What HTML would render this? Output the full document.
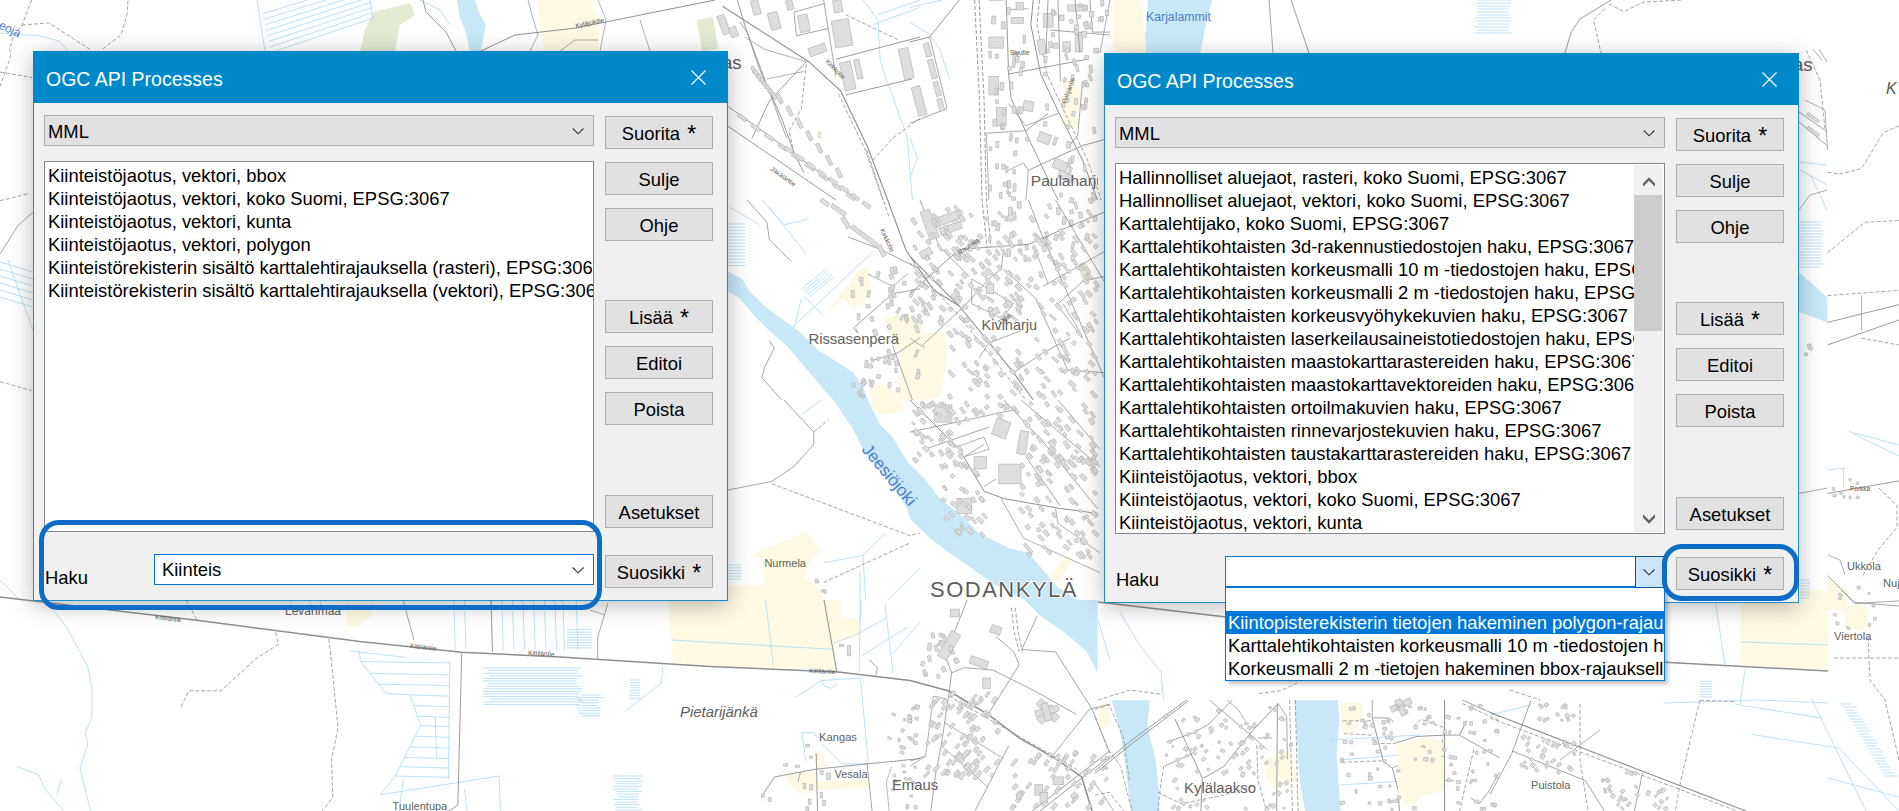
<!DOCTYPE html>
<html><head><meta charset="utf-8">
<style>
*{box-sizing:border-box;margin:0;padding:0}
html,body{width:1899px;height:811px;overflow:hidden;background:#fff}
body{position:relative;font-family:"Liberation Sans",sans-serif;font-size:18.4px;color:#000}
#map{position:absolute;left:0;top:0;width:1899px;height:811px}
.win{position:absolute;width:695px;height:550px;background:#f0f0f0;border:1px solid #1890d0;border-top:none;box-shadow:0 4px 22px rgba(0,0,0,0.28)}
.title{position:absolute;left:-1px;top:0;width:695px;height:52px;background:#0089ca}
.title span{position:absolute;left:13px;top:17px;color:#fff;font-size:19.5px}
.xbtn{position:absolute;left:658px;top:19px;width:15px;height:15px}
.abs{position:absolute}
.combo{position:absolute;background:#e1e1e1;border:1px solid #adadad}
.list{position:absolute;background:#fff;border:1px solid #828790;overflow:hidden}
.list div{height:23px;line-height:23px;white-space:nowrap;padding-left:3px;overflow:hidden}
.list.sb div{width:518px}
.btn{position:absolute;width:108px;height:33px;background:#e1e1e1;border:1px solid #adadad;text-align:center;line-height:33px}
.ast{font-size:23px;margin-left:2px;line-height:0;position:relative;top:2px}
.lbl{position:absolute;white-space:nowrap}
.hl{position:absolute;border:5px solid #0c6cc6;border-radius:20px}
.drop{position:absolute;background:#fff;border:1px solid #0078d7}
</style></head><body>
<div id="map"><svg width="1899" height="811" viewBox="0 0 1899 811"><polygon points="727.9,271.5 742.2,278.9 749.6,291.2 764.4,306 781.7,318.4 801.4,333.2 818.6,350.4 838.4,362.8 853.2,372.6 863,387.4 868,400 880.3,424.7 892.6,437 907.4,461.7 924.8,479 939.6,498.6 959.3,513.4 979,533.2 1008.6,548 1028.4,553 1043.2,570 1058,587.4 1077.7,600 1097.5,600 1097.5,672.8 1086.9,652 1066,633.8 1040,615.6 1024.4,600 1008.6,592.4 991.4,582.5 974,570 949.5,553 929.7,538 910,518.4 907.4,508.5 892.6,486.3 877.8,469 863,449.3 853.2,429.6 843.3,414.8 833.4,400 826,392.4 813.7,377.6 798.9,360.3 786.6,345.5 769.3,330.7 754.5,315.9 739.7,298.6 727.9,291.2" fill="#c8e8f8"/><polygon points="457,0 475,0 480,15 486,25 483,40 481,51 470,51 465,30 459,15" fill="#c8e8f8"/><polygon points="1148,0 1212,0 1206,25 1200,53 1140,53 1146,30" fill="#c8e8f8"/><polygon points="1799,272.4 1811.5,283 1827.5,297.4 1827.5,322.4 1799,311.7" fill="#c8e8f8"/><polygon points="1111.8,700.3 1150,700.3 1147.2,726.2 1155.4,758.9 1158,780.7 1159.5,811 1130.9,811 1125.4,767 1120,731.6" fill="#c8e8f8"/><polygon points="1294.3,700.3 1337.9,700.3 1339.3,720.8 1336.5,753.4 1340.6,811 1305.2,811 1299.8,780.7 1297,742.5" fill="#c8e8f8"/><polygon points="538,0 590,0 600,20 598,51 545,51 540,25" fill="#fdf9e2"/><polygon points="1113,0 1140,0 1146,40 1146,53 1113,53" fill="#fdf9e2"/><polygon points="1063,81 1074,81 1080,92 1082.6,105 1076,112 1080,124 1071,128.5 1063,124 1061,108 1065,98" fill="#fdf9e2"/><polygon points="823.6,315.9 858,271.5 868,266.6 871.7,296 853.2,308.5 843.3,298.6" fill="#fdf9e2"/><polygon points="882.8,318.4 907.4,313.4 920,323.3 922,333 946,333 947,345 945,370 940,397 920,400 897.6,400 900,357.8 892.6,338" fill="#fdf9e2"/><polygon points="870,387 883,384 893,392 906,410 885,415 872,410" fill="#fdf9e2"/><polygon points="749.6,555.4 806.3,532 821,550.4 808.8,562.8 803.8,577.6 818.6,587.4 823.6,600 841,600 842.2,618.2 860.4,619.5 860.4,636.4 834.4,642.9 837,670.2 673,664 668,600 727.9,600 727.9,585 765,585 762,558" fill="#fdf9e2"/><polygon points="1048,578 1066,555 1073,560 1058,583" fill="#fdf9e2"/><polygon points="346,603 374,603 372,615 355,627 346,625" fill="#fdf9e2"/><polygon points="1740.7,590 1827.9,590 1827.9,669 1740.7,665" fill="#fdf9e2"/><polygon points="1844,606.3 1862,604 1868.7,612 1866,629.5 1846,629.5" fill="#fdf9e2"/><polygon points="1827.5,577.4 1847,590 1847,610 1827.5,610" fill="#fdf9e2"/><polygon points="1340.6,703 1362.4,703 1362,720 1350,734.4 1340.6,730" fill="#fdf9e2"/><polygon points="1395,745 1430,737 1444,745 1444,790 1420,797 1405,780" fill="#fdf9e2"/><polygon points="1264,760 1290,750.7 1297,780.7 1275,790 1266,778" fill="#fdf9e2"/><polygon points="1100,705 1108,702 1110,725 1100,728" fill="#fdf9e2"/><polygon points="785,774.3 816.2,771.7 818.8,782 868.2,779.5 869.5,787.3 818.8,789.9 800.6,793.8 787.6,782" fill="#fdf9e2"/><polygon points="813.6,750.8 824,752.1 824,766.5 816.2,769" fill="#fdf9e2"/><polygon points="373,12 410,3 415,15 400,25 395,51 360,51 365,30" fill="#e3ebd3"/><polygon points="697,20 713,17 718,49 702,51" fill="#e3ebd3"/><polygon points="1077.7,265 1086,261.7 1090,276 1082,279" fill="#e3ebd3"/><rect x="818" y="132" width="3" height="6" fill="#e3ebd3" stroke="#c8d4b0" stroke-width="0.6"/><polyline points="262,14 372,-20" fill="none" stroke="#a9dbf5" stroke-width="0.8"/><polyline points="263.3,19.5 372,-14.5" fill="none" stroke="#a9dbf5" stroke-width="0.8"/><polyline points="264.6,25 372,-9" fill="none" stroke="#a9dbf5" stroke-width="0.8"/><polyline points="265.9,30.5 372,-3.5" fill="none" stroke="#a9dbf5" stroke-width="0.8"/><polyline points="267.2,36 372,2" fill="none" stroke="#a9dbf5" stroke-width="0.8"/><polyline points="268.5,41.5 372,7.5" fill="none" stroke="#a9dbf5" stroke-width="0.8"/><polyline points="269.8,47 372,13" fill="none" stroke="#a9dbf5" stroke-width="0.8"/><polyline points="271.1,52.5 372,18.5" fill="none" stroke="#a9dbf5" stroke-width="0.8"/><polyline points="257,0 265,51" fill="none" stroke="#a9dbf5" stroke-width="0.8"/><polyline points="370,0 373,20" fill="none" stroke="#a9dbf5" stroke-width="0.8"/><polyline points="0,33 40,36 59,41 68,51" fill="none" stroke="#a9dbf5" stroke-width="0.8"/><polyline points="420,0 440,10 450,25" fill="none" stroke="#a9dbf5" stroke-width="0.8"/><polyline points="863,0 877.8,19.7 880.3,61.7 907.4,138.1 912.4,200" fill="none" stroke="#a9dbf5" stroke-width="0.8"/><polyline points="872.9,24.7 920,7.4" fill="none" stroke="#a9dbf5" stroke-width="0.8"/><polyline points="877.8,14.8 920,0" fill="none" stroke="#a9dbf5" stroke-width="0.8"/><polyline points="910,22.2 929.7,34.5 939.6,49.3 949.5,78.9" fill="none" stroke="#a9dbf5" stroke-width="0.8"/><polyline points="910,7.4 942.1,0" fill="none" stroke="#a9dbf5" stroke-width="0.8"/><polyline points="910,138.1 917.4,157.8 910,177.6" fill="none" stroke="#a9dbf5" stroke-width="0.8"/><polyline points="729.9,207.4 759.5,224.7" fill="none" stroke="#a9dbf5" stroke-width="0.8"/><polyline points="761.9,200 784.1,224.7 806.3,219.7 808.8,217.3" fill="none" stroke="#a9dbf5" stroke-width="0.8"/><polyline points="769.3,207.4 806.3,254.3" fill="none" stroke="#a9dbf5" stroke-width="0.8"/><polyline points="791.5,328.2 872.9,251.8" fill="none" stroke="#a9dbf5" stroke-width="0.8"/><polyline points="801.4,288.8 826,269.1" fill="none" stroke="#a9dbf5" stroke-width="0.8"/><polyline points="803.4,290.8 828,271" fill="none" stroke="#a9dbf5" stroke-width="0.8"/><polyline points="805.3,292.7 830,273" fill="none" stroke="#a9dbf5" stroke-width="0.8"/><polyline points="807.3,294.7 832,275" fill="none" stroke="#a9dbf5" stroke-width="0.8"/><polyline points="809.3,296.7 833.9,276.9" fill="none" stroke="#a9dbf5" stroke-width="0.8"/><polyline points="803.8,296.2 823.6,315.9" fill="none" stroke="#a9dbf5" stroke-width="0.8"/><polyline points="801.4,298.6 794,328.2" fill="none" stroke="#a9dbf5" stroke-width="0.8"/><polyline points="728,224 745,224" fill="none" stroke="#a9dbf5" stroke-width="0.8"/><polyline points="728,227.2 745,227.2" fill="none" stroke="#a9dbf5" stroke-width="0.8"/><polyline points="728,230.4 745,230.4" fill="none" stroke="#a9dbf5" stroke-width="0.8"/><polyline points="728,233.6 745,233.6" fill="none" stroke="#a9dbf5" stroke-width="0.8"/><polyline points="728,236.8 745,236.8" fill="none" stroke="#a9dbf5" stroke-width="0.8"/><polyline points="728,240 745,240" fill="none" stroke="#a9dbf5" stroke-width="0.8"/><polyline points="728,243.2 745,243.2" fill="none" stroke="#a9dbf5" stroke-width="0.8"/><polyline points="728,246.4 745,246.4" fill="none" stroke="#a9dbf5" stroke-width="0.8"/><polyline points="728,249.6 745,249.6" fill="none" stroke="#a9dbf5" stroke-width="0.8"/><polyline points="728,252.8 745,252.8" fill="none" stroke="#a9dbf5" stroke-width="0.8"/><polyline points="728,256 745,256" fill="none" stroke="#a9dbf5" stroke-width="0.8"/><polyline points="728,259.2 745,259.2" fill="none" stroke="#a9dbf5" stroke-width="0.8"/><polyline points="728,262.4 745,262.4" fill="none" stroke="#a9dbf5" stroke-width="0.8"/><polyline points="728,265.6 745,265.6" fill="none" stroke="#a9dbf5" stroke-width="0.8"/><polyline points="801.4,414.8 821.1,400" fill="none" stroke="#a9dbf5" stroke-width="0.8"/><polyline points="863,555.4 865.5,600" fill="none" stroke="#a9dbf5" stroke-width="0.8"/><polyline points="823.6,562.8 863,555.4 885.2,533.2" fill="none" stroke="#a9dbf5" stroke-width="0.8"/><polyline points="887.7,600 920,567.7" fill="none" stroke="#a9dbf5" stroke-width="0.8"/><polyline points="728,565 741,565" fill="none" stroke="#a9dbf5" stroke-width="0.8"/><polyline points="728,567.8 741,567.8" fill="none" stroke="#a9dbf5" stroke-width="0.8"/><polyline points="728,570.6 741,570.6" fill="none" stroke="#a9dbf5" stroke-width="0.8"/><polyline points="728,573.4 741,573.4" fill="none" stroke="#a9dbf5" stroke-width="0.8"/><polyline points="728,576.2 741,576.2" fill="none" stroke="#a9dbf5" stroke-width="0.8"/><polyline points="728,579 741,579" fill="none" stroke="#a9dbf5" stroke-width="0.8"/><polyline points="672,640 720,642.9 834.4,649.4" fill="none" stroke="#a9dbf5" stroke-width="0.8"/><polyline points="765.5,600 773.3,665" fill="none" stroke="#a9dbf5" stroke-width="0.8"/><polyline points="860.4,600 859.1,672.8" fill="none" stroke="#a9dbf5" stroke-width="0.8"/><polyline points="834.4,642.9 855.2,635.1 886.4,618.2" fill="none" stroke="#a9dbf5" stroke-width="0.8"/><polyline points="861.7,655.9 907.3,627.3" fill="none" stroke="#a9dbf5" stroke-width="0.8"/><polyline points="891.7,654.6 920,622.1" fill="none" stroke="#a9dbf5" stroke-width="0.8"/><polyline points="885.1,605.2 893,672.8" fill="none" stroke="#a9dbf5" stroke-width="0.8"/><polyline points="795.4,697.5 821.4,680.6 860.4,678 868.2,761.2" fill="none" stroke="#a9dbf5" stroke-width="0.8"/><polyline points="821.4,680.6 824,685.8 831.8,688.4 837,683.2" fill="none" stroke="#a9dbf5" stroke-width="0.8"/><polyline points="801.9,732.6 813.6,732.6 818.8,740.4 842.2,763.8 868.2,763.8" fill="none" stroke="#a9dbf5" stroke-width="0.8"/><polyline points="801.9,732.6 805.8,761.2" fill="none" stroke="#a9dbf5" stroke-width="0.8"/><polyline points="860,572 860.4,619.5" fill="none" stroke="#a9dbf5" stroke-width="0.8"/><polyline points="453.8,601 455.3,650" fill="none" stroke="#a9dbf5" stroke-width="0.8"/><polyline points="464.5,601 466,650" fill="none" stroke="#a9dbf5" stroke-width="0.8"/><polyline points="491,601 492.5,650" fill="none" stroke="#a9dbf5" stroke-width="0.8"/><polyline points="501.8,601 503.3,650" fill="none" stroke="#a9dbf5" stroke-width="0.8"/><polyline points="512.4,601 513.9,650" fill="none" stroke="#a9dbf5" stroke-width="0.8"/><polyline points="523,601 524.5,650" fill="none" stroke="#a9dbf5" stroke-width="0.8"/><polyline points="533.7,601 535.2,650" fill="none" stroke="#a9dbf5" stroke-width="0.8"/><polyline points="544.4,601 545.9,650" fill="none" stroke="#a9dbf5" stroke-width="0.8"/><polyline points="555,601 556.5,650" fill="none" stroke="#a9dbf5" stroke-width="0.8"/><polyline points="563,601 564.5,650" fill="none" stroke="#a9dbf5" stroke-width="0.8"/><polyline points="576.3,601 577.8,650" fill="none" stroke="#a9dbf5" stroke-width="0.8"/><polyline points="290,601 292,612" fill="none" stroke="#a9dbf5" stroke-width="0.8"/><polyline points="310,601 312,612" fill="none" stroke="#a9dbf5" stroke-width="0.8"/><polyline points="320,601 322,612" fill="none" stroke="#a9dbf5" stroke-width="0.8"/><polyline points="567,629.6 592,629.6" fill="none" stroke="#a9dbf5" stroke-width="0.8"/><polyline points="567,632.2 592,632.2" fill="none" stroke="#a9dbf5" stroke-width="0.8"/><polyline points="567,634.8 592,634.8" fill="none" stroke="#a9dbf5" stroke-width="0.8"/><polyline points="567,637.4 592,637.4" fill="none" stroke="#a9dbf5" stroke-width="0.8"/><polyline points="567,640 592,640" fill="none" stroke="#a9dbf5" stroke-width="0.8"/><polyline points="567,642.6 592,642.6" fill="none" stroke="#a9dbf5" stroke-width="0.8"/><polyline points="567,645.2 592,645.2" fill="none" stroke="#a9dbf5" stroke-width="0.8"/><polyline points="567,647.8 592,647.8" fill="none" stroke="#a9dbf5" stroke-width="0.8"/><polyline points="359.3,650.9 360.6,661.6 385.9,693.5 409.9,694.8 420.6,725.5 395.3,776 380.6,794.7" fill="none" stroke="#a9dbf5" stroke-width="0.8"/><polyline points="360.6,661.6 449.8,662.9" fill="none" stroke="#a9dbf5" stroke-width="0.8"/><polyline points="370.1,673.5 449.8,674.9" fill="none" stroke="#a9dbf5" stroke-width="0.8"/><polyline points="378.6,684.2 449.8,685.5" fill="none" stroke="#a9dbf5" stroke-width="0.8"/><polyline points="409.9,694.8 449.8,696.2" fill="none" stroke="#a9dbf5" stroke-width="0.8"/><polyline points="413.6,705.5 449.8,706.8" fill="none" stroke="#a9dbf5" stroke-width="0.8"/><polyline points="417.3,716.1 449.8,717.5" fill="none" stroke="#a9dbf5" stroke-width="0.8"/><polyline points="420.6,725.5 449.8,726.8" fill="none" stroke="#a9dbf5" stroke-width="0.8"/><polyline points="415.2,736.1 449.8,737.4" fill="none" stroke="#a9dbf5" stroke-width="0.8"/><polyline points="409.9,746.8 449.8,748.1" fill="none" stroke="#a9dbf5" stroke-width="0.8"/><polyline points="404.6,757.4 449.8,758.7" fill="none" stroke="#a9dbf5" stroke-width="0.8"/><polyline points="399.9,766.7 449.8,768.1" fill="none" stroke="#a9dbf5" stroke-width="0.8"/><polyline points="395.3,776 449.8,777.4" fill="none" stroke="#a9dbf5" stroke-width="0.8"/><polyline points="449.8,661.6 448.5,778.7" fill="none" stroke="#a9dbf5" stroke-width="0.8"/><polyline points="435.2,716.1 436.5,757.4" fill="none" stroke="#a9dbf5" stroke-width="0.8"/><polyline points="380.6,794.7 499.1,776 500.4,810.9" fill="none" stroke="#a9dbf5" stroke-width="0.8"/><polyline points="403.2,778.7 399.3,810.9" fill="none" stroke="#a9dbf5" stroke-width="0.8"/><polyline points="464.5,789.4 467.1,810.9" fill="none" stroke="#a9dbf5" stroke-width="0.8"/><polyline points="350,650.9 407.2,657.6" fill="none" stroke="#a9dbf5" stroke-width="0.8"/><polyline points="482.6,668 581,668" fill="none" stroke="#a9dbf5" stroke-width="0.8"/><polyline points="488.2,670.6 578.2,670.6" fill="none" stroke="#a9dbf5" stroke-width="0.8"/><polyline points="482.7,673.2 578.7,673.2" fill="none" stroke="#a9dbf5" stroke-width="0.8"/><polyline points="489.7,675.8 582.1,675.8" fill="none" stroke="#a9dbf5" stroke-width="0.8"/><polyline points="482.9,678.4 578,678.4" fill="none" stroke="#a9dbf5" stroke-width="0.8"/><polyline points="482.8,681 576.5,681" fill="none" stroke="#a9dbf5" stroke-width="0.8"/><polyline points="488.4,683.6 577.4,683.6" fill="none" stroke="#a9dbf5" stroke-width="0.8"/><polyline points="486.5,686.2 579.6,686.2" fill="none" stroke="#a9dbf5" stroke-width="0.8"/><polyline points="483.5,688.8 581.9,688.8" fill="none" stroke="#a9dbf5" stroke-width="0.8"/><polyline points="483,691.4 581.1,691.4" fill="none" stroke="#a9dbf5" stroke-width="0.8"/><polyline points="482.9,694 579.4,694" fill="none" stroke="#a9dbf5" stroke-width="0.8"/><polyline points="483.7,696.6 578.2,696.6" fill="none" stroke="#a9dbf5" stroke-width="0.8"/><polyline points="489.8,699.2 582.4,699.2" fill="none" stroke="#a9dbf5" stroke-width="0.8"/><polyline points="484.4,701.8 583.1,701.8" fill="none" stroke="#a9dbf5" stroke-width="0.8"/><polyline points="483.7,704.4 579.2,704.4" fill="none" stroke="#a9dbf5" stroke-width="0.8"/><polyline points="581.1,695 600.9,695" fill="none" stroke="#a9dbf5" stroke-width="0.8"/><polyline points="576.6,697.6 602.9,697.6" fill="none" stroke="#a9dbf5" stroke-width="0.8"/><polyline points="577.3,700.2 598.5,700.2" fill="none" stroke="#a9dbf5" stroke-width="0.8"/><polyline points="580.6,702.8 599,702.8" fill="none" stroke="#a9dbf5" stroke-width="0.8"/><polyline points="577.8,705.4 597.4,705.4" fill="none" stroke="#a9dbf5" stroke-width="0.8"/><polyline points="576.5,708 600.5,708" fill="none" stroke="#a9dbf5" stroke-width="0.8"/><polyline points="577.5,710.6 600.6,710.6" fill="none" stroke="#a9dbf5" stroke-width="0.8"/><polyline points="578.2,713.2 599.7,713.2" fill="none" stroke="#a9dbf5" stroke-width="0.8"/><polyline points="581.8,715.8 599.9,715.8" fill="none" stroke="#a9dbf5" stroke-width="0.8"/><polyline points="629.5,680 640,680" fill="none" stroke="#a9dbf5" stroke-width="0.8"/><polyline points="629.5,682.6 640,682.6" fill="none" stroke="#a9dbf5" stroke-width="0.8"/><polyline points="629.5,685.2 640,685.2" fill="none" stroke="#a9dbf5" stroke-width="0.8"/><polyline points="629.5,687.8 640,687.8" fill="none" stroke="#a9dbf5" stroke-width="0.8"/><polyline points="629.5,690.4 640,690.4" fill="none" stroke="#a9dbf5" stroke-width="0.8"/><polyline points="629.5,693 640,693" fill="none" stroke="#a9dbf5" stroke-width="0.8"/><polyline points="629.5,695.6 640,695.6" fill="none" stroke="#a9dbf5" stroke-width="0.8"/><polyline points="629.5,698.2 640,698.2" fill="none" stroke="#a9dbf5" stroke-width="0.8"/><polyline points="613.2,776 642.8,776" fill="none" stroke="#a9dbf5" stroke-width="0.8"/><polyline points="614.4,778.6 641.2,778.6" fill="none" stroke="#a9dbf5" stroke-width="0.8"/><polyline points="614.5,781.2 641.9,781.2" fill="none" stroke="#a9dbf5" stroke-width="0.8"/><polyline points="616.6,783.8 638.8,783.8" fill="none" stroke="#a9dbf5" stroke-width="0.8"/><polyline points="614.1,786.4 641.3,786.4" fill="none" stroke="#a9dbf5" stroke-width="0.8"/><polyline points="613.4,789 638.4,789" fill="none" stroke="#a9dbf5" stroke-width="0.8"/><polyline points="616.4,791.6 642.1,791.6" fill="none" stroke="#a9dbf5" stroke-width="0.8"/><polyline points="616.7,794.2 638.7,794.2" fill="none" stroke="#a9dbf5" stroke-width="0.8"/><polyline points="618.5,796.8 638.2,796.8" fill="none" stroke="#a9dbf5" stroke-width="0.8"/><polyline points="613.1,799.4 638.6,799.4" fill="none" stroke="#a9dbf5" stroke-width="0.8"/><polyline points="615.7,802 637.4,802" fill="none" stroke="#a9dbf5" stroke-width="0.8"/><polyline points="614.1,804.6 639.2,804.6" fill="none" stroke="#a9dbf5" stroke-width="0.8"/><polyline points="616.4,807.2 637.8,807.2" fill="none" stroke="#a9dbf5" stroke-width="0.8"/><polyline points="615.2,809.8 642.3,809.8" fill="none" stroke="#a9dbf5" stroke-width="0.8"/><polyline points="624.2,712.1 661.5,682.9 662.8,666.9" fill="none" stroke="#a9dbf5" stroke-width="0.8"/><polyline points="49,605.6 66.6,627 87.9,667 91.9,688 91.9,717.5 85.2,733.4 87.9,744 79.9,768 90.5,811" fill="none" stroke="#a9dbf5" stroke-width="0.8"/><polyline points="17.3,766.7 38.6,774.7 45.3,789.4 63.9,811" fill="none" stroke="#a9dbf5" stroke-width="0.8"/><polyline points="61,780 57,795" fill="none" stroke="#a9dbf5" stroke-width="0.8"/><polyline points="0,262 33,272" fill="none" stroke="#a9dbf5" stroke-width="0.8"/><polyline points="0,269 33,279" fill="none" stroke="#a9dbf5" stroke-width="0.8"/><polyline points="0,276 33,286" fill="none" stroke="#a9dbf5" stroke-width="0.8"/><polyline points="0,283 33,293" fill="none" stroke="#a9dbf5" stroke-width="0.8"/><polyline points="0,290 33,300" fill="none" stroke="#a9dbf5" stroke-width="0.8"/><polyline points="0,297 33,307" fill="none" stroke="#a9dbf5" stroke-width="0.8"/><polyline points="8,260 22,300 33,330" fill="none" stroke="#a9dbf5" stroke-width="0.8"/><polyline points="0,580 20,600" fill="none" stroke="#a9dbf5" stroke-width="0.8"/><polyline points="1120,612 1139,644.5 1160.8,671.7 1163.5,699" fill="none" stroke="#a9dbf5" stroke-width="0.8"/><polyline points="1098,620 1110,660" fill="none" stroke="#a9dbf5" stroke-width="0.8"/><polyline points="1699.8,681.3 1712,681.3" fill="none" stroke="#a9dbf5" stroke-width="0.8"/><polyline points="1699.8,683.9 1712,683.9" fill="none" stroke="#a9dbf5" stroke-width="0.8"/><polyline points="1699.8,686.5 1712,686.5" fill="none" stroke="#a9dbf5" stroke-width="0.8"/><polyline points="1699.8,689.1 1712,689.1" fill="none" stroke="#a9dbf5" stroke-width="0.8"/><polyline points="1699.8,691.7 1712,691.7" fill="none" stroke="#a9dbf5" stroke-width="0.8"/><polyline points="1699.8,694.3 1712,694.3" fill="none" stroke="#a9dbf5" stroke-width="0.8"/><polyline points="1699.8,696.9 1712,696.9" fill="none" stroke="#a9dbf5" stroke-width="0.8"/><polyline points="1664,703 1760,700 1828,703" fill="none" stroke="#a9dbf5" stroke-width="0.8"/><polyline points="1740,704 1745,670" fill="none" stroke="#a9dbf5" stroke-width="0.8"/><polyline points="1715,600 1725,665" fill="none" stroke="#a9dbf5" stroke-width="0.8"/><polyline points="1741,642 1828,645" fill="none" stroke="#a9dbf5" stroke-width="0.8"/><polyline points="1735.2,704.4 1822.4,718.1" fill="none" stroke="#a9dbf5" stroke-width="0.8"/><polyline points="1751.6,734.4 1838.8,748 1899,811" fill="none" stroke="#a9dbf5" stroke-width="0.8"/><polyline points="1811.5,699 1866,811" fill="none" stroke="#a9dbf5" stroke-width="0.8"/><polyline points="1827.9,778 1899,797.1" fill="none" stroke="#a9dbf5" stroke-width="0.8"/><polyline points="1841,704 1850.9,704" fill="none" stroke="#a9dbf5" stroke-width="0.8"/><polyline points="1842.8,707 1856.8,707" fill="none" stroke="#a9dbf5" stroke-width="0.8"/><polyline points="1844.6,710 1853.1,710" fill="none" stroke="#a9dbf5" stroke-width="0.8"/><polyline points="1846.4,713 1857.7,713" fill="none" stroke="#a9dbf5" stroke-width="0.8"/><polyline points="1848.2,716 1860.6,716" fill="none" stroke="#a9dbf5" stroke-width="0.8"/><polyline points="1850,719 1863.4,719" fill="none" stroke="#a9dbf5" stroke-width="0.8"/><polyline points="1851.8,722 1864.2,722" fill="none" stroke="#a9dbf5" stroke-width="0.8"/><polyline points="1853.6,725 1865.8,725" fill="none" stroke="#a9dbf5" stroke-width="0.8"/><polyline points="1855.4,728 1868.2,728" fill="none" stroke="#a9dbf5" stroke-width="0.8"/><polyline points="1857.2,731 1870.7,731" fill="none" stroke="#a9dbf5" stroke-width="0.8"/><polyline points="1859,734 1869.1,734" fill="none" stroke="#a9dbf5" stroke-width="0.8"/><polyline points="1860.8,737 1872.9,737" fill="none" stroke="#a9dbf5" stroke-width="0.8"/><polyline points="1862.6,740 1876,740" fill="none" stroke="#a9dbf5" stroke-width="0.8"/><polyline points="1864.4,743 1877.6,743" fill="none" stroke="#a9dbf5" stroke-width="0.8"/><polyline points="1866.2,746 1876.7,746" fill="none" stroke="#a9dbf5" stroke-width="0.8"/><polyline points="1868,749 1880.7,749" fill="none" stroke="#a9dbf5" stroke-width="0.8"/><polyline points="1869.8,752 1883,752" fill="none" stroke="#a9dbf5" stroke-width="0.8"/><polyline points="1871.6,755 1883,755" fill="none" stroke="#a9dbf5" stroke-width="0.8"/><polyline points="1873.4,758 1885.1,758" fill="none" stroke="#a9dbf5" stroke-width="0.8"/><polyline points="1875.2,761 1885.5,761" fill="none" stroke="#a9dbf5" stroke-width="0.8"/><polyline points="1877,764 1888.5,764" fill="none" stroke="#a9dbf5" stroke-width="0.8"/><polyline points="1878.8,767 1890.5,767" fill="none" stroke="#a9dbf5" stroke-width="0.8"/><polyline points="1880.6,770 1889.1,770" fill="none" stroke="#a9dbf5" stroke-width="0.8"/><polyline points="1882.4,773 1894.2,773" fill="none" stroke="#a9dbf5" stroke-width="0.8"/><polyline points="1884.2,776 1898.2,776" fill="none" stroke="#a9dbf5" stroke-width="0.8"/><polyline points="1530.9,705 1490,715" fill="none" stroke="#a9dbf5" stroke-width="0.8"/><polyline points="1330,740 1420,735" fill="none" stroke="#a9dbf5" stroke-width="0.8"/><polyline points="1340,760 1400,755" fill="none" stroke="#a9dbf5" stroke-width="0.8"/><polyline points="1340,785 1420,780" fill="none" stroke="#a9dbf5" stroke-width="0.8"/><polyline points="1477.5,0 1510.9,0" fill="none" stroke="#a9dbf5" stroke-width="0.8"/><polyline points="1475.6,3 1510.9,3" fill="none" stroke="#a9dbf5" stroke-width="0.8"/><polyline points="1476.3,6 1509.8,6" fill="none" stroke="#a9dbf5" stroke-width="0.8"/><polyline points="1477.4,9 1508.3,9" fill="none" stroke="#a9dbf5" stroke-width="0.8"/><polyline points="1477,12 1508.1,12" fill="none" stroke="#a9dbf5" stroke-width="0.8"/><polyline points="1476.4,15 1509.9,15" fill="none" stroke="#a9dbf5" stroke-width="0.8"/><polyline points="1474.9,18 1510.8,18" fill="none" stroke="#a9dbf5" stroke-width="0.8"/><polyline points="1476,21 1510.5,21" fill="none" stroke="#a9dbf5" stroke-width="0.8"/><polyline points="1477.7,24 1509,24" fill="none" stroke="#a9dbf5" stroke-width="0.8"/><polyline points="1474,27 1509.2,27" fill="none" stroke="#a9dbf5" stroke-width="0.8"/><polyline points="1476.7,30 1508.8,30" fill="none" stroke="#a9dbf5" stroke-width="0.8"/><polyline points="1474.7,33 1511.6,33" fill="none" stroke="#a9dbf5" stroke-width="0.8"/><polyline points="1799,162 1827,165" fill="none" stroke="#a9dbf5" stroke-width="0.8"/><polyline points="1800,170 1827,185" fill="none" stroke="#a9dbf5" stroke-width="0.8"/><polyline points="1810,175 1820,195 1827,210" fill="none" stroke="#a9dbf5" stroke-width="0.8"/><polyline points="1799.6,222 1821.8,222" fill="none" stroke="#a9dbf5" stroke-width="0.8"/><polyline points="1800.6,225 1821.3,225" fill="none" stroke="#a9dbf5" stroke-width="0.8"/><polyline points="1799.7,228 1820.8,228" fill="none" stroke="#a9dbf5" stroke-width="0.8"/><polyline points="1798.7,231 1823.2,231" fill="none" stroke="#a9dbf5" stroke-width="0.8"/><polyline points="1800.7,234 1823.5,234" fill="none" stroke="#a9dbf5" stroke-width="0.8"/><polyline points="1798.5,237 1822.3,237" fill="none" stroke="#a9dbf5" stroke-width="0.8"/><polyline points="1798.3,240 1820.5,240" fill="none" stroke="#a9dbf5" stroke-width="0.8"/><polyline points="1799,243 1823.3,243" fill="none" stroke="#a9dbf5" stroke-width="0.8"/><polyline points="1800.4,246 1822.8,246" fill="none" stroke="#a9dbf5" stroke-width="0.8"/><polyline points="1800.8,249 1821.1,249" fill="none" stroke="#a9dbf5" stroke-width="0.8"/><polyline points="1797.7,252 1821.8,252" fill="none" stroke="#a9dbf5" stroke-width="0.8"/><polyline points="1798.1,255 1820.9,255" fill="none" stroke="#a9dbf5" stroke-width="0.8"/><polyline points="1798.7,258 1822.5,258" fill="none" stroke="#a9dbf5" stroke-width="0.8"/><polyline points="1799,261 1821.3,261" fill="none" stroke="#a9dbf5" stroke-width="0.8"/><polyline points="1800.4,264 1823.9,264" fill="none" stroke="#a9dbf5" stroke-width="0.8"/><polyline points="1798.8,267 1820.3,267" fill="none" stroke="#a9dbf5" stroke-width="0.8"/><polyline points="1849,430.8 1861.5,438 1899,455.9" fill="none" stroke="#a9dbf5" stroke-width="0.8"/><polyline points="1855,433 1899,445" fill="none" stroke="#a9dbf5" stroke-width="0.8"/><polyline points="1827.5,470 1843.6,468.4 1843.6,488" fill="none" stroke="#a9dbf5" stroke-width="0.8"/><polyline points="1800,580 1810,580" fill="none" stroke="#a9dbf5" stroke-width="0.8"/><polyline points="1800,583 1810,583" fill="none" stroke="#a9dbf5" stroke-width="0.8"/><polyline points="1800,586 1810,586" fill="none" stroke="#a9dbf5" stroke-width="0.8"/><polyline points="1800,589 1810,589" fill="none" stroke="#a9dbf5" stroke-width="0.8"/><polyline points="1800,592 1810,592" fill="none" stroke="#a9dbf5" stroke-width="0.8"/><polyline points="1800,595 1810,595" fill="none" stroke="#a9dbf5" stroke-width="0.8"/><polyline points="1800,598 1810,598" fill="none" stroke="#a9dbf5" stroke-width="0.8"/><polyline points="0,597 199,620.5 360,641.6 461.8,652.2 560,657 710,666.4 838,672 910,680.6 949,691 988,714.4 1019,737.8 1055.6,758.6 1081.7,776.9 1092,811" fill="none" stroke="#8f8f8f" stroke-width="1.5"/><polyline points="1098,602 1226,617" fill="none" stroke="#8f8f8f" stroke-width="1.5"/><polyline points="1664.4,662.2 1827.9,671" fill="none" stroke="#8f8f8f" stroke-width="1.5"/><polyline points="31.7,0 22,25 14,35 9.6,49 10.7,55 9,61.4 0,86.4" fill="none" stroke="#9c9c9c" stroke-width="0.9" stroke-dasharray="4 2"/><polyline points="22,25 48.7,22.9 66,34 91,50" fill="none" stroke="#9c9c9c" stroke-width="0.9" stroke-dasharray="4 2"/><polyline points="103,48.7 121,35 127,14.7 128,0" fill="none" stroke="#9c9c9c" stroke-width="0.9" stroke-dasharray="4 2"/><polyline points="0,72 32,77.5" fill="none" stroke="#9c9c9c" stroke-width="0.9" stroke-dasharray="4 2"/><polyline points="0,200.7 28.6,193.6" fill="none" stroke="#9c9c9c" stroke-width="0.9" stroke-dasharray="4 2"/><polyline points="0,381.5 31.5,390.7" fill="none" stroke="#9c9c9c" stroke-width="0.9" stroke-dasharray="4 2"/><polyline points="0,254 17.9,225.7 34,211.4" fill="none" stroke="#8f8f8f" stroke-width="0.8"/><polyline points="275.6,632.3 278.2,644.3 255.6,659 221,690.8 189,690.8 181,706.8" fill="none" stroke="#9c9c9c" stroke-width="0.9" stroke-dasharray="4 2"/><polyline points="328.8,639 332.8,674.9 338,728 331.5,760 332.8,797.3 322,811" fill="none" stroke="#9c9c9c" stroke-width="0.9" stroke-dasharray="4 2"/><polyline points="186,600 198,621.6" fill="none" stroke="#9c9c9c" stroke-width="0.9" stroke-dasharray="4 2"/><polyline points="461.8,652.2 457.8,805.3 448.5,811" fill="none" stroke="#8f8f8f" stroke-width="0.9"/><polyline points="403,600 414,640" fill="none" stroke="#8f8f8f" stroke-width="0.8"/><polyline points="491,600 492.4,652" fill="none" stroke="#8f8f8f" stroke-width="0.8"/><polyline points="608,603 597.6,637.6 597.6,659" fill="none" stroke="#8f8f8f" stroke-width="0.8"/><polyline points="590,610 605,615" fill="none" stroke="#8f8f8f" stroke-width="0.7"/><polyline points="423,0 426,12 446,32 456,51" fill="none" stroke="#8f8f8f" stroke-width="0.9"/><polyline points="481,51 515,35 576,28 715,0" fill="none" stroke="#8f8f8f" stroke-width="1"/><polyline points="530,51 538,35 532,15 528,0" fill="none" stroke="#8f8f8f" stroke-width="0.7"/><polyline points="598,0 606,20 600,51" fill="none" stroke="#8f8f8f" stroke-width="0.7"/><polyline points="640,20 650,51" fill="none" stroke="#8f8f8f" stroke-width="0.7"/><polyline points="560,51 575,40 598,40" fill="none" stroke="#8f8f8f" stroke-width="0.7"/><polyline points="722.5,6.2 808.8,61.7 840.8,91.2 868,148 887.7,200" fill="none" stroke="#8f8f8f" stroke-width="1.1"/><polyline points="838.4,93.7 865.5,150.4 882.8,200" fill="none" stroke="#9c9c9c" stroke-width="0.9" stroke-dasharray="4 2"/><polyline points="737.3,0 744.7,24.7 759.5,69.1 781.7,118.4 794,152.9 803.8,172.6" fill="none" stroke="#8f8f8f" stroke-width="0.9"/><polyline points="739.7,22.2 747.1,32.1 786.6,138.1" fill="none" stroke="#8f8f8f" stroke-width="0.8"/><polyline points="727.4,106 858.1,200" fill="none" stroke="#8f8f8f" stroke-width="0.9"/><polyline points="727.4,125.8 835.9,200" fill="none" stroke="#8f8f8f" stroke-width="0.9"/><polyline points="752.1,138.1 769.3,101.1 806.3,61.7" fill="none" stroke="#8f8f8f" stroke-width="0.9"/><polyline points="835.9,59.2 920,37" fill="none" stroke="#8f8f8f" stroke-width="0.9"/><polyline points="845.8,94.9 912.4,78.9" fill="none" stroke="#8f8f8f" stroke-width="0.9"/><polyline points="794,12.3 823.6,3.7" fill="none" stroke="#8f8f8f" stroke-width="0.8"/><polyline points="794,12.3 796.4,35.8 828.5,28.4" fill="none" stroke="#8f8f8f" stroke-width="0.8"/><polyline points="823.6,0 835.9,76.4" fill="none" stroke="#8f8f8f" stroke-width="0.8"/><polyline points="845.8,14.8 897.6,39.5" fill="none" stroke="#9c9c9c" stroke-width="0.9" stroke-dasharray="4 2"/><polyline points="806.3,64.1 801.4,108.5 789.1,130.7 794,152.9" fill="none" stroke="#9c9c9c" stroke-width="0.9" stroke-dasharray="4 2"/><polyline points="872.9,160.3 892.6,138.1 920,118.4" fill="none" stroke="#9c9c9c" stroke-width="0.9" stroke-dasharray="4 2"/><polyline points="766.9,78.9 803.8,71.5" fill="none" stroke="#8f8f8f" stroke-width="0.7"/><polyline points="744.7,37 764.4,49.3 806.3,61.7" fill="none" stroke="#8f8f8f" stroke-width="0.7"/><rect x="752.1" y="0" width="7.4" height="14.8" fill="#dedede" stroke="#b0b0b0" stroke-width="0.6" transform="rotate(-15 755.8 7.4)"/><rect x="769.3" y="12.3" width="9.9" height="17.3" fill="#dedede" stroke="#b0b0b0" stroke-width="0.6" transform="rotate(-15 774.3 21)"/><rect x="798.9" y="14.8" width="9.9" height="17.3" fill="#dedede" stroke="#b0b0b0" stroke-width="0.6" transform="rotate(-10 803.8 23.4)"/><rect x="833.4" y="19.7" width="17.3" height="27.1" fill="#dedede" stroke="#b0b0b0" stroke-width="0.6" transform="rotate(-10 842.1 33.3)"/><rect x="808.8" y="45.6" width="17.3" height="8.6" fill="#dedede" stroke="#b0b0b0" stroke-width="0.6" transform="rotate(-20 817.4 49.9)"/><rect x="842.1" y="61.7" width="11.1" height="28.4" fill="#dedede" stroke="#b0b0b0" stroke-width="0.6" transform="rotate(-12 847.6 75.8)"/><rect x="855.6" y="59.2" width="5.4" height="19.7" fill="#dedede" stroke="#b0b0b0" stroke-width="0.6" transform="rotate(-12 858.3 69.1)"/><rect x="901.3" y="48.1" width="9.9" height="30.8" fill="#dedede" stroke="#b0b0b0" stroke-width="0.6" transform="rotate(-12 906.2 63.5)"/><rect x="916.1" y="86.3" width="4.9" height="19.7" fill="#dedede" stroke="#b0b0b0" stroke-width="0.6" transform="rotate(-12 918.5 96.2)"/><rect x="720" y="14.8" width="7.4" height="19.7" fill="#dedede" stroke="#b0b0b0" stroke-width="0.6" transform="rotate(-20 723.7 24.7)"/><rect x="729.9" y="27.1" width="7.4" height="9.9" fill="#dedede" stroke="#b0b0b0" stroke-width="0.6" transform="rotate(-20 733.6 32.1)"/><rect x="786.6" y="0" width="6.2" height="9.9" fill="#dedede" stroke="#b0b0b0" stroke-width="0.6" transform="rotate(-15 789.7 4.9)"/><rect x="833.4" y="0" width="8.6" height="12.3" fill="#dedede" stroke="#b0b0b0" stroke-width="0.6" transform="rotate(-10 837.8 6.2)"/><rect x="752.1" y="66.6" width="3" height="7" fill="#dedede" stroke="#b0b0b0" stroke-width="0.6" transform="rotate(-20 753.6 70.1)"/><rect x="755" y="70.3" width="3" height="7" fill="#dedede" stroke="#b0b0b0" stroke-width="0.6" transform="rotate(-20 756.5 73.8)"/><rect x="758" y="74" width="3" height="7" fill="#dedede" stroke="#b0b0b0" stroke-width="0.6" transform="rotate(-20 759.5 77.5)"/><rect x="760.9" y="77.7" width="3" height="7" fill="#dedede" stroke="#b0b0b0" stroke-width="0.6" transform="rotate(-20 762.4 81.2)"/><rect x="763.9" y="81.4" width="3" height="7" fill="#dedede" stroke="#b0b0b0" stroke-width="0.6" transform="rotate(-20 765.4 84.9)"/><rect x="766.9" y="85.1" width="3" height="7" fill="#dedede" stroke="#b0b0b0" stroke-width="0.6" transform="rotate(-20 768.4 88.6)"/><rect x="769.8" y="88.8" width="3" height="7" fill="#dedede" stroke="#b0b0b0" stroke-width="0.6" transform="rotate(-20 771.3 92.3)"/><rect x="772.8" y="92.5" width="3" height="7" fill="#dedede" stroke="#b0b0b0" stroke-width="0.6" transform="rotate(-20 774.3 96)"/><rect x="778" y="93.7" width="3.5" height="10" fill="#dedede" stroke="#b0b0b0" stroke-width="0.6" transform="rotate(-25 779.7 98.7)"/><rect x="787.8" y="106" width="3.5" height="10" fill="#dedede" stroke="#b0b0b0" stroke-width="0.6" transform="rotate(-25 789.6 111)"/><rect x="797.7" y="118.4" width="3.5" height="10" fill="#dedede" stroke="#b0b0b0" stroke-width="0.6" transform="rotate(-25 799.4 123.4)"/><rect x="807.5" y="130.7" width="3.5" height="10" fill="#dedede" stroke="#b0b0b0" stroke-width="0.6" transform="rotate(-25 809.3 135.7)"/><rect x="817.4" y="143" width="3.5" height="10" fill="#dedede" stroke="#b0b0b0" stroke-width="0.6" transform="rotate(-25 819.2 148)"/><rect x="827.3" y="155.4" width="3.5" height="10" fill="#dedede" stroke="#b0b0b0" stroke-width="0.6" transform="rotate(-25 829 160.4)"/><rect x="837.1" y="167.7" width="3.5" height="10" fill="#dedede" stroke="#b0b0b0" stroke-width="0.6" transform="rotate(-25 838.9 172.7)"/><rect x="737.3" y="115.9" width="10" height="3.5" fill="#dedede" stroke="#b0b0b0" stroke-width="0.6" transform="rotate(35 742.3 117.7)"/><rect x="750.8" y="125.8" width="10" height="3.5" fill="#dedede" stroke="#b0b0b0" stroke-width="0.6" transform="rotate(35 755.8 127.5)"/><rect x="764.4" y="135.6" width="10" height="3.5" fill="#dedede" stroke="#b0b0b0" stroke-width="0.6" transform="rotate(35 769.4 137.4)"/><rect x="778" y="145.5" width="10" height="3.5" fill="#dedede" stroke="#b0b0b0" stroke-width="0.6" transform="rotate(35 783 147.2)"/><rect x="791.5" y="155.4" width="10" height="3.5" fill="#dedede" stroke="#b0b0b0" stroke-width="0.6" transform="rotate(35 796.5 157.1)"/><rect x="805.1" y="165.2" width="10" height="3.5" fill="#dedede" stroke="#b0b0b0" stroke-width="0.6" transform="rotate(35 810.1 167)"/><rect x="818.6" y="175.1" width="10" height="3.5" fill="#dedede" stroke="#b0b0b0" stroke-width="0.6" transform="rotate(35 823.6 176.8)"/><rect x="832.2" y="185" width="10" height="3.5" fill="#dedede" stroke="#b0b0b0" stroke-width="0.6" transform="rotate(35 837.2 186.7)"/><rect x="845.8" y="194.8" width="10" height="3.5" fill="#dedede" stroke="#b0b0b0" stroke-width="0.6" transform="rotate(35 850.8 196.6)"/><rect x="784.1" y="148" width="9" height="3.5" fill="#dedede" stroke="#b0b0b0" stroke-width="0.6" transform="rotate(35 788.6 149.7)"/><rect x="795.2" y="155.9" width="9" height="3.5" fill="#dedede" stroke="#b0b0b0" stroke-width="0.6" transform="rotate(35 799.7 157.6)"/><rect x="806.3" y="163.7" width="9" height="3.5" fill="#dedede" stroke="#b0b0b0" stroke-width="0.6" transform="rotate(35 810.8 165.5)"/><rect x="817.4" y="171.6" width="9" height="3.5" fill="#dedede" stroke="#b0b0b0" stroke-width="0.6" transform="rotate(35 821.9 173.4)"/><rect x="828.5" y="179.5" width="9" height="3.5" fill="#dedede" stroke="#b0b0b0" stroke-width="0.6" transform="rotate(35 833 181.3)"/><rect x="839.6" y="187.4" width="9" height="3.5" fill="#dedede" stroke="#b0b0b0" stroke-width="0.6" transform="rotate(35 844.1 189.2)"/><rect x="850.7" y="195.3" width="9" height="3.5" fill="#dedede" stroke="#b0b0b0" stroke-width="0.6" transform="rotate(35 855.2 197.1)"/><rect x="861.8" y="203.2" width="9" height="3.5" fill="#dedede" stroke="#b0b0b0" stroke-width="0.6" transform="rotate(35 866.3 205)"/><polyline points="979.1,0 984,98.6 986.4,200 991,247" fill="none" stroke="#9c9c9c" stroke-width="1" stroke-dasharray="4 2"/><polyline points="974.6,0 979.5,98.6 982,200 987,247" fill="none" stroke="#9c9c9c" stroke-width="1" stroke-dasharray="4 2"/><polyline points="1006.2,0 1008.6,74 1011.1,98.6 1030.8,143 1058,200" fill="none" stroke="#8f8f8f" stroke-width="0.9"/><polyline points="1033.3,0 1030.8,24.7 1040.7,74 1058,111 1082.6,160.3 1097.4,200" fill="none" stroke="#8f8f8f" stroke-width="1"/><polyline points="1039.5,0 1037,24.7 1046.9,74 1064.1,111 1087.6,160.3 1101.1,200" fill="none" stroke="#9c9c9c" stroke-width="0.9" stroke-dasharray="4 2"/><polyline points="1008.6,74 1087.6,59.2" fill="none" stroke="#8f8f8f" stroke-width="0.9"/><polyline points="1058,0 1060.4,81.4" fill="none" stroke="#8f8f8f" stroke-width="0.8"/><polyline points="1090,0 1092.5,32.1 1110,32.1" fill="none" stroke="#8f8f8f" stroke-width="0.8"/><polyline points="1082.6,81.4 1077.7,135.6 1067.8,148" fill="none" stroke="#8f8f8f" stroke-width="0.8"/><polyline points="986.4,133.2 1025.9,130.7 1048.1,113.4" fill="none" stroke="#8f8f8f" stroke-width="0.8"/><polyline points="1028.4,170.2 1082.6,145.5 1110,138.1" fill="none" stroke="#8f8f8f" stroke-width="0.9"/><polyline points="1008.6,103.6 1025.9,125.8 1058,113.4" fill="none" stroke="#8f8f8f" stroke-width="0.8"/><polyline points="959.3,0 929.7,37 910,41.9" fill="none" stroke="#8f8f8f" stroke-width="0.9"/><polyline points="929.7,37 947,108.5 910,123.3" fill="none" stroke="#8f8f8f" stroke-width="0.8"/><polyline points="988.9,0 1003.7,0" fill="none" stroke="#8f8f8f" stroke-width="0.8"/><polyline points="1008.6,9.9 1028.4,8.6" fill="none" stroke="#8f8f8f" stroke-width="0.7"/><polyline points="986.4,133.2 988.9,200" fill="none" stroke="#8f8f8f" stroke-width="0.7"/><polyline points="1008.6,170.2 1023.4,162.8 1028.4,170.2 1025.9,200" fill="none" stroke="#8f8f8f" stroke-width="0.7"/><rect x="914.9" y="86.3" width="8.6" height="29.6" fill="#dedede" stroke="#b0b0b0" stroke-width="0.6" transform="rotate(-15 919.2 101.1)"/><rect x="924.8" y="43.2" width="5.4" height="13.6" fill="#dedede" stroke="#b0b0b0" stroke-width="0.6" transform="rotate(-15 927.5 49.9)"/><rect x="929.7" y="59.2" width="5.4" height="19.7" fill="#dedede" stroke="#b0b0b0" stroke-width="0.6" transform="rotate(-15 932.4 69.1)"/><rect x="934.7" y="81.4" width="4.9" height="14.8" fill="#dedede" stroke="#b0b0b0" stroke-width="0.6" transform="rotate(-15 937.1 88.8)"/><rect x="938.4" y="98.6" width="4.9" height="12.3" fill="#dedede" stroke="#b0b0b0" stroke-width="0.6" transform="rotate(-15 940.8 104.8)"/><rect x="988.9" y="37" width="14.8" height="11.1" fill="#dedede" stroke="#b0b0b0" stroke-width="0.6"/><rect x="988.9" y="76.4" width="9.9" height="18.5" fill="#dedede" stroke="#b0b0b0" stroke-width="0.6"/><rect x="996.3" y="107.3" width="9.9" height="18.5" fill="#dedede" stroke="#b0b0b0" stroke-width="0.6"/><rect x="1043.2" y="13.6" width="9.9" height="13.6" fill="#dedede" stroke="#b0b0b0" stroke-width="0.6"/><rect x="1011.1" y="17.3" width="12.3" height="6.2" fill="#dedede" stroke="#b0b0b0" stroke-width="0.6"/><rect x="1016" y="2.5" width="7.4" height="7.4" fill="#dedede" stroke="#b0b0b0" stroke-width="0.6"/><rect x="1038.2" y="39.5" width="7.4" height="14.8" fill="#dedede" stroke="#b0b0b0" stroke-width="0.6" transform="rotate(-10 1041.9 46.9)"/><rect x="1075.2" y="34.5" width="7.4" height="17.3" fill="#dedede" stroke="#b0b0b0" stroke-width="0.6"/><rect x="1062.9" y="41.9" width="7.4" height="9.9" fill="#dedede" stroke="#b0b0b0" stroke-width="0.6"/><rect x="1067.8" y="4.9" width="19.7" height="6.2" fill="#dedede" stroke="#b0b0b0" stroke-width="0.6"/><rect x="1023.4" y="101.1" width="9.9" height="9.9" fill="#dedede" stroke="#b0b0b0" stroke-width="0.6" transform="rotate(10 1028.4 106)"/><rect x="1038.2" y="133.2" width="12.3" height="9.9" fill="#dedede" stroke="#b0b0b0" stroke-width="0.6" transform="rotate(20 1044.4 138.1)"/><rect x="1053" y="160.3" width="14.8" height="9.9" fill="#dedede" stroke="#b0b0b0" stroke-width="0.6" transform="rotate(25 1060.4 165.2)"/><rect x="1058" y="172.6" width="14.8" height="7.4" fill="#dedede" stroke="#b0b0b0" stroke-width="0.6" transform="rotate(25 1065.4 176.3)"/><rect x="1005.7" y="166.1" width="2.3" height="6.3" fill="#dedede" stroke="#b0b0b0" stroke-width="0.6" transform="rotate(1.6 1006.9 169.3)"/><rect x="1014.2" y="52.3" width="3.7" height="7.8" fill="#dedede" stroke="#b0b0b0" stroke-width="0.6" transform="rotate(-0.2 1016.1 56.2)"/><rect x="1006.6" y="190.3" width="2.5" height="3.5" fill="#dedede" stroke="#b0b0b0" stroke-width="0.6" transform="rotate(-3.2 1007.9 192.1)"/><rect x="1015.4" y="137.9" width="2.7" height="5.1" fill="#dedede" stroke="#b0b0b0" stroke-width="0.6" transform="rotate(1.1 1016.8 140.4)"/><rect x="1018.4" y="239.9" width="3.6" height="5.3" fill="#dedede" stroke="#b0b0b0" stroke-width="0.6" transform="rotate(-4.1 1020.2 242.5)"/><rect x="993" y="119.4" width="3.9" height="6.8" fill="#dedede" stroke="#b0b0b0" stroke-width="0.6" transform="rotate(1.3 994.9 122.8)"/><rect x="1009.7" y="232.8" width="3.8" height="5.2" fill="#dedede" stroke="#b0b0b0" stroke-width="0.6" transform="rotate(3 1011.6 235.4)"/><rect x="1012.8" y="54.2" width="3.9" height="5.6" fill="#dedede" stroke="#b0b0b0" stroke-width="0.6" transform="rotate(2.2 1014.8 57)"/><rect x="1015.5" y="56.2" width="3.7" height="6.4" fill="#dedede" stroke="#b0b0b0" stroke-width="0.6" transform="rotate(4 1017.3 59.4)"/><rect x="1008.4" y="207.3" width="4" height="7.9" fill="#dedede" stroke="#b0b0b0" stroke-width="0.6" transform="rotate(-1.8 1010.4 211.2)"/><rect x="1001.3" y="21.7" width="3.8" height="7.4" fill="#dedede" stroke="#b0b0b0" stroke-width="0.6" transform="rotate(-0.6 1003.2 25.4)"/><rect x="1006.9" y="7.5" width="3.2" height="7" fill="#dedede" stroke="#b0b0b0" stroke-width="0.6" transform="rotate(3.1 1008.5 11)"/><rect x="994.9" y="88.1" width="2.3" height="7.1" fill="#dedede" stroke="#b0b0b0" stroke-width="0.6" transform="rotate(2.9 996 91.6)"/><rect x="1008.4" y="192.3" width="2.5" height="4.2" fill="#dedede" stroke="#b0b0b0" stroke-width="0.6" transform="rotate(3.4 1009.7 194.4)"/><rect x="1007" y="248.9" width="3.4" height="7.8" fill="#dedede" stroke="#b0b0b0" stroke-width="0.6" transform="rotate(-4.1 1008.7 252.8)"/><rect x="999.4" y="192.5" width="2.6" height="5.9" fill="#dedede" stroke="#b0b0b0" stroke-width="0.6" transform="rotate(1.4 1000.7 195.4)"/><rect x="1009.8" y="81.9" width="3.1" height="7.3" fill="#dedede" stroke="#b0b0b0" stroke-width="0.6" transform="rotate(-1.2 1011.3 85.5)"/><rect x="996" y="223.3" width="3.7" height="7.6" fill="#dedede" stroke="#b0b0b0" stroke-width="0.6" transform="rotate(4.7 997.8 227.1)"/><rect x="995.8" y="141.4" width="3.1" height="6.1" fill="#dedede" stroke="#b0b0b0" stroke-width="0.6" transform="rotate(0 997.4 144.5)"/><rect x="1025.5" y="137.5" width="3.3" height="3.6" fill="#dedede" stroke="#b0b0b0" stroke-width="0.6" transform="rotate(-1 1027.2 139.3)"/><rect x="1006.8" y="182.4" width="3.6" height="6" fill="#dedede" stroke="#b0b0b0" stroke-width="0.6" transform="rotate(-4.3 1008.7 185.4)"/><rect x="1025.2" y="244.4" width="3.2" height="5.4" fill="#dedede" stroke="#b0b0b0" stroke-width="0.6" transform="rotate(-2.3 1026.7 247.1)"/><rect x="1004.9" y="216.9" width="3.1" height="4.1" fill="#dedede" stroke="#b0b0b0" stroke-width="0.6" transform="rotate(4 1006.4 219)"/><rect x="995.5" y="163.8" width="3.1" height="4.9" fill="#dedede" stroke="#b0b0b0" stroke-width="0.6" transform="rotate(4.3 997 166.3)"/><rect x="988.9" y="51" width="2.4" height="7" fill="#dedede" stroke="#b0b0b0" stroke-width="0.6" transform="rotate(-2.7 990.1 54.6)"/><rect x="1001.7" y="164.3" width="3.4" height="4.9" fill="#dedede" stroke="#b0b0b0" stroke-width="0.6" transform="rotate(-4 1003.4 166.7)"/><rect x="1007.6" y="66.6" width="3.5" height="4.1" fill="#dedede" stroke="#b0b0b0" stroke-width="0.6" transform="rotate(-3 1009.4 68.7)"/><rect x="1002.6" y="109.4" width="3.2" height="5.5" fill="#dedede" stroke="#b0b0b0" stroke-width="0.6" transform="rotate(0.3 1004.2 112.1)"/><rect x="1012.9" y="169.6" width="2.5" height="4.4" fill="#dedede" stroke="#b0b0b0" stroke-width="0.6" transform="rotate(0.3 1014.2 171.8)"/><rect x="1020.8" y="61.4" width="3.7" height="6.3" fill="#dedede" stroke="#b0b0b0" stroke-width="0.6" transform="rotate(2.4 1022.7 64.5)"/><rect x="1000.1" y="82.7" width="3.7" height="7.6" fill="#dedede" stroke="#b0b0b0" stroke-width="0.6" transform="rotate(4.2 1001.9 86.4)"/><rect x="1023" y="35.1" width="2.6" height="8" fill="#dedede" stroke="#b0b0b0" stroke-width="0.6" transform="rotate(-2.6 1024.3 39.1)"/><rect x="991.7" y="220.8" width="3.5" height="4.7" fill="#dedede" stroke="#b0b0b0" stroke-width="0.6" transform="rotate(-0.8 993.5 223.1)"/><rect x="1003.5" y="182.2" width="3.6" height="4.1" fill="#dedede" stroke="#b0b0b0" stroke-width="0.6" transform="rotate(-4.8 1005.3 184.3)"/><rect x="1023.9" y="255.1" width="2.6" height="6.6" fill="#dedede" stroke="#b0b0b0" stroke-width="0.6" transform="rotate(-3.8 1025.2 258.4)"/><rect x="1007.6" y="180.4" width="3.1" height="6.9" fill="#dedede" stroke="#b0b0b0" stroke-width="0.6" transform="rotate(-3.1 1009.1 183.9)"/><rect x="989.5" y="146.8" width="2.3" height="4" fill="#dedede" stroke="#b0b0b0" stroke-width="0.6" transform="rotate(0.1 990.6 148.7)"/><rect x="995.2" y="54.2" width="3.2" height="4.2" fill="#dedede" stroke="#b0b0b0" stroke-width="0.6" transform="rotate(3.4 996.8 56.3)"/><rect x="991.6" y="16.2" width="4" height="7.7" fill="#dedede" stroke="#b0b0b0" stroke-width="0.6" transform="rotate(4.5 993.6 20.1)"/><rect x="1000.7" y="122.8" width="3" height="6.9" fill="#dedede" stroke="#b0b0b0" stroke-width="0.6" transform="rotate(0.2 1002.3 126.3)"/><rect x="988.5" y="184.9" width="3" height="6.2" fill="#dedede" stroke="#b0b0b0" stroke-width="0.6" transform="rotate(3.4 990 188)"/><rect x="1017.2" y="107.2" width="2.5" height="5.5" fill="#dedede" stroke="#b0b0b0" stroke-width="0.6" transform="rotate(-3 1018.4 110)"/><rect x="988.6" y="236" width="2.5" height="5.8" fill="#dedede" stroke="#b0b0b0" stroke-width="0.6" transform="rotate(3 989.9 238.9)"/><rect x="1012.3" y="106.2" width="3.5" height="7.4" fill="#dedede" stroke="#b0b0b0" stroke-width="0.6" transform="rotate(1 1014 109.9)"/><rect x="1019.3" y="67.7" width="3.1" height="7.9" fill="#dedede" stroke="#b0b0b0" stroke-width="0.6" transform="rotate(4.1 1020.9 71.6)"/><rect x="1019.3" y="106.7" width="3.5" height="7" fill="#dedede" stroke="#b0b0b0" stroke-width="0.6" transform="rotate(4 1021.1 110.2)"/><rect x="1017.3" y="201.5" width="3.8" height="6.6" fill="#dedede" stroke="#b0b0b0" stroke-width="0.6" transform="rotate(-0.9 1019.2 204.9)"/><rect x="1001.2" y="124.8" width="3.5" height="3.8" fill="#dedede" stroke="#b0b0b0" stroke-width="0.6" transform="rotate(-4.9 1002.9 126.7)"/><rect x="1012.4" y="61.2" width="2.8" height="6.4" fill="#dedede" stroke="#b0b0b0" stroke-width="0.6" transform="rotate(4.4 1013.9 64.4)"/><rect x="1013.5" y="150.9" width="3.4" height="5" fill="#dedede" stroke="#b0b0b0" stroke-width="0.6" transform="rotate(0.3 1015.2 153.4)"/><rect x="1013.1" y="183.7" width="2.9" height="8" fill="#dedede" stroke="#b0b0b0" stroke-width="0.6" transform="rotate(2.6 1014.6 187.7)"/><rect x="1011.4" y="196.8" width="4" height="3.6" fill="#dedede" stroke="#b0b0b0" stroke-width="0.6" transform="rotate(-2.4 1013.4 198.6)"/><rect x="995.6" y="100" width="2.9" height="3.7" fill="#dedede" stroke="#b0b0b0" stroke-width="0.6" transform="rotate(-4 997.1 101.9)"/><rect x="1009.6" y="133.3" width="2.7" height="7.6" fill="#dedede" stroke="#b0b0b0" stroke-width="0.6" transform="rotate(4.7 1011 137.1)"/><rect x="1012.7" y="212.1" width="3.2" height="8" fill="#dedede" stroke="#b0b0b0" stroke-width="0.6" transform="rotate(-4.2 1014.4 216.1)"/><rect x="1042.5" y="244.7" width="3.3" height="6.9" fill="#dedede" stroke="#b0b0b0" stroke-width="0.6" transform="rotate(-13.6 1044.1 248.2)"/><rect x="1067.2" y="162.4" width="3" height="4.3" fill="#dedede" stroke="#b0b0b0" stroke-width="0.6" transform="rotate(-17.7 1068.8 164.5)"/><rect x="1068.5" y="158.2" width="3.9" height="5.4" fill="#dedede" stroke="#b0b0b0" stroke-width="0.6" transform="rotate(-5.4 1070.4 160.9)"/><rect x="1071" y="74.7" width="2.7" height="6.4" fill="#dedede" stroke="#b0b0b0" stroke-width="0.6" transform="rotate(8.7 1072.4 77.9)"/><rect x="1053.5" y="11.4" width="2.7" height="3.6" fill="#dedede" stroke="#b0b0b0" stroke-width="0.6" transform="rotate(-13.7 1054.9 13.2)"/><rect x="1088.9" y="198.1" width="3.6" height="5.3" fill="#dedede" stroke="#b0b0b0" stroke-width="0.6" transform="rotate(-18 1090.6 200.8)"/><rect x="1044" y="237.5" width="4" height="7.8" fill="#dedede" stroke="#b0b0b0" stroke-width="0.6" transform="rotate(-2.8 1046 241.4)"/><rect x="1053.4" y="137.2" width="3.1" height="7.9" fill="#dedede" stroke="#b0b0b0" stroke-width="0.6" transform="rotate(17.5 1054.9 141.1)"/><rect x="1093.3" y="215.9" width="3.5" height="5.6" fill="#dedede" stroke="#b0b0b0" stroke-width="0.6" transform="rotate(4.1 1095.1 218.7)"/><rect x="1065.3" y="53.7" width="2.4" height="6.3" fill="#dedede" stroke="#b0b0b0" stroke-width="0.6" transform="rotate(-17.9 1066.5 56.9)"/><rect x="1072" y="111.3" width="3" height="4.7" fill="#dedede" stroke="#b0b0b0" stroke-width="0.6" transform="rotate(11.1 1073.5 113.7)"/><rect x="1092.2" y="192.4" width="3.2" height="8" fill="#dedede" stroke="#b0b0b0" stroke-width="0.6" transform="rotate(-10.5 1093.8 196.4)"/><rect x="1083.6" y="164" width="2.4" height="7.5" fill="#dedede" stroke="#b0b0b0" stroke-width="0.6" transform="rotate(-5.6 1084.8 167.8)"/><rect x="1071.2" y="155.9" width="2.7" height="6.6" fill="#dedede" stroke="#b0b0b0" stroke-width="0.6" transform="rotate(5.3 1072.6 159.1)"/><rect x="1053.6" y="260.3" width="3.6" height="4.4" fill="#dedede" stroke="#b0b0b0" stroke-width="0.6" transform="rotate(16.6 1055.3 262.4)"/><rect x="1043.3" y="72.2" width="3.8" height="3.7" fill="#dedede" stroke="#b0b0b0" stroke-width="0.6" transform="rotate(-3 1045.2 74)"/><rect x="1069.6" y="19.3" width="3.3" height="4" fill="#dedede" stroke="#b0b0b0" stroke-width="0.6" transform="rotate(-16.5 1071.3 21.3)"/><rect x="1074.4" y="98.5" width="3.4" height="6" fill="#dedede" stroke="#b0b0b0" stroke-width="0.6" transform="rotate(-0.9 1076.2 101.5)"/><rect x="1081.3" y="222.2" width="2.6" height="5" fill="#dedede" stroke="#b0b0b0" stroke-width="0.6" transform="rotate(-17 1082.6 224.7)"/><rect x="1074.7" y="202.1" width="2.4" height="7.1" fill="#dedede" stroke="#b0b0b0" stroke-width="0.6" transform="rotate(-11.5 1075.9 205.6)"/><rect x="1084.6" y="97.9" width="3" height="4.7" fill="#dedede" stroke="#b0b0b0" stroke-width="0.6" transform="rotate(6.1 1086.1 100.2)"/><rect x="1069.6" y="197.7" width="4" height="5" fill="#dedede" stroke="#b0b0b0" stroke-width="0.6" transform="rotate(16.8 1071.6 200.2)"/><rect x="1045.3" y="231.8" width="3" height="5.2" fill="#dedede" stroke="#b0b0b0" stroke-width="0.6" transform="rotate(-16.9 1046.8 234.4)"/><rect x="1044.2" y="56.1" width="2.7" height="7" fill="#dedede" stroke="#b0b0b0" stroke-width="0.6" transform="rotate(6.5 1045.6 59.6)"/><rect x="1059.8" y="193" width="2.7" height="4.1" fill="#dedede" stroke="#b0b0b0" stroke-width="0.6" transform="rotate(-5.3 1061.1 195.1)"/><rect x="1071.6" y="241.9" width="2.4" height="6.7" fill="#dedede" stroke="#b0b0b0" stroke-width="0.6" transform="rotate(17.6 1072.9 245.2)"/><rect x="1083.5" y="80.6" width="3.8" height="5.5" fill="#dedede" stroke="#b0b0b0" stroke-width="0.6" transform="rotate(-7.3 1085.4 83.4)"/><rect x="1089.3" y="65.1" width="2.9" height="7.7" fill="#dedede" stroke="#b0b0b0" stroke-width="0.6" transform="rotate(-5.5 1090.7 69)"/><rect x="1061.8" y="102.7" width="2.9" height="5.1" fill="#dedede" stroke="#b0b0b0" stroke-width="0.6" transform="rotate(-12.2 1063.2 105.2)"/><rect x="1069.6" y="219.9" width="3.2" height="7.1" fill="#dedede" stroke="#b0b0b0" stroke-width="0.6" transform="rotate(2.5 1071.2 223.4)"/><rect x="1088.9" y="74" width="2.5" height="6.9" fill="#dedede" stroke="#b0b0b0" stroke-width="0.6" transform="rotate(-19.1 1090.1 77.5)"/><rect x="1071.1" y="255.2" width="3.1" height="5.9" fill="#dedede" stroke="#b0b0b0" stroke-width="0.6" transform="rotate(6 1072.7 258.2)"/><rect x="1069.7" y="209.8" width="3.6" height="3.8" fill="#dedede" stroke="#b0b0b0" stroke-width="0.6" transform="rotate(-16.6 1071.5 211.7)"/><rect x="1090" y="22.3" width="2.3" height="6.8" fill="#dedede" stroke="#b0b0b0" stroke-width="0.6" transform="rotate(5.4 1091.2 25.7)"/><rect x="1076" y="64.6" width="2.5" height="6.9" fill="#dedede" stroke="#b0b0b0" stroke-width="0.6" transform="rotate(-11.2 1077.3 68)"/><rect x="1081.6" y="104.2" width="3.6" height="5.8" fill="#dedede" stroke="#b0b0b0" stroke-width="0.6" transform="rotate(-6.5 1083.4 107.1)"/><rect x="1066.7" y="141.6" width="3.9" height="6.5" fill="#dedede" stroke="#b0b0b0" stroke-width="0.6" transform="rotate(8.8 1068.7 144.8)"/><rect x="1062.4" y="216.8" width="3.5" height="7.6" fill="#dedede" stroke="#b0b0b0" stroke-width="0.6" transform="rotate(6.7 1064.1 220.6)"/><rect x="1085.2" y="233.6" width="3.7" height="7.1" fill="#dedede" stroke="#b0b0b0" stroke-width="0.6" transform="rotate(18.3 1087.1 237.2)"/><rect x="1078.8" y="211.9" width="3.4" height="5.9" fill="#dedede" stroke="#b0b0b0" stroke-width="0.6" transform="rotate(-3.1 1080.5 214.8)"/><rect x="1080.8" y="263.5" width="3" height="4.2" fill="#dedede" stroke="#b0b0b0" stroke-width="0.6" transform="rotate(-5 1082.3 265.5)"/><rect x="1063.6" y="77.6" width="2.5" height="4.4" fill="#dedede" stroke="#b0b0b0" stroke-width="0.6" transform="rotate(18.8 1064.8 79.8)"/><rect x="1043.4" y="121.9" width="3.6" height="4.3" fill="#dedede" stroke="#b0b0b0" stroke-width="0.6" transform="rotate(3.4 1045.2 124)"/><rect x="1045.9" y="49.1" width="3.8" height="3.7" fill="#dedede" stroke="#b0b0b0" stroke-width="0.6" transform="rotate(-11.3 1047.8 51)"/><rect x="1072.9" y="59" width="2.6" height="6.7" fill="#dedede" stroke="#b0b0b0" stroke-width="0.6" transform="rotate(-12.6 1074.2 62.3)"/><rect x="1081.9" y="82.8" width="2.7" height="4.3" fill="#dedede" stroke="#b0b0b0" stroke-width="0.6" transform="rotate(1.9 1083.2 85)"/><rect x="1054.2" y="234.6" width="3.7" height="5.7" fill="#dedede" stroke="#b0b0b0" stroke-width="0.6" transform="rotate(16.6 1056 237.4)"/><rect x="1092.8" y="127.4" width="2.8" height="6" fill="#dedede" stroke="#b0b0b0" stroke-width="0.6" transform="rotate(-11.2 1094.2 130.4)"/><rect x="1084.6" y="101" width="2.3" height="7.8" fill="#dedede" stroke="#b0b0b0" stroke-width="0.6" transform="rotate(1.1 1085.8 104.8)"/><rect x="1066.2" y="99" width="2.6" height="3.5" fill="#dedede" stroke="#b0b0b0" stroke-width="0.6" transform="rotate(11.9 1067.5 100.8)"/><rect x="1048.6" y="41.4" width="3.5" height="6.2" fill="#dedede" stroke="#b0b0b0" stroke-width="0.6" transform="rotate(-7.1 1050.3 44.5)"/><rect x="1068.6" y="167.3" width="2.7" height="7.4" fill="#dedede" stroke="#b0b0b0" stroke-width="0.6" transform="rotate(19.7 1069.9 171)"/><rect x="1048.3" y="203.5" width="2.7" height="5.9" fill="#dedede" stroke="#b0b0b0" stroke-width="0.6" transform="rotate(-19.9 1049.7 206.4)"/><rect x="1084.7" y="21.7" width="3.7" height="7.3" fill="#dedede" stroke="#b0b0b0" stroke-width="0.6" transform="rotate(-9.2 1086.5 25.3)"/><rect x="1066.2" y="124.7" width="3.5" height="3.9" fill="#dedede" stroke="#b0b0b0" stroke-width="0.6" transform="rotate(18.2 1067.9 126.7)"/><rect x="1056.6" y="207.3" width="3.3" height="7.4" fill="#dedede" stroke="#b0b0b0" stroke-width="0.6" transform="rotate(-3.3 1058.2 211)"/><rect x="1084.7" y="55.5" width="3.9" height="3.9" fill="#dedede" stroke="#b0b0b0" stroke-width="0.6" transform="rotate(1.7 1086.7 57.4)"/><rect x="1085.6" y="82.8" width="3.1" height="4.2" fill="#dedede" stroke="#b0b0b0" stroke-width="0.6" transform="rotate(-7.6 1087.2 84.9)"/><rect x="1045.8" y="103.8" width="2.8" height="6.6" fill="#dedede" stroke="#b0b0b0" stroke-width="0.6" transform="rotate(-1.5 1047.3 107.1)"/><polyline points="747.1,200 766.9,222.2 769.3,239.5 791.5,261.7" fill="none" stroke="#8f8f8f" stroke-width="0.8"/><polyline points="848.2,237 880.3,249.3 920,269.1" fill="none" stroke="#8f8f8f" stroke-width="0.8"/><polyline points="853.2,328.2 892.6,293.7 920,288.8" fill="none" stroke="#8f8f8f" stroke-width="0.8"/><polyline points="853.2,328.2 858.1,333.2 855.6,328.2" fill="none" stroke="#8f8f8f" stroke-width="0.7"/><polyline points="769.3,340.6 774.3,348 764.4,367.7 761.9,377.6 781.7,400" fill="none" stroke="#8f8f8f" stroke-width="0.8"/><polyline points="868,274 892.6,286.3 907.4,274" fill="none" stroke="#8f8f8f" stroke-width="0.7"/><polyline points="872.9,360.3 897.6,352.9 920,338.1" fill="none" stroke="#8f8f8f" stroke-width="0.8"/><polyline points="892.6,345.5 912.4,400" fill="none" stroke="#8f8f8f" stroke-width="0.8"/><rect x="893.2" y="266.6" width="3.9" height="7.2" fill="#dedede" stroke="#b0b0b0" stroke-width="0.6" transform="rotate(-7.4 895.2 270.2)"/><rect x="887.5" y="324.7" width="3.5" height="4.6" fill="#dedede" stroke="#b0b0b0" stroke-width="0.6" transform="rotate(-29.4 889.3 327)"/><rect x="886.3" y="303.7" width="2.7" height="5.2" fill="#dedede" stroke="#b0b0b0" stroke-width="0.6" transform="rotate(-9.8 887.7 306.3)"/><rect x="867.2" y="290.7" width="2.9" height="6.5" fill="#dedede" stroke="#b0b0b0" stroke-width="0.6" transform="rotate(13.9 868.7 293.9)"/><rect x="887.8" y="357.1" width="2.8" height="7.8" fill="#dedede" stroke="#b0b0b0" stroke-width="0.6" transform="rotate(-10.1 889.2 361)"/><rect x="859.3" y="277.4" width="3.7" height="3.9" fill="#dedede" stroke="#b0b0b0" stroke-width="0.6" transform="rotate(10.7 861.2 279.3)"/><rect x="876.8" y="374.4" width="3.5" height="4.3" fill="#dedede" stroke="#b0b0b0" stroke-width="0.6" transform="rotate(5.6 878.5 376.5)"/><rect x="860.6" y="281.2" width="2.4" height="4.5" fill="#dedede" stroke="#b0b0b0" stroke-width="0.6" transform="rotate(-5.6 861.8 283.5)"/><rect x="904.7" y="314.4" width="3.4" height="7" fill="#dedede" stroke="#b0b0b0" stroke-width="0.6" transform="rotate(-10.1 906.4 317.9)"/><rect x="876.9" y="357" width="2.9" height="3.6" fill="#dedede" stroke="#b0b0b0" stroke-width="0.6" transform="rotate(28.9 878.3 358.8)"/><rect x="890.4" y="267.4" width="3.6" height="6.5" fill="#dedede" stroke="#b0b0b0" stroke-width="0.6" transform="rotate(-10.1 892.2 270.6)"/><rect x="857.1" y="313.6" width="2.8" height="6.4" fill="#dedede" stroke="#b0b0b0" stroke-width="0.6" transform="rotate(0.6 858.5 316.8)"/><rect x="890.6" y="285.2" width="3.6" height="7.2" fill="#dedede" stroke="#b0b0b0" stroke-width="0.6" transform="rotate(16 892.4 288.8)"/><rect x="873.3" y="329.6" width="3.8" height="6" fill="#dedede" stroke="#b0b0b0" stroke-width="0.6" transform="rotate(-21.5 875.2 332.6)"/><rect x="884.3" y="355.9" width="3.5" height="7.9" fill="#dedede" stroke="#b0b0b0" stroke-width="0.6" transform="rotate(20.1 886.1 359.9)"/><rect x="892.3" y="290.2" width="2.6" height="7.8" fill="#dedede" stroke="#b0b0b0" stroke-width="0.6" transform="rotate(-25 893.6 294.1)"/><rect x="897" y="307.4" width="2.6" height="6.1" fill="#dedede" stroke="#b0b0b0" stroke-width="0.6" transform="rotate(25.7 898.3 310.5)"/><rect x="858.3" y="391" width="2.9" height="5.6" fill="#dedede" stroke="#b0b0b0" stroke-width="0.6" transform="rotate(-21.9 859.8 393.8)"/><rect x="916.8" y="369.2" width="2.7" height="7.6" fill="#dedede" stroke="#b0b0b0" stroke-width="0.6" transform="rotate(6.1 918.1 373)"/><rect x="869.5" y="379.6" width="2.4" height="7.2" fill="#dedede" stroke="#b0b0b0" stroke-width="0.6" transform="rotate(-15.5 870.7 383.2)"/><rect x="862.2" y="394.6" width="2.3" height="3.6" fill="#dedede" stroke="#b0b0b0" stroke-width="0.6" transform="rotate(26.4 863.4 396.5)"/><rect x="894.7" y="361" width="3.4" height="4.9" fill="#dedede" stroke="#b0b0b0" stroke-width="0.6" transform="rotate(-7.1 896.4 363.4)"/><rect x="851.1" y="290.5" width="3.3" height="7.1" fill="#dedede" stroke="#b0b0b0" stroke-width="0.6" transform="rotate(-1.9 852.7 294.1)"/><rect x="888.5" y="287.5" width="2.5" height="5.2" fill="#dedede" stroke="#b0b0b0" stroke-width="0.6" transform="rotate(1.2 889.7 290.2)"/><rect x="859.8" y="388.3" width="2.3" height="6.5" fill="#dedede" stroke="#b0b0b0" stroke-width="0.6" transform="rotate(6 860.9 391.5)"/><rect x="891.8" y="354.4" width="3" height="5.4" fill="#dedede" stroke="#b0b0b0" stroke-width="0.6" transform="rotate(15.5 893.3 357)"/><rect x="916.1" y="373.4" width="3.6" height="5.7" fill="#dedede" stroke="#b0b0b0" stroke-width="0.6" transform="rotate(21.3 917.9 376.2)"/><rect x="888" y="382.3" width="2.9" height="5.5" fill="#dedede" stroke="#b0b0b0" stroke-width="0.6" transform="rotate(1.6 889.4 385)"/><rect x="910.5" y="306.5" width="3.1" height="5.4" fill="#dedede" stroke="#b0b0b0" stroke-width="0.6" transform="rotate(-26.7 912 309.3)"/><rect x="889.4" y="274.1" width="3.6" height="4.9" fill="#dedede" stroke="#b0b0b0" stroke-width="0.6" transform="rotate(-22.5 891.2 276.5)"/><rect x="876.6" y="271.7" width="3" height="5.8" fill="#dedede" stroke="#b0b0b0" stroke-width="0.6" transform="rotate(11.7 878.1 274.6)"/><rect x="870.5" y="316.6" width="3.1" height="4.6" fill="#dedede" stroke="#b0b0b0" stroke-width="0.6" transform="rotate(-15.8 872.1 318.9)"/><rect x="915.4" y="349.8" width="2.3" height="7.6" fill="#dedede" stroke="#b0b0b0" stroke-width="0.6" transform="rotate(22 916.6 353.6)"/><rect x="864.9" y="360.5" width="3" height="7.1" fill="#dedede" stroke="#b0b0b0" stroke-width="0.6" transform="rotate(4 866.3 364)"/><rect x="902.4" y="281.2" width="3.8" height="3.9" fill="#dedede" stroke="#b0b0b0" stroke-width="0.6" transform="rotate(2.3 904.3 283.2)"/><rect x="866.1" y="304.4" width="3.9" height="3.5" fill="#dedede" stroke="#b0b0b0" stroke-width="0.6" transform="rotate(-10.5 868.1 306.1)"/><rect x="905.2" y="315.6" width="2.3" height="7.5" fill="#dedede" stroke="#b0b0b0" stroke-width="0.6" transform="rotate(-8.6 906.4 319.4)"/><rect x="852.1" y="383" width="3.3" height="3.7" fill="#dedede" stroke="#b0b0b0" stroke-width="0.6" transform="rotate(-11.5 853.7 384.8)"/><rect x="915.4" y="325.2" width="3.1" height="7.7" fill="#dedede" stroke="#b0b0b0" stroke-width="0.6" transform="rotate(-17.6 916.9 329)"/><rect x="910.3" y="289.9" width="2.7" height="7.7" fill="#dedede" stroke="#b0b0b0" stroke-width="0.6" transform="rotate(20.3 911.7 293.7)"/><rect x="861.5" y="378.8" width="2.8" height="5.6" fill="#dedede" stroke="#b0b0b0" stroke-width="0.6" transform="rotate(29.7 863 381.6)"/><rect x="862.9" y="378.2" width="2.6" height="6.3" fill="#dedede" stroke="#b0b0b0" stroke-width="0.6" transform="rotate(-27 864.2 381.4)"/><rect x="871.2" y="380.4" width="2.4" height="6.8" fill="#dedede" stroke="#b0b0b0" stroke-width="0.6" transform="rotate(22.2 872.4 383.8)"/><rect x="896.3" y="387.8" width="3.5" height="4.1" fill="#dedede" stroke="#b0b0b0" stroke-width="0.6" transform="rotate(-3.3 898 389.8)"/><rect x="870.8" y="357.7" width="2.3" height="4.5" fill="#dedede" stroke="#b0b0b0" stroke-width="0.6" transform="rotate(-18.2 872 360)"/><rect x="894.8" y="368.1" width="2.5" height="4.6" fill="#dedede" stroke="#b0b0b0" stroke-width="0.6" transform="rotate(-7.6 896.1 370.4)"/><rect x="889.3" y="294.2" width="3.4" height="7.5" fill="#dedede" stroke="#b0b0b0" stroke-width="0.6" transform="rotate(-11.9 891 297.9)"/><rect x="890.1" y="302.4" width="3.2" height="3.7" fill="#dedede" stroke="#b0b0b0" stroke-width="0.6" transform="rotate(-14.9 891.7 304.2)"/><rect x="868.9" y="364.1" width="3.6" height="3.9" fill="#dedede" stroke="#b0b0b0" stroke-width="0.6" transform="rotate(-15.2 870.7 366)"/><rect x="862.5" y="380.7" width="2.7" height="6" fill="#dedede" stroke="#b0b0b0" stroke-width="0.6" transform="rotate(29.3 863.9 383.7)"/><rect x="900.8" y="314.8" width="2.3" height="5.6" fill="#dedede" stroke="#b0b0b0" stroke-width="0.6" transform="rotate(25.8 902 317.6)"/><rect x="887.2" y="349.3" width="3.1" height="4.3" fill="#dedede" stroke="#b0b0b0" stroke-width="0.6" transform="rotate(-8.4 888.7 351.4)"/><rect x="820.1" y="200.5" width="9.4" height="3.9" fill="#dedede" stroke="#b0b0b0" stroke-width="0.6" transform="rotate(35 824.8 202.5)"/><rect x="830" y="207.8" width="16.8" height="4.2" fill="#dedede" stroke="#b0b0b0" stroke-width="0.6" transform="rotate(35 838.4 209.9)"/><rect x="839.6" y="220.6" width="12.3" height="4.2" fill="#dedede" stroke="#b0b0b0" stroke-width="0.6" transform="rotate(60 845.8 222.7)"/><rect x="848.9" y="233.7" width="30.8" height="4.2" fill="#dedede" stroke="#b0b0b0" stroke-width="0.6" transform="rotate(37 864.3 235.8)"/><rect x="875.4" y="248.5" width="12.3" height="4.2" fill="#dedede" stroke="#b0b0b0" stroke-width="0.6" transform="rotate(62 881.5 250.6)"/><polyline points="887.7,200 906,250.2 933.6,290 959.3,306" fill="none" stroke="#8f8f8f" stroke-width="1.1"/><polyline points="866.7,150 889.2,217.4" fill="none" stroke="#9c9c9c" stroke-width="0.9" stroke-dasharray="4 2"/><polyline points="910,256.7 959.3,306 1013.6,372.6 1033.3,400" fill="none" stroke="#8f8f8f" stroke-width="1.1"/><polyline points="910,262.9 956.9,313.4 1025.9,400" fill="none" stroke="#9c9c9c" stroke-width="0.9" stroke-dasharray="4 2"/><polyline points="910,293.7 959.3,249.3 1028.4,244.4 1067.8,227.1 1104.1,212.3" fill="none" stroke="#8f8f8f" stroke-width="0.9"/><polyline points="922.3,345.5 964.3,306 991.4,276.4 1001.2,269.1 1003.7,249.3" fill="none" stroke="#8f8f8f" stroke-width="0.8"/><polyline points="919.9,200 939.6,246.9 969.2,276.4" fill="none" stroke="#8f8f8f" stroke-width="0.8"/><polyline points="1028.4,200 1040.7,232.1 1058,271.5 1104.1,377.6" fill="none" stroke="#8f8f8f" stroke-width="0.8"/><polyline points="1055.5,200 1077.7,237 1104.1,281.4" fill="none" stroke="#8f8f8f" stroke-width="0.8"/><polyline points="1043.2,286.3 1104.1,251.8" fill="none" stroke="#8f8f8f" stroke-width="0.8"/><polyline points="1003.7,269.1 1035.8,298.6 1067.8,370.2 1104.1,372.6" fill="none" stroke="#8f8f8f" stroke-width="0.8"/><polyline points="979.1,357.8 988.9,343 1021,330.7" fill="none" stroke="#8f8f8f" stroke-width="0.8"/><polyline points="1013.6,372.6 1043.2,352.9 1070.3,338.1" fill="none" stroke="#8f8f8f" stroke-width="0.8"/><polyline points="1055.5,306 1082.6,281.4 1104.1,276.4" fill="none" stroke="#8f8f8f" stroke-width="0.8"/><polyline points="971.7,278.9 1013.6,303.6 1001.2,318.4 971.7,303.6 971.7,278.9" fill="none" stroke="#8f8f8f" stroke-width="0.7"/><polyline points="1058,306 1082.6,338.1 1077.7,328.2 1062.9,303.6" fill="none" stroke="#8f8f8f" stroke-width="0.7"/><polyline points="910,338.1 924.8,348" fill="none" stroke="#8f8f8f" stroke-width="0.7"/><polyline points="1033.3,244.4 1048.1,283.8" fill="none" stroke="#8f8f8f" stroke-width="0.7"/><rect x="924.8" y="209.9" width="9.9" height="29.6" fill="#dedede" stroke="#b0b0b0" stroke-width="0.6" transform="rotate(-20 929.7 224.7)"/><rect x="932.2" y="214.8" width="27.1" height="8.6" fill="#dedede" stroke="#b0b0b0" stroke-width="0.6" transform="rotate(-20 945.8 219.1)"/><rect x="939.6" y="224.7" width="22.2" height="7.4" fill="#dedede" stroke="#b0b0b0" stroke-width="0.6" transform="rotate(-20 950.7 228.4)"/><rect x="919.9" y="249.3" width="12.3" height="7.4" fill="#dedede" stroke="#b0b0b0" stroke-width="0.6" transform="rotate(-30 926 253)"/><rect x="986.4" y="283.8" width="7.4" height="9.9" fill="#dedede" stroke="#b0b0b0" stroke-width="0.6"/><rect x="988.9" y="308.5" width="9.9" height="6.2" fill="#dedede" stroke="#b0b0b0" stroke-width="0.6" transform="rotate(-20 993.8 311.6)"/><rect x="1007.4" y="300" width="3.4" height="7" fill="#dedede" stroke="#b0b0b0" stroke-width="0.6" transform="rotate(-33.1 1009.1 303.6)"/><rect x="1087.6" y="237.9" width="3.4" height="5.8" fill="#dedede" stroke="#b0b0b0" stroke-width="0.6" transform="rotate(-34.4 1089.3 240.8)"/><rect x="955.7" y="288.1" width="2.5" height="6.2" fill="#dedede" stroke="#b0b0b0" stroke-width="0.6" transform="rotate(-34.5 956.9 291.3)"/><rect x="955.5" y="296.9" width="3.6" height="7.1" fill="#dedede" stroke="#b0b0b0" stroke-width="0.6" transform="rotate(-45.6 957.3 300.5)"/><rect x="918.5" y="318" width="3.2" height="5.7" fill="#dedede" stroke="#b0b0b0" stroke-width="0.6" transform="rotate(-35.7 920.2 320.8)"/><rect x="945.3" y="233.5" width="3.2" height="7.4" fill="#dedede" stroke="#b0b0b0" stroke-width="0.6" transform="rotate(-49.6 946.9 237.2)"/><rect x="993.7" y="254.8" width="3.1" height="5.5" fill="#dedede" stroke="#b0b0b0" stroke-width="0.6" transform="rotate(-34 995.2 257.6)"/><rect x="1017.6" y="306.8" width="2.3" height="7.6" fill="#dedede" stroke="#b0b0b0" stroke-width="0.6" transform="rotate(-34.2 1018.8 310.6)"/><rect x="969.7" y="213.1" width="2.6" height="4.2" fill="#dedede" stroke="#b0b0b0" stroke-width="0.6" transform="rotate(-43.7 971 215.2)"/><rect x="960.9" y="316.3" width="3.3" height="5.9" fill="#dedede" stroke="#b0b0b0" stroke-width="0.6" transform="rotate(-48.2 962.5 319.3)"/><rect x="959" y="235.5" width="3.7" height="4.3" fill="#dedede" stroke="#b0b0b0" stroke-width="0.6" transform="rotate(-36.2 960.8 237.6)"/><rect x="923.3" y="282.2" width="3.7" height="7" fill="#dedede" stroke="#b0b0b0" stroke-width="0.6" transform="rotate(-42.7 925.1 285.7)"/><rect x="919.8" y="296.6" width="2.6" height="7.9" fill="#dedede" stroke="#b0b0b0" stroke-width="0.6" transform="rotate(-34.8 921.1 300.5)"/><rect x="995.8" y="347.2" width="4" height="4.2" fill="#dedede" stroke="#b0b0b0" stroke-width="0.6" transform="rotate(-49.2 997.8 349.2)"/><rect x="938.2" y="278.7" width="2.6" height="7.5" fill="#dedede" stroke="#b0b0b0" stroke-width="0.6" transform="rotate(-44 939.6 282.4)"/><rect x="954.4" y="252.7" width="3.6" height="6.8" fill="#dedede" stroke="#b0b0b0" stroke-width="0.6" transform="rotate(-39 956.2 256.1)"/><rect x="1084.8" y="273.9" width="2.6" height="5.6" fill="#dedede" stroke="#b0b0b0" stroke-width="0.6" transform="rotate(-43.3 1086.2 276.7)"/><rect x="919.3" y="281.1" width="4" height="6.2" fill="#dedede" stroke="#b0b0b0" stroke-width="0.6" transform="rotate(-37 921.3 284.2)"/><rect x="1041" y="369.2" width="2.3" height="5" fill="#dedede" stroke="#b0b0b0" stroke-width="0.6" transform="rotate(-38.2 1042.2 371.7)"/><rect x="984.4" y="364.7" width="3.8" height="5.6" fill="#dedede" stroke="#b0b0b0" stroke-width="0.6" transform="rotate(-42.4 986.3 367.5)"/><rect x="976.1" y="240" width="3.6" height="4.5" fill="#dedede" stroke="#b0b0b0" stroke-width="0.6" transform="rotate(-39 977.9 242.2)"/><rect x="951.8" y="294.1" width="2.5" height="4.4" fill="#dedede" stroke="#b0b0b0" stroke-width="0.6" transform="rotate(-43.8 953 296.3)"/><rect x="1037.6" y="366.4" width="3" height="8" fill="#dedede" stroke="#b0b0b0" stroke-width="0.6" transform="rotate(-45.9 1039.2 370.3)"/><rect x="1040" y="274.4" width="2.9" height="3.8" fill="#dedede" stroke="#b0b0b0" stroke-width="0.6" transform="rotate(-44.5 1041.4 276.3)"/><rect x="960.7" y="279.9" width="2.2" height="4.3" fill="#dedede" stroke="#b0b0b0" stroke-width="0.6" transform="rotate(-31.5 961.9 282.1)"/><rect x="978.6" y="234.2" width="3.5" height="4.7" fill="#dedede" stroke="#b0b0b0" stroke-width="0.6" transform="rotate(-31.3 980.4 236.6)"/><rect x="1045.9" y="375.6" width="2.8" height="6.9" fill="#dedede" stroke="#b0b0b0" stroke-width="0.6" transform="rotate(-49.6 1047.4 379.1)"/><rect x="1008.2" y="215.3" width="2.8" height="7" fill="#dedede" stroke="#b0b0b0" stroke-width="0.6" transform="rotate(-42.1 1009.6 218.8)"/><rect x="940" y="318.9" width="2.6" height="3.7" fill="#dedede" stroke="#b0b0b0" stroke-width="0.6" transform="rotate(-49.4 941.3 320.8)"/><rect x="1012.8" y="230.8" width="2.8" height="5.4" fill="#dedede" stroke="#b0b0b0" stroke-width="0.6" transform="rotate(-35.9 1014.1 233.5)"/><rect x="1035.5" y="232.7" width="2.7" height="6.8" fill="#dedede" stroke="#b0b0b0" stroke-width="0.6" transform="rotate(-45.9 1036.8 236.1)"/><rect x="987.1" y="277.8" width="2.7" height="6.7" fill="#dedede" stroke="#b0b0b0" stroke-width="0.6" transform="rotate(-32.7 988.5 281.1)"/><rect x="976" y="246" width="2.6" height="4.8" fill="#dedede" stroke="#b0b0b0" stroke-width="0.6" transform="rotate(-49.2 977.3 248.4)"/><rect x="1017.1" y="357.6" width="2.2" height="6.3" fill="#dedede" stroke="#b0b0b0" stroke-width="0.6" transform="rotate(-30.5 1018.2 360.8)"/><rect x="1082.3" y="245.8" width="2.7" height="6.5" fill="#dedede" stroke="#b0b0b0" stroke-width="0.6" transform="rotate(-36.2 1083.6 249)"/><rect x="1072.3" y="248.9" width="3.4" height="7.8" fill="#dedede" stroke="#b0b0b0" stroke-width="0.6" transform="rotate(-37.3 1074 252.8)"/><rect x="984.9" y="216.4" width="2.4" height="5.4" fill="#dedede" stroke="#b0b0b0" stroke-width="0.6" transform="rotate(-42.3 986 219.1)"/><rect x="963.8" y="235" width="2.8" height="5.7" fill="#dedede" stroke="#b0b0b0" stroke-width="0.6" transform="rotate(-42 965.2 237.9)"/><rect x="1035" y="250.7" width="3.1" height="4.3" fill="#dedede" stroke="#b0b0b0" stroke-width="0.6" transform="rotate(-48.1 1036.6 252.9)"/><rect x="939.9" y="315.5" width="2.8" height="5.4" fill="#dedede" stroke="#b0b0b0" stroke-width="0.6" transform="rotate(-36 941.3 318.2)"/><rect x="916.3" y="278.7" width="3.2" height="6.7" fill="#dedede" stroke="#b0b0b0" stroke-width="0.6" transform="rotate(-42.7 917.9 282)"/><rect x="922.1" y="299" width="2.3" height="5.3" fill="#dedede" stroke="#b0b0b0" stroke-width="0.6" transform="rotate(-38.3 923.3 301.7)"/><rect x="958.9" y="209.5" width="3" height="5" fill="#dedede" stroke="#b0b0b0" stroke-width="0.6" transform="rotate(-43.1 960.4 212)"/><rect x="960.2" y="331.2" width="3.8" height="6" fill="#dedede" stroke="#b0b0b0" stroke-width="0.6" transform="rotate(-46.3 962.1 334.3)"/><rect x="1088.6" y="273.4" width="3" height="6.3" fill="#dedede" stroke="#b0b0b0" stroke-width="0.6" transform="rotate(-38.5 1090.1 276.6)"/><rect x="963.1" y="362.3" width="2.9" height="5.4" fill="#dedede" stroke="#b0b0b0" stroke-width="0.6" transform="rotate(-32.4 964.6 365)"/><rect x="919.1" y="230.5" width="2.9" height="7.6" fill="#dedede" stroke="#b0b0b0" stroke-width="0.6" transform="rotate(-39.9 920.5 234.3)"/><rect x="1093" y="233.5" width="2.8" height="5.1" fill="#dedede" stroke="#b0b0b0" stroke-width="0.6" transform="rotate(-46.2 1094.4 236)"/><rect x="955.5" y="205.2" width="2.6" height="6.6" fill="#dedede" stroke="#b0b0b0" stroke-width="0.6" transform="rotate(-39.1 956.8 208.5)"/><rect x="1015.6" y="361.8" width="3.2" height="6.3" fill="#dedede" stroke="#b0b0b0" stroke-width="0.6" transform="rotate(-30.6 1017.2 365)"/><rect x="1076.1" y="264.5" width="2.8" height="5.1" fill="#dedede" stroke="#b0b0b0" stroke-width="0.6" transform="rotate(-35.7 1077.5 267)"/><rect x="1089.9" y="360.3" width="3.5" height="6.6" fill="#dedede" stroke="#b0b0b0" stroke-width="0.6" transform="rotate(-46.8 1091.6 363.6)"/><rect x="1016.1" y="274.9" width="3.3" height="5.7" fill="#dedede" stroke="#b0b0b0" stroke-width="0.6" transform="rotate(-44.3 1017.8 277.8)"/><rect x="955.7" y="252.1" width="3.5" height="5.9" fill="#dedede" stroke="#b0b0b0" stroke-width="0.6" transform="rotate(-43.5 957.5 255.1)"/><rect x="935.4" y="217" width="2.5" height="5.8" fill="#dedede" stroke="#b0b0b0" stroke-width="0.6" transform="rotate(-48.6 936.6 219.9)"/><rect x="932.9" y="290" width="2.4" height="6.7" fill="#dedede" stroke="#b0b0b0" stroke-width="0.6" transform="rotate(-34.6 934.1 293.4)"/><rect x="1072.2" y="370.9" width="3.1" height="4.2" fill="#dedede" stroke="#b0b0b0" stroke-width="0.6" transform="rotate(-48.9 1073.7 373.1)"/><rect x="1059.6" y="279.2" width="2.7" height="5.8" fill="#dedede" stroke="#b0b0b0" stroke-width="0.6" transform="rotate(-35.7 1060.9 282.1)"/><rect x="972.6" y="267.9" width="2.7" height="6.7" fill="#dedede" stroke="#b0b0b0" stroke-width="0.6" transform="rotate(-34.8 973.9 271.2)"/><rect x="1016.6" y="284" width="3.7" height="7.2" fill="#dedede" stroke="#b0b0b0" stroke-width="0.6" transform="rotate(-35.9 1018.4 287.6)"/><rect x="1060" y="228.5" width="3.3" height="7.2" fill="#dedede" stroke="#b0b0b0" stroke-width="0.6" transform="rotate(-42.5 1061.6 232.1)"/><rect x="946.1" y="207.6" width="3.4" height="4.5" fill="#dedede" stroke="#b0b0b0" stroke-width="0.6" transform="rotate(-38.3 947.8 209.9)"/><rect x="985.4" y="381.1" width="3" height="6.3" fill="#dedede" stroke="#b0b0b0" stroke-width="0.6" transform="rotate(-30.2 986.9 384.3)"/><rect x="934" y="213" width="2.3" height="6.7" fill="#dedede" stroke="#b0b0b0" stroke-width="0.6" transform="rotate(-44.3 935.1 216.3)"/><rect x="934.2" y="266.7" width="3.5" height="8" fill="#dedede" stroke="#b0b0b0" stroke-width="0.6" transform="rotate(-49.5 935.9 270.7)"/><rect x="981" y="263.5" width="3.2" height="5.7" fill="#dedede" stroke="#b0b0b0" stroke-width="0.6" transform="rotate(-34 982.6 266.4)"/><rect x="983.8" y="334.8" width="3.6" height="7.9" fill="#dedede" stroke="#b0b0b0" stroke-width="0.6" transform="rotate(-39.1 985.6 338.8)"/><rect x="944.3" y="225.4" width="3.6" height="4.2" fill="#dedede" stroke="#b0b0b0" stroke-width="0.6" transform="rotate(-31.3 946.1 227.5)"/><rect x="934.3" y="266.3" width="2.7" height="5.7" fill="#dedede" stroke="#b0b0b0" stroke-width="0.6" transform="rotate(-49.6 935.6 269.1)"/><rect x="1027.5" y="257.3" width="3.2" height="4.1" fill="#dedede" stroke="#b0b0b0" stroke-width="0.6" transform="rotate(-45.4 1029.2 259.4)"/><rect x="960" y="214.7" width="3.1" height="5.1" fill="#dedede" stroke="#b0b0b0" stroke-width="0.6" transform="rotate(-48.7 961.5 217.3)"/><rect x="926.4" y="239.7" width="3.8" height="4.9" fill="#dedede" stroke="#b0b0b0" stroke-width="0.6" transform="rotate(-40.3 928.3 242.1)"/><rect x="1071.6" y="297.3" width="4" height="4.4" fill="#dedede" stroke="#b0b0b0" stroke-width="0.6" transform="rotate(-41.7 1073.6 299.5)"/><rect x="922.6" y="309.5" width="3.7" height="5.3" fill="#dedede" stroke="#b0b0b0" stroke-width="0.6" transform="rotate(-36.9 924.5 312.1)"/><rect x="1085.4" y="369.5" width="3.3" height="4.7" fill="#dedede" stroke="#b0b0b0" stroke-width="0.6" transform="rotate(-30.1 1087.1 371.9)"/><rect x="1046.1" y="238" width="3" height="7.3" fill="#dedede" stroke="#b0b0b0" stroke-width="0.6" transform="rotate(-49.5 1047.6 241.6)"/><rect x="925.8" y="273.5" width="2.5" height="4" fill="#dedede" stroke="#b0b0b0" stroke-width="0.6" transform="rotate(-34.9 927.1 275.6)"/><rect x="913.9" y="244.8" width="2.8" height="5.8" fill="#dedede" stroke="#b0b0b0" stroke-width="0.6" transform="rotate(-30.8 915.3 247.7)"/><rect x="1062.5" y="354.8" width="2.2" height="5.9" fill="#dedede" stroke="#b0b0b0" stroke-width="0.6" transform="rotate(-35.3 1063.6 357.8)"/><rect x="1065.2" y="349.2" width="2.9" height="7.1" fill="#dedede" stroke="#b0b0b0" stroke-width="0.6" transform="rotate(-30.3 1066.6 352.8)"/><rect x="986.7" y="337" width="2.4" height="7.8" fill="#dedede" stroke="#b0b0b0" stroke-width="0.6" transform="rotate(-45 987.9 340.9)"/><rect x="1018.2" y="248.5" width="3.8" height="3.6" fill="#dedede" stroke="#b0b0b0" stroke-width="0.6" transform="rotate(-42.2 1020.1 250.3)"/><rect x="1062.1" y="273.8" width="2.9" height="6.5" fill="#dedede" stroke="#b0b0b0" stroke-width="0.6" transform="rotate(-37.2 1063.5 277)"/><rect x="1079.6" y="266.2" width="2.8" height="4.8" fill="#dedede" stroke="#b0b0b0" stroke-width="0.6" transform="rotate(-48.1 1081 268.6)"/><rect x="951.1" y="344.8" width="2.8" height="6.8" fill="#dedede" stroke="#b0b0b0" stroke-width="0.6" transform="rotate(-39.1 952.5 348.3)"/><rect x="931.5" y="232.3" width="3.4" height="4.3" fill="#dedede" stroke="#b0b0b0" stroke-width="0.6" transform="rotate(-43 933.2 234.4)"/><rect x="1005" y="282.2" width="3" height="3.5" fill="#dedede" stroke="#b0b0b0" stroke-width="0.6" transform="rotate(-43.6 1006.5 284)"/><rect x="949.8" y="369.8" width="3.2" height="7.8" fill="#dedede" stroke="#b0b0b0" stroke-width="0.6" transform="rotate(-43.6 951.4 373.7)"/><rect x="1094.1" y="287.2" width="3.6" height="4" fill="#dedede" stroke="#b0b0b0" stroke-width="0.6" transform="rotate(-30.7 1095.9 289.1)"/><rect x="1042.9" y="238.7" width="2.6" height="5.3" fill="#dedede" stroke="#b0b0b0" stroke-width="0.6" transform="rotate(-44.5 1044.2 241.4)"/><rect x="971.5" y="239.3" width="3.4" height="7.8" fill="#dedede" stroke="#b0b0b0" stroke-width="0.6" transform="rotate(-42.9 973.2 243.2)"/><rect x="1028.8" y="277.2" width="4" height="4.2" fill="#dedede" stroke="#b0b0b0" stroke-width="0.6" transform="rotate(-37.1 1030.8 279.2)"/><rect x="1076.6" y="366.6" width="2.6" height="6.3" fill="#dedede" stroke="#b0b0b0" stroke-width="0.6" transform="rotate(-37.4 1077.9 369.8)"/><rect x="1034.8" y="284.5" width="3.4" height="5.5" fill="#dedede" stroke="#b0b0b0" stroke-width="0.6" transform="rotate(-42.3 1036.5 287.2)"/><rect x="1018.2" y="302.3" width="2.6" height="6.2" fill="#dedede" stroke="#b0b0b0" stroke-width="0.6" transform="rotate(-49.4 1019.5 305.4)"/><rect x="998.3" y="394.5" width="3.9" height="4.2" fill="#dedede" stroke="#b0b0b0" stroke-width="0.6" transform="rotate(-35.2 1000.2 396.5)"/><rect x="1095.3" y="280.7" width="2.8" height="6.8" fill="#dedede" stroke="#b0b0b0" stroke-width="0.6" transform="rotate(-32.7 1096.7 284.1)"/><rect x="1003.1" y="248.8" width="2.4" height="8" fill="#dedede" stroke="#b0b0b0" stroke-width="0.6" transform="rotate(-33.2 1004.3 252.8)"/><rect x="1065.1" y="354.4" width="3.4" height="7.7" fill="#dedede" stroke="#b0b0b0" stroke-width="0.6" transform="rotate(-39.8 1066.8 358.2)"/><rect x="1072.1" y="341.1" width="4" height="3.8" fill="#dedede" stroke="#b0b0b0" stroke-width="0.6" transform="rotate(-45 1074.1 343)"/><rect x="1010.9" y="369" width="3.7" height="5.5" fill="#dedede" stroke="#b0b0b0" stroke-width="0.6" transform="rotate(-46.1 1012.7 371.8)"/><rect x="925.6" y="309.7" width="2.7" height="6.4" fill="#dedede" stroke="#b0b0b0" stroke-width="0.6" transform="rotate(-34.3 927 312.9)"/><rect x="1059.9" y="367.8" width="3.1" height="4.6" fill="#dedede" stroke="#b0b0b0" stroke-width="0.6" transform="rotate(-34.6 1061.5 370.1)"/><rect x="1059.3" y="233.4" width="3.2" height="7.6" fill="#dedede" stroke="#b0b0b0" stroke-width="0.6" transform="rotate(-42.7 1060.8 237.2)"/><rect x="976.2" y="370.5" width="2.4" height="3.7" fill="#dedede" stroke="#b0b0b0" stroke-width="0.6" transform="rotate(-33.3 977.4 372.3)"/><rect x="984.1" y="366.9" width="2.4" height="4.3" fill="#dedede" stroke="#b0b0b0" stroke-width="0.6" transform="rotate(-37.7 985.3 369.1)"/><rect x="1093.9" y="244.5" width="3.8" height="3.8" fill="#dedede" stroke="#b0b0b0" stroke-width="0.6" transform="rotate(-37.4 1095.9 246.4)"/><rect x="948.3" y="330.8" width="3.8" height="6.8" fill="#dedede" stroke="#b0b0b0" stroke-width="0.6" transform="rotate(-41.4 950.2 334.2)"/><rect x="970.6" y="324.6" width="2.2" height="5" fill="#dedede" stroke="#b0b0b0" stroke-width="0.6" transform="rotate(-44.4 971.7 327.1)"/><rect x="945.4" y="229.1" width="3.3" height="6.6" fill="#dedede" stroke="#b0b0b0" stroke-width="0.6" transform="rotate(-36.1 947 232.4)"/><rect x="948.2" y="393.9" width="3.3" height="5.1" fill="#dedede" stroke="#b0b0b0" stroke-width="0.6" transform="rotate(-36.2 949.9 396.5)"/><rect x="969.2" y="282.5" width="3.5" height="5.1" fill="#dedede" stroke="#b0b0b0" stroke-width="0.6" transform="rotate(-47.1 971 285.1)"/><rect x="1063.5" y="282.5" width="3.3" height="5.4" fill="#dedede" stroke="#b0b0b0" stroke-width="0.6" transform="rotate(-40.9 1065.1 285.2)"/><rect x="976" y="336.8" width="3.1" height="7.7" fill="#dedede" stroke="#b0b0b0" stroke-width="0.6" transform="rotate(-45.3 977.6 340.6)"/><rect x="1073.2" y="259.5" width="3.2" height="4.8" fill="#dedede" stroke="#b0b0b0" stroke-width="0.6" transform="rotate(-32.9 1074.8 261.9)"/><rect x="1084.3" y="278.4" width="3.4" height="5.5" fill="#dedede" stroke="#b0b0b0" stroke-width="0.6" transform="rotate(-35.1 1086.1 281.2)"/><rect x="923.9" y="284.4" width="3.3" height="5.5" fill="#dedede" stroke="#b0b0b0" stroke-width="0.6" transform="rotate(-44.4 925.5 287.2)"/><rect x="966.2" y="335.1" width="3" height="7.8" fill="#dedede" stroke="#b0b0b0" stroke-width="0.6" transform="rotate(-36.6 967.7 339)"/><rect x="975.3" y="360.6" width="2.7" height="5.4" fill="#dedede" stroke="#b0b0b0" stroke-width="0.6" transform="rotate(-33 976.6 363.3)"/><rect x="981.5" y="342.3" width="2.4" height="5.1" fill="#dedede" stroke="#b0b0b0" stroke-width="0.6" transform="rotate(-36.6 982.7 344.9)"/><rect x="1087.9" y="209.4" width="2.8" height="7.5" fill="#dedede" stroke="#b0b0b0" stroke-width="0.6" transform="rotate(-37.3 1089.3 213.1)"/><rect x="998" y="265" width="3" height="5.1" fill="#dedede" stroke="#b0b0b0" stroke-width="0.6" transform="rotate(-36.6 999.5 267.6)"/><rect x="1092.4" y="390.7" width="3.3" height="7.9" fill="#dedede" stroke="#b0b0b0" stroke-width="0.6" transform="rotate(-42.1 1094 394.7)"/><rect x="1041.2" y="393.1" width="3.7" height="6.4" fill="#dedede" stroke="#b0b0b0" stroke-width="0.6" transform="rotate(-48.7 1043.1 396.3)"/><rect x="1033.4" y="246.4" width="3" height="5.3" fill="#dedede" stroke="#b0b0b0" stroke-width="0.6" transform="rotate(-30.2 1034.9 249)"/><rect x="938.5" y="279.9" width="2.6" height="5.2" fill="#dedede" stroke="#b0b0b0" stroke-width="0.6" transform="rotate(-35.2 939.8 282.5)"/><rect x="1061.6" y="344.1" width="3.5" height="4.6" fill="#dedede" stroke="#b0b0b0" stroke-width="0.6" transform="rotate(-34.5 1063.4 346.4)"/><rect x="916.5" y="270.8" width="3.9" height="7.5" fill="#dedede" stroke="#b0b0b0" stroke-width="0.6" transform="rotate(-39.3 918.4 274.6)"/><rect x="1057.9" y="262.6" width="3.2" height="4" fill="#dedede" stroke="#b0b0b0" stroke-width="0.6" transform="rotate(-39.9 1059.5 264.6)"/><rect x="936.1" y="221.7" width="2.4" height="6.1" fill="#dedede" stroke="#b0b0b0" stroke-width="0.6" transform="rotate(-39.8 937.3 224.7)"/><rect x="957.7" y="282.8" width="2.7" height="7" fill="#dedede" stroke="#b0b0b0" stroke-width="0.6" transform="rotate(-48.9 959.1 286.3)"/><rect x="1015.5" y="292" width="2.6" height="5.5" fill="#dedede" stroke="#b0b0b0" stroke-width="0.6" transform="rotate(-33 1016.8 294.8)"/><rect x="1025.2" y="368.8" width="3.1" height="5.3" fill="#dedede" stroke="#b0b0b0" stroke-width="0.6" transform="rotate(-30.7 1026.7 371.5)"/><rect x="940.9" y="305" width="3.5" height="6.7" fill="#dedede" stroke="#b0b0b0" stroke-width="0.6" transform="rotate(-49.4 942.6 308.4)"/><rect x="1091.3" y="327.3" width="2.4" height="4.9" fill="#dedede" stroke="#b0b0b0" stroke-width="0.6" transform="rotate(-33 1092.5 329.7)"/><rect x="926.6" y="254.5" width="2.3" height="5.4" fill="#dedede" stroke="#b0b0b0" stroke-width="0.6" transform="rotate(-47.8 927.7 257.1)"/><rect x="1016.6" y="298.8" width="3.8" height="7.8" fill="#dedede" stroke="#b0b0b0" stroke-width="0.6" transform="rotate(-31.9 1018.5 302.7)"/><rect x="1048.8" y="254.1" width="2.9" height="4.8" fill="#dedede" stroke="#b0b0b0" stroke-width="0.6" transform="rotate(-42.6 1050.3 256.5)"/><rect x="978.3" y="286.5" width="3" height="5.6" fill="#dedede" stroke="#b0b0b0" stroke-width="0.6" transform="rotate(-41 979.8 289.3)"/><rect x="923.5" y="304.1" width="2.3" height="7.3" fill="#dedede" stroke="#b0b0b0" stroke-width="0.6" transform="rotate(-39 924.6 307.7)"/><rect x="930.4" y="275.9" width="2.9" height="4.5" fill="#dedede" stroke="#b0b0b0" stroke-width="0.6" transform="rotate(-43.7 931.8 278.1)"/><rect x="1050.6" y="297.8" width="3.1" height="4.5" fill="#dedede" stroke="#b0b0b0" stroke-width="0.6" transform="rotate(-49.8 1052.1 300.1)"/><rect x="913.3" y="316" width="2.9" height="7.8" fill="#dedede" stroke="#b0b0b0" stroke-width="0.6" transform="rotate(-30.8 914.8 320)"/><rect x="980.3" y="261.9" width="2.9" height="6.2" fill="#dedede" stroke="#b0b0b0" stroke-width="0.6" transform="rotate(-37.8 981.7 265)"/><rect x="1003.9" y="303.1" width="3.3" height="4.9" fill="#dedede" stroke="#b0b0b0" stroke-width="0.6" transform="rotate(-34.9 1005.6 305.6)"/><rect x="958.8" y="256.6" width="2.3" height="3.9" fill="#dedede" stroke="#b0b0b0" stroke-width="0.6" transform="rotate(-34.1 959.9 258.6)"/><rect x="986.4" y="258.6" width="3" height="7.4" fill="#dedede" stroke="#b0b0b0" stroke-width="0.6" transform="rotate(-36.4 987.9 262.3)"/><rect x="1066.4" y="266.4" width="2.4" height="7.9" fill="#dedede" stroke="#b0b0b0" stroke-width="0.6" transform="rotate(-43.7 1067.5 270.4)"/><rect x="1030.4" y="215.7" width="3.7" height="7" fill="#dedede" stroke="#b0b0b0" stroke-width="0.6" transform="rotate(-34.7 1032.2 219.2)"/><rect x="1014.5" y="380" width="2.3" height="6.3" fill="#dedede" stroke="#b0b0b0" stroke-width="0.6" transform="rotate(-37.2 1015.7 383.1)"/><rect x="1051.8" y="313.6" width="2.2" height="7.7" fill="#dedede" stroke="#b0b0b0" stroke-width="0.6" transform="rotate(-49.9 1052.9 317.5)"/><rect x="1037.4" y="391.5" width="3.5" height="5.4" fill="#dedede" stroke="#b0b0b0" stroke-width="0.6" transform="rotate(-31.7 1039.1 394.2)"/><rect x="993.8" y="346.3" width="2.3" height="7" fill="#dedede" stroke="#b0b0b0" stroke-width="0.6" transform="rotate(-42.4 995 349.8)"/><rect x="933.8" y="265.6" width="3" height="5.5" fill="#dedede" stroke="#b0b0b0" stroke-width="0.6" transform="rotate(-35.3 935.3 268.4)"/><rect x="1066.9" y="332.2" width="2.3" height="4" fill="#dedede" stroke="#b0b0b0" stroke-width="0.6" transform="rotate(-39 1068 334.2)"/><rect x="969.5" y="387.2" width="2.4" height="4" fill="#dedede" stroke="#b0b0b0" stroke-width="0.6" transform="rotate(-38.8 970.7 389.2)"/><rect x="988.4" y="307.2" width="3.9" height="4.5" fill="#dedede" stroke="#b0b0b0" stroke-width="0.6" transform="rotate(-33.2 990.3 309.4)"/><rect x="999.7" y="210.9" width="2.4" height="7.4" fill="#dedede" stroke="#b0b0b0" stroke-width="0.6" transform="rotate(-41.4 1000.9 214.6)"/><rect x="1083.8" y="298" width="2.9" height="6.5" fill="#dedede" stroke="#b0b0b0" stroke-width="0.6" transform="rotate(-36.2 1085.3 301.3)"/><rect x="949.5" y="270.4" width="2.5" height="6.1" fill="#dedede" stroke="#b0b0b0" stroke-width="0.6" transform="rotate(-46.7 950.7 273.5)"/><rect x="1008.3" y="278.4" width="2.8" height="6.2" fill="#dedede" stroke="#b0b0b0" stroke-width="0.6" transform="rotate(-38.5 1009.7 281.5)"/><rect x="1019.6" y="296.2" width="3.7" height="5.1" fill="#dedede" stroke="#b0b0b0" stroke-width="0.6" transform="rotate(-30.4 1021.4 298.8)"/><rect x="955.3" y="254.2" width="2.8" height="6.6" fill="#dedede" stroke="#b0b0b0" stroke-width="0.6" transform="rotate(-35.4 956.7 257.5)"/><rect x="1080.1" y="290.3" width="3.2" height="7.9" fill="#dedede" stroke="#b0b0b0" stroke-width="0.6" transform="rotate(-40.3 1081.7 294.2)"/><rect x="931" y="262.7" width="2.6" height="6.9" fill="#dedede" stroke="#b0b0b0" stroke-width="0.6" transform="rotate(-33.1 932.3 266.1)"/><rect x="1017.5" y="308.9" width="2.3" height="6.6" fill="#dedede" stroke="#b0b0b0" stroke-width="0.6" transform="rotate(-43.3 1018.6 312.2)"/><rect x="1053.9" y="355.9" width="2.5" height="7.8" fill="#dedede" stroke="#b0b0b0" stroke-width="0.6" transform="rotate(-48 1055.1 359.7)"/><rect x="948.7" y="306.9" width="3.6" height="4.5" fill="#dedede" stroke="#b0b0b0" stroke-width="0.6" transform="rotate(-37.8 950.5 309.2)"/><rect x="1020.1" y="374.1" width="2.4" height="6.9" fill="#dedede" stroke="#b0b0b0" stroke-width="0.6" transform="rotate(-31.5 1021.3 377.6)"/><rect x="1087.5" y="341.4" width="3.4" height="5.1" fill="#dedede" stroke="#b0b0b0" stroke-width="0.6" transform="rotate(-44.2 1089.2 344)"/><rect x="960.8" y="251.9" width="3.7" height="6.8" fill="#dedede" stroke="#b0b0b0" stroke-width="0.6" transform="rotate(-49.6 962.6 255.3)"/><rect x="966.2" y="253.1" width="3.2" height="4.6" fill="#dedede" stroke="#b0b0b0" stroke-width="0.6" transform="rotate(-47.4 967.7 255.5)"/><rect x="964.7" y="257.8" width="3.1" height="4.7" fill="#dedede" stroke="#b0b0b0" stroke-width="0.6" transform="rotate(-39.8 966.2 260.2)"/><rect x="1070.4" y="368.1" width="3.8" height="4.2" fill="#dedede" stroke="#b0b0b0" stroke-width="0.6" transform="rotate(-37.8 1072.3 370.2)"/><rect x="959.9" y="215.2" width="3.9" height="7" fill="#dedede" stroke="#b0b0b0" stroke-width="0.6" transform="rotate(-31.3 961.8 218.7)"/><rect x="955.2" y="290.1" width="2.9" height="7" fill="#dedede" stroke="#b0b0b0" stroke-width="0.6" transform="rotate(-42.6 956.6 293.6)"/><rect x="1005.3" y="311" width="3.5" height="7.7" fill="#dedede" stroke="#b0b0b0" stroke-width="0.6" transform="rotate(-43 1007 314.9)"/><rect x="1078.5" y="224.5" width="3.4" height="3.8" fill="#dedede" stroke="#b0b0b0" stroke-width="0.6" transform="rotate(-38.7 1080.2 226.4)"/><rect x="969.4" y="368.1" width="2.4" height="7.9" fill="#dedede" stroke="#b0b0b0" stroke-width="0.6" transform="rotate(-48.8 970.6 372.1)"/><rect x="917.5" y="314.2" width="3.4" height="3.8" fill="#dedede" stroke="#b0b0b0" stroke-width="0.6" transform="rotate(-30.3 919.2 316.1)"/><rect x="1056.9" y="302.8" width="3.4" height="7.3" fill="#dedede" stroke="#b0b0b0" stroke-width="0.6" transform="rotate(-48.5 1058.6 306.5)"/><rect x="1009.4" y="272.5" width="3.1" height="4.3" fill="#dedede" stroke="#b0b0b0" stroke-width="0.6" transform="rotate(-40 1010.9 274.7)"/><rect x="989.4" y="296.5" width="2.6" height="6.7" fill="#dedede" stroke="#b0b0b0" stroke-width="0.6" transform="rotate(-48.4 990.7 299.8)"/><rect x="1091.8" y="311.1" width="3.1" height="6" fill="#dedede" stroke="#b0b0b0" stroke-width="0.6" transform="rotate(-47.3 1093.4 314.1)"/><rect x="1042.1" y="383.4" width="2.7" height="5" fill="#dedede" stroke="#b0b0b0" stroke-width="0.6" transform="rotate(-30.5 1043.4 385.9)"/><rect x="1070.1" y="380.2" width="3.9" height="7.7" fill="#dedede" stroke="#b0b0b0" stroke-width="0.6" transform="rotate(-49.6 1072 384)"/><rect x="928" y="302.3" width="3.3" height="7.7" fill="#dedede" stroke="#b0b0b0" stroke-width="0.6" transform="rotate(-30.8 929.6 306.1)"/><rect x="1073.4" y="387.8" width="2.3" height="4" fill="#dedede" stroke="#b0b0b0" stroke-width="0.6" transform="rotate(-49.5 1074.5 389.8)"/><rect x="1039.9" y="302.6" width="2.3" height="7.2" fill="#dedede" stroke="#b0b0b0" stroke-width="0.6" transform="rotate(-38.4 1041 306.2)"/><rect x="912.1" y="217.8" width="3.6" height="7.1" fill="#dedede" stroke="#b0b0b0" stroke-width="0.6" transform="rotate(-34.1 913.9 221.3)"/><rect x="987" y="268" width="4" height="7.3" fill="#dedede" stroke="#b0b0b0" stroke-width="0.6" transform="rotate(-43.1 989 271.6)"/><rect x="960.7" y="315.1" width="2.2" height="7" fill="#dedede" stroke="#b0b0b0" stroke-width="0.6" transform="rotate(-39.5 961.8 318.6)"/><rect x="996.2" y="249.2" width="2.8" height="6.5" fill="#dedede" stroke="#b0b0b0" stroke-width="0.6" transform="rotate(-32.4 997.6 252.4)"/><rect x="959" y="296.4" width="2.5" height="4.2" fill="#dedede" stroke="#b0b0b0" stroke-width="0.6" transform="rotate(-34.3 960.3 298.5)"/><rect x="1033.2" y="254.6" width="2.8" height="4.6" fill="#dedede" stroke="#b0b0b0" stroke-width="0.6" transform="rotate(-39.5 1034.6 256.8)"/><rect x="946.2" y="248.6" width="2.7" height="7.4" fill="#dedede" stroke="#b0b0b0" stroke-width="0.6" transform="rotate(-44 947.5 252.3)"/><rect x="1036.9" y="353.8" width="2.8" height="6.8" fill="#dedede" stroke="#b0b0b0" stroke-width="0.6" transform="rotate(-39.2 1038.2 357.1)"/><rect x="957.4" y="246" width="2.3" height="6.9" fill="#dedede" stroke="#b0b0b0" stroke-width="0.6" transform="rotate(-41.7 958.6 249.4)"/><rect x="977.6" y="377.9" width="4" height="5.2" fill="#dedede" stroke="#b0b0b0" stroke-width="0.6" transform="rotate(-30.2 979.6 380.5)"/><rect x="1058.2" y="354.3" width="2.9" height="4.1" fill="#dedede" stroke="#b0b0b0" stroke-width="0.6" transform="rotate(-43.2 1059.6 356.4)"/><rect x="964.9" y="317.6" width="3.6" height="5.2" fill="#dedede" stroke="#b0b0b0" stroke-width="0.6" transform="rotate(-35.2 966.7 320.2)"/><rect x="914.6" y="298.7" width="3.1" height="7.2" fill="#dedede" stroke="#b0b0b0" stroke-width="0.6" transform="rotate(-42.4 916.1 302.3)"/><rect x="938.6" y="243.5" width="2.3" height="7.6" fill="#dedede" stroke="#b0b0b0" stroke-width="0.6" transform="rotate(-32.4 939.8 247.3)"/><rect x="974.9" y="379.3" width="3.9" height="7.7" fill="#dedede" stroke="#b0b0b0" stroke-width="0.6" transform="rotate(-47.2 976.9 383.2)"/><rect x="947.5" y="230.4" width="3.5" height="7.8" fill="#dedede" stroke="#b0b0b0" stroke-width="0.6" transform="rotate(-36.4 949.3 234.3)"/><rect x="1086.9" y="290.4" width="3.8" height="6.8" fill="#dedede" stroke="#b0b0b0" stroke-width="0.6" transform="rotate(-42.6 1088.8 293.8)"/><rect x="1086.2" y="218.6" width="2.4" height="4.7" fill="#dedede" stroke="#b0b0b0" stroke-width="0.6" transform="rotate(-46.3 1087.4 221)"/><rect x="968.8" y="240" width="2.8" height="3.7" fill="#dedede" stroke="#b0b0b0" stroke-width="0.6" transform="rotate(-47.5 970.3 241.8)"/><rect x="1016.9" y="349.1" width="3.1" height="5.9" fill="#dedede" stroke="#b0b0b0" stroke-width="0.6" transform="rotate(-39.5 1018.5 352.1)"/><rect x="953" y="219.7" width="3.9" height="3.9" fill="#dedede" stroke="#b0b0b0" stroke-width="0.6" transform="rotate(-43.8 955 221.6)"/><rect x="1004.9" y="235" width="3.6" height="7.7" fill="#dedede" stroke="#b0b0b0" stroke-width="0.6" transform="rotate(-43.4 1006.7 238.9)"/><rect x="1058.5" y="390" width="3.2" height="4.8" fill="#dedede" stroke="#b0b0b0" stroke-width="0.6" transform="rotate(-40.8 1060.1 392.4)"/><rect x="997.9" y="240.8" width="3.3" height="7.3" fill="#dedede" stroke="#b0b0b0" stroke-width="0.6" transform="rotate(-31.1 999.5 244.5)"/><rect x="1052.4" y="281.7" width="4" height="3.6" fill="#dedede" stroke="#b0b0b0" stroke-width="0.6" transform="rotate(-49 1054.3 283.5)"/><rect x="1048.6" y="245.4" width="2.5" height="4.3" fill="#dedede" stroke="#b0b0b0" stroke-width="0.6" transform="rotate(-49.6 1049.9 247.5)"/><rect x="914.8" y="263" width="3" height="4.3" fill="#dedede" stroke="#b0b0b0" stroke-width="0.6" transform="rotate(-49.2 916.3 265.2)"/><rect x="980.5" y="294.2" width="2.7" height="6.3" fill="#dedede" stroke="#b0b0b0" stroke-width="0.6" transform="rotate(-37.5 981.8 297.4)"/><rect x="1075.7" y="315.3" width="2.8" height="5.1" fill="#dedede" stroke="#b0b0b0" stroke-width="0.6" transform="rotate(-41.7 1077.1 317.9)"/><rect x="973.4" y="378.1" width="3.2" height="5.6" fill="#dedede" stroke="#b0b0b0" stroke-width="0.6" transform="rotate(-45.3 975 380.9)"/><rect x="1074.4" y="235.5" width="3.9" height="7.3" fill="#dedede" stroke="#b0b0b0" stroke-width="0.6" transform="rotate(-39.8 1076.3 239.2)"/><rect x="1039.3" y="271.3" width="2.7" height="3.9" fill="#dedede" stroke="#b0b0b0" stroke-width="0.6" transform="rotate(-38.8 1040.7 273.3)"/><rect x="1007.1" y="276" width="3.1" height="7.7" fill="#dedede" stroke="#b0b0b0" stroke-width="0.6" transform="rotate(-50 1008.6 279.8)"/><rect x="1004" y="297.1" width="3" height="3.9" fill="#dedede" stroke="#b0b0b0" stroke-width="0.6" transform="rotate(-37.2 1005.5 299)"/><rect x="993.5" y="221.1" width="3.9" height="4.8" fill="#dedede" stroke="#b0b0b0" stroke-width="0.6" transform="rotate(-34 995.5 223.5)"/><rect x="1059.9" y="252.8" width="2.6" height="7.2" fill="#dedede" stroke="#b0b0b0" stroke-width="0.6" transform="rotate(-31.9 1061.2 256.4)"/><rect x="1014.6" y="384.3" width="3.1" height="5.4" fill="#dedede" stroke="#b0b0b0" stroke-width="0.6" transform="rotate(-40.2 1016.2 387)"/><rect x="1067.6" y="300.7" width="3.1" height="4.8" fill="#dedede" stroke="#b0b0b0" stroke-width="0.6" transform="rotate(-43.2 1069.1 303.1)"/><rect x="1066.7" y="358.1" width="2.6" height="4.5" fill="#dedede" stroke="#b0b0b0" stroke-width="0.6" transform="rotate(-30.4 1068 360.3)"/><rect x="1058.8" y="339.1" width="3.9" height="6.6" fill="#dedede" stroke="#b0b0b0" stroke-width="0.6" transform="rotate(-33.8 1060.8 342.4)"/><rect x="1062.2" y="262.8" width="3.6" height="4.3" fill="#dedede" stroke="#b0b0b0" stroke-width="0.6" transform="rotate(-45.1 1064 265)"/><rect x="1006.2" y="270.7" width="3.9" height="3.6" fill="#dedede" stroke="#b0b0b0" stroke-width="0.6" transform="rotate(-34.2 1008.2 272.5)"/><rect x="1084.2" y="325.7" width="3.3" height="7.6" fill="#dedede" stroke="#b0b0b0" stroke-width="0.6" transform="rotate(-48.7 1085.9 329.5)"/><rect x="1093.3" y="371.4" width="3.4" height="4" fill="#dedede" stroke="#b0b0b0" stroke-width="0.6" transform="rotate(-43.8 1095 373.4)"/><rect x="1052.6" y="390.6" width="2.5" height="6.6" fill="#dedede" stroke="#b0b0b0" stroke-width="0.6" transform="rotate(-37.5 1053.9 393.9)"/><rect x="1073.1" y="312" width="3.6" height="7" fill="#dedede" stroke="#b0b0b0" stroke-width="0.6" transform="rotate(-31.1 1074.9 315.5)"/><rect x="983" y="271.9" width="3.4" height="5.7" fill="#dedede" stroke="#b0b0b0" stroke-width="0.6" transform="rotate(-49.5 984.7 274.7)"/><rect x="954.4" y="327.8" width="2.5" height="7.1" fill="#dedede" stroke="#b0b0b0" stroke-width="0.6" transform="rotate(-34.5 955.7 331.4)"/><rect x="970.3" y="256.6" width="3.5" height="5.8" fill="#dedede" stroke="#b0b0b0" stroke-width="0.6" transform="rotate(-46.3 972 259.5)"/><rect x="1086" y="267.3" width="3.4" height="6.6" fill="#dedede" stroke="#b0b0b0" stroke-width="0.6" transform="rotate(-31.5 1087.6 270.6)"/><rect x="1087.3" y="322.8" width="3.8" height="4.8" fill="#dedede" stroke="#b0b0b0" stroke-width="0.6" transform="rotate(-30.7 1089.2 325.2)"/><rect x="963.5" y="304.3" width="3.6" height="5" fill="#dedede" stroke="#b0b0b0" stroke-width="0.6" transform="rotate(-40.2 965.3 306.8)"/><rect x="1011.5" y="293.7" width="2.3" height="7.4" fill="#dedede" stroke="#b0b0b0" stroke-width="0.6" transform="rotate(-35.1 1012.6 297.4)"/><rect x="1019.6" y="251" width="2.6" height="4.4" fill="#dedede" stroke="#b0b0b0" stroke-width="0.6" transform="rotate(-43.4 1021 253.2)"/><rect x="978" y="305.8" width="2.3" height="3.7" fill="#dedede" stroke="#b0b0b0" stroke-width="0.6" transform="rotate(-31 979.1 307.6)"/><rect x="987.1" y="249.6" width="3.4" height="5.4" fill="#dedede" stroke="#b0b0b0" stroke-width="0.6" transform="rotate(-40.5 988.8 252.3)"/><rect x="991.7" y="335.9" width="3.9" height="4" fill="#dedede" stroke="#b0b0b0" stroke-width="0.6" transform="rotate(-34.8 993.7 337.9)"/><rect x="1085.4" y="375.2" width="3.2" height="6.4" fill="#dedede" stroke="#b0b0b0" stroke-width="0.6" transform="rotate(-45 1087 378.4)"/><rect x="1009.5" y="240.4" width="3.2" height="8" fill="#dedede" stroke="#b0b0b0" stroke-width="0.6" transform="rotate(-34.7 1011.1 244.4)"/><rect x="1014.4" y="257" width="2.3" height="4.2" fill="#dedede" stroke="#b0b0b0" stroke-width="0.6" transform="rotate(-35.6 1015.5 259.1)"/><rect x="1053.5" y="328.1" width="3.5" height="4.9" fill="#dedede" stroke="#b0b0b0" stroke-width="0.6" transform="rotate(-35.9 1055.3 330.6)"/><rect x="931.7" y="295" width="3" height="5.4" fill="#dedede" stroke="#b0b0b0" stroke-width="0.6" transform="rotate(-30.9 933.2 297.7)"/><rect x="925.1" y="256.5" width="3.8" height="3.8" fill="#dedede" stroke="#b0b0b0" stroke-width="0.6" transform="rotate(-36.1 927 258.4)"/><rect x="990.7" y="314.4" width="3" height="4.1" fill="#dedede" stroke="#b0b0b0" stroke-width="0.6" transform="rotate(-35.1 992.2 316.5)"/><rect x="935.9" y="215.3" width="2.3" height="6.7" fill="#dedede" stroke="#b0b0b0" stroke-width="0.6" transform="rotate(-40.5 937 218.7)"/><rect x="984.6" y="294.6" width="2.2" height="3.8" fill="#dedede" stroke="#b0b0b0" stroke-width="0.6" transform="rotate(-47.9 985.7 296.5)"/><rect x="1001.6" y="315.3" width="3.9" height="7.3" fill="#dedede" stroke="#b0b0b0" stroke-width="0.6" transform="rotate(-43.7 1003.5 319)"/><rect x="968" y="247.2" width="4" height="4" fill="#dedede" stroke="#b0b0b0" stroke-width="0.6" transform="rotate(-32.7 970 249.2)"/><rect x="985.7" y="373.2" width="3.1" height="5.3" fill="#dedede" stroke="#b0b0b0" stroke-width="0.6" transform="rotate(-44.9 987.3 375.9)"/><rect x="994.7" y="273.9" width="3.6" height="6.7" fill="#dedede" stroke="#b0b0b0" stroke-width="0.6" transform="rotate(-41.3 996.5 277.2)"/><rect x="1027.4" y="283.1" width="3" height="4.9" fill="#dedede" stroke="#b0b0b0" stroke-width="0.6" transform="rotate(-43.9 1028.9 285.6)"/><rect x="999.3" y="371.6" width="3.6" height="5.5" fill="#dedede" stroke="#b0b0b0" stroke-width="0.6" transform="rotate(-40.9 1001.1 374.4)"/><rect x="1092.8" y="352.3" width="2.9" height="7.5" fill="#dedede" stroke="#b0b0b0" stroke-width="0.6" transform="rotate(-42 1094.2 356.1)"/><rect x="966.7" y="341.2" width="3.4" height="6.8" fill="#dedede" stroke="#b0b0b0" stroke-width="0.6" transform="rotate(-31 968.4 344.6)"/><rect x="1012" y="389.3" width="2.6" height="7" fill="#dedede" stroke="#b0b0b0" stroke-width="0.6" transform="rotate(-43.2 1013.3 392.7)"/><rect x="988.8" y="351.7" width="3.5" height="3.6" fill="#dedede" stroke="#b0b0b0" stroke-width="0.6" transform="rotate(-44.8 990.5 353.5)"/><rect x="985.6" y="394.3" width="3.3" height="4.5" fill="#dedede" stroke="#b0b0b0" stroke-width="0.6" transform="rotate(-46.1 987.2 396.5)"/><rect x="1019.4" y="362.1" width="3.8" height="3.8" fill="#dedede" stroke="#b0b0b0" stroke-width="0.6" transform="rotate(-33.3 1021.3 363.9)"/><rect x="1043.8" y="348.8" width="2.9" height="6.2" fill="#dedede" stroke="#b0b0b0" stroke-width="0.6" transform="rotate(-35.1 1045.3 351.9)"/><rect x="1042.3" y="311.9" width="3.2" height="4.6" fill="#dedede" stroke="#b0b0b0" stroke-width="0.6" transform="rotate(-39.1 1043.9 314.2)"/><rect x="1055.7" y="267" width="4" height="4.1" fill="#dedede" stroke="#b0b0b0" stroke-width="0.6" transform="rotate(-35.5 1057.6 269.1)"/><rect x="1016.4" y="305.5" width="3.9" height="4.7" fill="#dedede" stroke="#b0b0b0" stroke-width="0.6" transform="rotate(-40.1 1018.4 307.9)"/><rect x="1077.7" y="330.2" width="2.5" height="6.3" fill="#dedede" stroke="#b0b0b0" stroke-width="0.6" transform="rotate(-44.2 1079 333.3)"/><rect x="938.8" y="319.9" width="3.7" height="5.4" fill="#dedede" stroke="#b0b0b0" stroke-width="0.6" transform="rotate(-40.8 940.6 322.6)"/><rect x="1017.3" y="383.3" width="3.2" height="8" fill="#dedede" stroke="#b0b0b0" stroke-width="0.6" transform="rotate(-42.9 1018.8 387.3)"/><rect x="967.4" y="337.3" width="3.6" height="3.8" fill="#dedede" stroke="#b0b0b0" stroke-width="0.6" transform="rotate(-36.2 969.2 339.2)"/><rect x="962.4" y="273" width="3.7" height="5.2" fill="#dedede" stroke="#b0b0b0" stroke-width="0.6" transform="rotate(-39.3 964.3 275.6)"/><rect x="1034.1" y="233.2" width="2.2" height="5.2" fill="#dedede" stroke="#b0b0b0" stroke-width="0.6" transform="rotate(-43.8 1035.2 235.8)"/><rect x="958" y="238.3" width="3.8" height="7.7" fill="#dedede" stroke="#b0b0b0" stroke-width="0.6" transform="rotate(-47.6 959.9 242.2)"/><rect x="1049.2" y="254.7" width="2.4" height="7.1" fill="#dedede" stroke="#b0b0b0" stroke-width="0.6" transform="rotate(-40.2 1050.4 258.2)"/><rect x="1063.1" y="369.5" width="3.5" height="3.6" fill="#dedede" stroke="#b0b0b0" stroke-width="0.6" transform="rotate(-45.8 1064.9 371.3)"/><rect x="974.2" y="370.5" width="3.5" height="6.6" fill="#dedede" stroke="#b0b0b0" stroke-width="0.6" transform="rotate(-45.6 975.9 373.8)"/><rect x="993.7" y="359.4" width="3.1" height="4.9" fill="#dedede" stroke="#b0b0b0" stroke-width="0.6" transform="rotate(-38.6 995.2 361.9)"/><rect x="953.3" y="246.7" width="3.3" height="7.9" fill="#dedede" stroke="#b0b0b0" stroke-width="0.6" transform="rotate(-37.6 954.9 250.6)"/><rect x="975.3" y="287.4" width="2.5" height="7.8" fill="#dedede" stroke="#b0b0b0" stroke-width="0.6" transform="rotate(-41.4 976.5 291.3)"/><rect x="1036.8" y="237.1" width="3.7" height="7.6" fill="#dedede" stroke="#b0b0b0" stroke-width="0.6" transform="rotate(-42.9 1038.6 240.9)"/><rect x="1074.9" y="371.2" width="3.5" height="4.5" fill="#dedede" stroke="#b0b0b0" stroke-width="0.6" transform="rotate(-45.5 1076.6 373.4)"/><rect x="1045" y="214" width="2.9" height="4.5" fill="#dedede" stroke="#b0b0b0" stroke-width="0.6" transform="rotate(-36.1 1046.5 216.2)"/><rect x="1012.9" y="314.5" width="2.3" height="7.3" fill="#dedede" stroke="#b0b0b0" stroke-width="0.6" transform="rotate(-48.1 1014 318.1)"/><rect x="1094.9" y="319" width="2.3" height="5.1" fill="#dedede" stroke="#b0b0b0" stroke-width="0.6" transform="rotate(-32.8 1096 321.5)"/><rect x="1035.7" y="337.3" width="2.5" height="4.7" fill="#dedede" stroke="#b0b0b0" stroke-width="0.6" transform="rotate(-43.6 1037 339.7)"/><polyline points="910,400 959.3,449.3 984,491.2 1003.7,498.6 1060.4,508.5 1097.4,513.4" fill="none" stroke="#8f8f8f" stroke-width="1"/><polyline points="1003.7,400 1043.2,441.9 1097.4,508.5" fill="none" stroke="#8f8f8f" stroke-width="0.8"/><polyline points="1021,400 1099.9,466.6" fill="none" stroke="#8f8f8f" stroke-width="0.8"/><polyline points="1058,400 1099.9,449.3" fill="none" stroke="#8f8f8f" stroke-width="0.8"/><polyline points="1025.9,456.7 1060.4,506" fill="none" stroke="#8f8f8f" stroke-width="0.8"/><polyline points="910,432.1 1013.6,409.9" fill="none" stroke="#8f8f8f" stroke-width="0.8"/><polyline points="924.8,449.3 988.9,427.1" fill="none" stroke="#8f8f8f" stroke-width="0.8"/><polyline points="964.3,456.7 984,444.4" fill="none" stroke="#8f8f8f" stroke-width="0.7"/><polyline points="984,486.3 996.3,478.9" fill="none" stroke="#8f8f8f" stroke-width="0.7"/><polyline points="1001.2,498.6 1023.4,538.1 1099.9,572.6" fill="none" stroke="#8f8f8f" stroke-width="0.7"/><polyline points="1055.5,508.5 1058,523.3 1099.9,552.9" fill="none" stroke="#8f8f8f" stroke-width="0.7"/><polyline points="956.9,446.9 984,437 988.9,449.3 964.3,456.7" fill="none" stroke="#8f8f8f" stroke-width="0.7"/><rect x="998.8" y="464.1" width="22.2" height="19.7" fill="#dedede" stroke="#b0b0b0" stroke-width="0.6"/><rect x="974.1" y="456.7" width="12.3" height="12.3" fill="#dedede" stroke="#b0b0b0" stroke-width="0.6"/><rect x="1018.5" y="430.8" width="8.6" height="23.4" fill="#dedede" stroke="#b0b0b0" stroke-width="0.6" transform="rotate(10 1022.8 442.5)"/><rect x="993.8" y="419.7" width="14.8" height="17.3" fill="#dedede" stroke="#b0b0b0" stroke-width="0.6" transform="rotate(20 1001.2 428.4)"/><rect x="934.7" y="404.9" width="17.3" height="17.3" fill="#dedede" stroke="#b0b0b0" stroke-width="0.6"/><rect x="956.9" y="498.6" width="14.8" height="14.8" fill="#dedede" stroke="#b0b0b0" stroke-width="0.6"/><rect x="965.5" y="417.1" width="2.8" height="4.6" fill="#dedede" stroke="#b0b0b0" stroke-width="0.6" transform="rotate(-49.7 966.9 419.4)"/><rect x="961.2" y="407.2" width="2.8" height="6.2" fill="#dedede" stroke="#b0b0b0" stroke-width="0.6" transform="rotate(-33.1 962.6 410.3)"/><rect x="1032.3" y="444.1" width="3.6" height="6.3" fill="#dedede" stroke="#b0b0b0" stroke-width="0.6" transform="rotate(-40 1034.1 447.3)"/><rect x="1056.2" y="457.2" width="3.2" height="5.9" fill="#dedede" stroke="#b0b0b0" stroke-width="0.6" transform="rotate(-45.5 1057.8 460.2)"/><rect x="917.9" y="451.9" width="2.2" height="4.9" fill="#dedede" stroke="#b0b0b0" stroke-width="0.6" transform="rotate(-37.6 919 454.3)"/><rect x="1071.2" y="454.9" width="2.7" height="4.4" fill="#dedede" stroke="#b0b0b0" stroke-width="0.6" transform="rotate(-36.3 1072.6 457.1)"/><rect x="1093.2" y="457.3" width="3.2" height="7.5" fill="#dedede" stroke="#b0b0b0" stroke-width="0.6" transform="rotate(-33.3 1094.8 461.1)"/><rect x="1090.3" y="435.5" width="2.3" height="4.6" fill="#dedede" stroke="#b0b0b0" stroke-width="0.6" transform="rotate(-39.7 1091.5 437.8)"/><rect x="914.5" y="409.2" width="2.3" height="8" fill="#dedede" stroke="#b0b0b0" stroke-width="0.6" transform="rotate(-42.2 915.6 413.2)"/><rect x="1077.2" y="443.4" width="2.5" height="5.6" fill="#dedede" stroke="#b0b0b0" stroke-width="0.6" transform="rotate(-45.7 1078.5 446.2)"/><rect x="952.2" y="443.6" width="3.3" height="3.6" fill="#dedede" stroke="#b0b0b0" stroke-width="0.6" transform="rotate(-45.7 953.9 445.4)"/><rect x="1028.4" y="417.3" width="3.2" height="4" fill="#dedede" stroke="#b0b0b0" stroke-width="0.6" transform="rotate(-33.7 1030 419.3)"/><rect x="922.4" y="402.2" width="3.5" height="6.9" fill="#dedede" stroke="#b0b0b0" stroke-width="0.6" transform="rotate(-34 924.2 405.6)"/><rect x="917.5" y="410.7" width="2.5" height="4.4" fill="#dedede" stroke="#b0b0b0" stroke-width="0.6" transform="rotate(-40.5 918.7 412.9)"/><rect x="959.2" y="453.9" width="3.9" height="4.9" fill="#dedede" stroke="#b0b0b0" stroke-width="0.6" transform="rotate(-46.3 961.2 456.3)"/><rect x="1082.8" y="402.8" width="3.3" height="6.3" fill="#dedede" stroke="#b0b0b0" stroke-width="0.6" transform="rotate(-38.7 1084.5 405.9)"/><rect x="958.2" y="444.9" width="2.9" height="7.2" fill="#dedede" stroke="#b0b0b0" stroke-width="0.6" transform="rotate(-46.3 959.6 448.5)"/><rect x="955.9" y="417.3" width="3.1" height="7.9" fill="#dedede" stroke="#b0b0b0" stroke-width="0.6" transform="rotate(-31.6 957.4 421.3)"/><rect x="946" y="415.7" width="3.4" height="3.8" fill="#dedede" stroke="#b0b0b0" stroke-width="0.6" transform="rotate(-44.2 947.8 417.6)"/><rect x="1090.6" y="442.4" width="3.7" height="6.7" fill="#dedede" stroke="#b0b0b0" stroke-width="0.6" transform="rotate(-37.4 1092.4 445.7)"/><rect x="1002.4" y="403.7" width="2.9" height="6.7" fill="#dedede" stroke="#b0b0b0" stroke-width="0.6" transform="rotate(-40.2 1003.8 407.1)"/><rect x="920.9" y="401.8" width="2.9" height="5.9" fill="#dedede" stroke="#b0b0b0" stroke-width="0.6" transform="rotate(-30.3 922.4 404.7)"/><rect x="939.2" y="438.5" width="2.9" height="5" fill="#dedede" stroke="#b0b0b0" stroke-width="0.6" transform="rotate(-31.7 940.6 441)"/><rect x="946.7" y="447.4" width="3.2" height="4.6" fill="#dedede" stroke="#b0b0b0" stroke-width="0.6" transform="rotate(-48.4 948.3 449.7)"/><rect x="946.5" y="431" width="3.8" height="3.7" fill="#dedede" stroke="#b0b0b0" stroke-width="0.6" transform="rotate(-33.1 948.4 432.9)"/><rect x="1051" y="445.6" width="3.3" height="6.9" fill="#dedede" stroke="#b0b0b0" stroke-width="0.6" transform="rotate(-49 1052.7 449)"/><rect x="941.6" y="402.5" width="3.7" height="4.2" fill="#dedede" stroke="#b0b0b0" stroke-width="0.6" transform="rotate(-49.4 943.4 404.6)"/><rect x="927.8" y="403" width="3.8" height="5.2" fill="#dedede" stroke="#b0b0b0" stroke-width="0.6" transform="rotate(-33.1 929.7 405.6)"/><rect x="918.8" y="407" width="3.3" height="7.6" fill="#dedede" stroke="#b0b0b0" stroke-width="0.6" transform="rotate(-44.3 920.5 410.8)"/><rect x="948.8" y="442.3" width="2.5" height="4" fill="#dedede" stroke="#b0b0b0" stroke-width="0.6" transform="rotate(-46.6 950.1 444.3)"/><rect x="980.9" y="409.6" width="2.5" height="5.9" fill="#dedede" stroke="#b0b0b0" stroke-width="0.6" transform="rotate(-38.6 982.2 412.5)"/><rect x="998.7" y="402.6" width="3.1" height="5.2" fill="#dedede" stroke="#b0b0b0" stroke-width="0.6" transform="rotate(-37.7 1000.3 405.2)"/><rect x="913.7" y="457.7" width="2.5" height="5" fill="#dedede" stroke="#b0b0b0" stroke-width="0.6" transform="rotate(-38.2 915 460.2)"/><rect x="1084.1" y="408.5" width="2.9" height="5.9" fill="#dedede" stroke="#b0b0b0" stroke-width="0.6" transform="rotate(-42.3 1085.5 411.4)"/><rect x="1041" y="458.9" width="3.5" height="5.2" fill="#dedede" stroke="#b0b0b0" stroke-width="0.6" transform="rotate(-49.2 1042.7 461.5)"/><rect x="1049.5" y="451.1" width="2.7" height="4.8" fill="#dedede" stroke="#b0b0b0" stroke-width="0.6" transform="rotate(-36 1050.9 453.5)"/><rect x="1090.7" y="448.9" width="3.6" height="4" fill="#dedede" stroke="#b0b0b0" stroke-width="0.6" transform="rotate(-32.7 1092.5 450.9)"/><rect x="1087.6" y="457.3" width="2.9" height="6.2" fill="#dedede" stroke="#b0b0b0" stroke-width="0.6" transform="rotate(-38.5 1089 460.4)"/><rect x="1064.9" y="440.7" width="3.8" height="8" fill="#dedede" stroke="#b0b0b0" stroke-width="0.6" transform="rotate(-30.8 1066.8 444.7)"/><rect x="1015.5" y="408.5" width="2.5" height="5.3" fill="#dedede" stroke="#b0b0b0" stroke-width="0.6" transform="rotate(-34.4 1016.8 411.2)"/><rect x="948.5" y="434.9" width="2.5" height="7.3" fill="#dedede" stroke="#b0b0b0" stroke-width="0.6" transform="rotate(-43.2 949.7 438.6)"/><rect x="912.4" y="421.8" width="2.2" height="3.5" fill="#dedede" stroke="#b0b0b0" stroke-width="0.6" transform="rotate(-44.5 913.5 423.6)"/><rect x="923.9" y="445.6" width="4" height="6.4" fill="#dedede" stroke="#b0b0b0" stroke-width="0.6" transform="rotate(-45.4 925.9 448.7)"/><rect x="1068.7" y="459.2" width="3.1" height="6.8" fill="#dedede" stroke="#b0b0b0" stroke-width="0.6" transform="rotate(-41.6 1070.2 462.5)"/><rect x="939.8" y="449.6" width="3" height="6.6" fill="#dedede" stroke="#b0b0b0" stroke-width="0.6" transform="rotate(-30.7 941.3 452.9)"/><rect x="941.7" y="402.3" width="2.6" height="6.3" fill="#dedede" stroke="#b0b0b0" stroke-width="0.6" transform="rotate(-41.7 943 405.4)"/><rect x="929.9" y="402.4" width="3.9" height="3.8" fill="#dedede" stroke="#b0b0b0" stroke-width="0.6" transform="rotate(-40.8 931.9 404.2)"/><rect x="1029.5" y="401.7" width="2.9" height="4" fill="#dedede" stroke="#b0b0b0" stroke-width="0.6" transform="rotate(-45.4 1030.9 403.7)"/><rect x="923.7" y="435" width="2.3" height="4.2" fill="#dedede" stroke="#b0b0b0" stroke-width="0.6" transform="rotate(-47.4 924.9 437.1)"/><rect x="974.9" y="407.6" width="3.3" height="7.2" fill="#dedede" stroke="#b0b0b0" stroke-width="0.6" transform="rotate(-36.6 976.6 411.2)"/><rect x="1089.7" y="418.2" width="3.8" height="6.5" fill="#dedede" stroke="#b0b0b0" stroke-width="0.6" transform="rotate(-34.5 1091.5 421.5)"/><rect x="914" y="430.7" width="3.3" height="5.6" fill="#dedede" stroke="#b0b0b0" stroke-width="0.6" transform="rotate(-44.7 915.6 433.5)"/><rect x="1005.3" y="403.8" width="3.3" height="5.8" fill="#dedede" stroke="#b0b0b0" stroke-width="0.6" transform="rotate(-47.4 1006.9 406.7)"/><rect x="1093" y="450.3" width="3.3" height="6.6" fill="#dedede" stroke="#b0b0b0" stroke-width="0.6" transform="rotate(-44.2 1094.6 453.6)"/><rect x="1059.1" y="425.3" width="3" height="5.8" fill="#dedede" stroke="#b0b0b0" stroke-width="0.6" transform="rotate(-31.6 1060.6 428.2)"/><rect x="984.7" y="405.3" width="4" height="3.7" fill="#dedede" stroke="#b0b0b0" stroke-width="0.6" transform="rotate(-36.4 986.7 407.1)"/><rect x="914.1" y="458.1" width="3.8" height="4.5" fill="#dedede" stroke="#b0b0b0" stroke-width="0.6" transform="rotate(-40.3 916 460.3)"/><rect x="1075.4" y="449.4" width="2.4" height="4.1" fill="#dedede" stroke="#b0b0b0" stroke-width="0.6" transform="rotate(-48.7 1076.7 451.4)"/><rect x="973.6" y="409" width="2.3" height="7.7" fill="#dedede" stroke="#b0b0b0" stroke-width="0.6" transform="rotate(-34.4 974.7 412.8)"/><rect x="1031.7" y="431.2" width="2.4" height="3.7" fill="#dedede" stroke="#b0b0b0" stroke-width="0.6" transform="rotate(-32 1032.9 433)"/><rect x="920.2" y="439.6" width="3.6" height="4.4" fill="#dedede" stroke="#b0b0b0" stroke-width="0.6" transform="rotate(-40.6 922 441.8)"/><rect x="950.2" y="440.1" width="2.7" height="7.6" fill="#dedede" stroke="#b0b0b0" stroke-width="0.6" transform="rotate(-48.5 951.6 443.9)"/><rect x="1024.6" y="419.9" width="3.9" height="7.8" fill="#dedede" stroke="#b0b0b0" stroke-width="0.6" transform="rotate(-35.5 1026.5 423.8)"/><rect x="919.4" y="431.7" width="3.8" height="7.1" fill="#dedede" stroke="#b0b0b0" stroke-width="0.6" transform="rotate(-47.2 921.3 435.3)"/><rect x="1070.1" y="415.5" width="3.2" height="7.8" fill="#dedede" stroke="#b0b0b0" stroke-width="0.6" transform="rotate(-39 1071.7 419.4)"/><rect x="1048.3" y="449.9" width="2.8" height="4.3" fill="#dedede" stroke="#b0b0b0" stroke-width="0.6" transform="rotate(-43.3 1049.7 452)"/><rect x="1045.2" y="429.4" width="3" height="6.6" fill="#dedede" stroke="#b0b0b0" stroke-width="0.6" transform="rotate(-47.6 1046.7 432.7)"/><rect x="1063.7" y="432.6" width="2.4" height="4.3" fill="#dedede" stroke="#b0b0b0" stroke-width="0.6" transform="rotate(-37.1 1064.9 434.8)"/><rect x="944.2" y="463.2" width="2.9" height="5.2" fill="#dedede" stroke="#b0b0b0" stroke-width="0.6" transform="rotate(-37.9 945.7 465.8)"/><rect x="1071.9" y="461.8" width="3.6" height="6.2" fill="#dedede" stroke="#b0b0b0" stroke-width="0.6" transform="rotate(-41.9 1073.7 464.9)"/><rect x="1065.8" y="424.5" width="3.6" height="6.5" fill="#dedede" stroke="#b0b0b0" stroke-width="0.6" transform="rotate(-37.1 1067.7 427.8)"/><rect x="930.5" y="452" width="2.7" height="4.9" fill="#dedede" stroke="#b0b0b0" stroke-width="0.6" transform="rotate(-31.6 931.8 454.4)"/><rect x="933.4" y="409.2" width="2.7" height="5.2" fill="#dedede" stroke="#b0b0b0" stroke-width="0.6" transform="rotate(-37.2 934.8 411.8)"/><rect x="958.4" y="450.2" width="3.8" height="3.9" fill="#dedede" stroke="#b0b0b0" stroke-width="0.6" transform="rotate(-45.5 960.3 452.1)"/><rect x="998.3" y="413.1" width="3.8" height="5.1" fill="#dedede" stroke="#b0b0b0" stroke-width="0.6" transform="rotate(-44.2 1000.2 415.6)"/><rect x="1045.5" y="402" width="3" height="4.8" fill="#dedede" stroke="#b0b0b0" stroke-width="0.6" transform="rotate(-37.2 1046.9 404.3)"/><rect x="946.9" y="407.8" width="3.6" height="5" fill="#dedede" stroke="#b0b0b0" stroke-width="0.6" transform="rotate(-48.5 948.7 410.3)"/><rect x="914.8" y="428.9" width="3.6" height="6.2" fill="#dedede" stroke="#b0b0b0" stroke-width="0.6" transform="rotate(-38 916.6 432)"/><rect x="1079.9" y="456.3" width="4" height="5.1" fill="#dedede" stroke="#b0b0b0" stroke-width="0.6" transform="rotate(-38.5 1081.9 458.9)"/><rect x="928.6" y="435" width="2.4" height="7.1" fill="#dedede" stroke="#b0b0b0" stroke-width="0.6" transform="rotate(-48.1 929.8 438.6)"/><rect x="940.7" y="464.1" width="2.4" height="5.3" fill="#dedede" stroke="#b0b0b0" stroke-width="0.6" transform="rotate(-38.4 941.9 466.8)"/><rect x="1050.1" y="440.2" width="3.8" height="7.8" fill="#dedede" stroke="#b0b0b0" stroke-width="0.6" transform="rotate(-40.5 1052 444.1)"/><rect x="940.8" y="433.7" width="3.6" height="6.5" fill="#dedede" stroke="#b0b0b0" stroke-width="0.6" transform="rotate(-41.7 942.6 436.9)"/><rect x="1038" y="436.1" width="3.1" height="6.7" fill="#dedede" stroke="#b0b0b0" stroke-width="0.6" transform="rotate(-34.2 1039.6 439.4)"/><rect x="938.4" y="403.1" width="3.7" height="3.9" fill="#dedede" stroke="#b0b0b0" stroke-width="0.6" transform="rotate(-46.8 940.3 405.1)"/><rect x="1054.3" y="421.6" width="3.2" height="4.8" fill="#dedede" stroke="#b0b0b0" stroke-width="0.6" transform="rotate(-33.1 1055.9 424)"/><rect x="1011.9" y="406.2" width="3.6" height="3.5" fill="#dedede" stroke="#b0b0b0" stroke-width="0.6" transform="rotate(-32.3 1013.7 407.9)"/><rect x="1053.2" y="438.6" width="2.3" height="4.7" fill="#dedede" stroke="#b0b0b0" stroke-width="0.6" transform="rotate(-36.7 1054.4 440.9)"/><rect x="949.2" y="429.7" width="2.9" height="5.8" fill="#dedede" stroke="#b0b0b0" stroke-width="0.6" transform="rotate(-44.9 950.7 432.6)"/><rect x="937.1" y="413" width="3.4" height="4" fill="#dedede" stroke="#b0b0b0" stroke-width="0.6" transform="rotate(-39.3 938.8 415)"/><rect x="1092.4" y="455.5" width="3.2" height="3.5" fill="#dedede" stroke="#b0b0b0" stroke-width="0.6" transform="rotate(-42.4 1094 457.3)"/><rect x="1091.3" y="411.2" width="2.5" height="7.2" fill="#dedede" stroke="#b0b0b0" stroke-width="0.6" transform="rotate(-34.9 1092.5 414.8)"/><rect x="950" y="407.5" width="3.7" height="7.7" fill="#dedede" stroke="#b0b0b0" stroke-width="0.6" transform="rotate(-46.7 951.9 411.4)"/><rect x="1078.9" y="429.6" width="2.6" height="7.6" fill="#dedede" stroke="#b0b0b0" stroke-width="0.6" transform="rotate(-47.5 1080.2 433.4)"/><rect x="1030.8" y="447.1" width="2.8" height="4.6" fill="#dedede" stroke="#b0b0b0" stroke-width="0.6" transform="rotate(-34.5 1032.2 449.4)"/><rect x="1042.2" y="420.7" width="3" height="6.6" fill="#dedede" stroke="#b0b0b0" stroke-width="0.6" transform="rotate(-38.7 1043.7 424)"/><rect x="931.3" y="401" width="2.9" height="4.3" fill="#dedede" stroke="#b0b0b0" stroke-width="0.6" transform="rotate(-34.7 932.7 403.1)"/><rect x="1057" y="405.3" width="2.6" height="6.8" fill="#dedede" stroke="#b0b0b0" stroke-width="0.6" transform="rotate(-46.2 1058.3 408.7)"/><rect x="1047" y="419.1" width="2.8" height="7" fill="#dedede" stroke="#b0b0b0" stroke-width="0.6" transform="rotate(-41 1048.4 422.6)"/><rect x="1057.4" y="416.8" width="2.8" height="5.6" fill="#dedede" stroke="#b0b0b0" stroke-width="0.6" transform="rotate(-33.8 1058.8 419.7)"/><rect x="1086.7" y="459.8" width="3.9" height="6.2" fill="#dedede" stroke="#b0b0b0" stroke-width="0.6" transform="rotate(-46.6 1088.6 462.9)"/><rect x="1058.5" y="408" width="4" height="4.4" fill="#dedede" stroke="#b0b0b0" stroke-width="0.6" transform="rotate(-43.9 1060.5 410.2)"/><rect x="1036.6" y="412.8" width="3" height="7.3" fill="#dedede" stroke="#b0b0b0" stroke-width="0.6" transform="rotate(-32 1038.1 416.4)"/><rect x="921.2" y="418.3" width="3.8" height="5.8" fill="#dedede" stroke="#b0b0b0" stroke-width="0.6" transform="rotate(-44.2 923.1 421.2)"/><rect x="1046.3" y="422.3" width="2.3" height="4.6" fill="#dedede" stroke="#b0b0b0" stroke-width="0.6" transform="rotate(-45.5 1047.5 424.6)"/><rect x="965.3" y="401.1" width="2.9" height="6" fill="#dedede" stroke="#b0b0b0" stroke-width="0.6" transform="rotate(-36.5 966.7 404.1)"/><rect x="1048.4" y="478.2" width="2.8" height="5.7" fill="#dedede" stroke="#b0b0b0" stroke-width="0.6" transform="rotate(-49 1049.8 481)"/><rect x="1028.6" y="453.1" width="2.7" height="4.8" fill="#dedede" stroke="#b0b0b0" stroke-width="0.6" transform="rotate(-40.4 1030 455.5)"/><rect x="1047.3" y="495.5" width="2.2" height="7.5" fill="#dedede" stroke="#b0b0b0" stroke-width="0.6" transform="rotate(-39.5 1048.4 499.2)"/><rect x="1079.5" y="509" width="2.2" height="4" fill="#dedede" stroke="#b0b0b0" stroke-width="0.6" transform="rotate(-40.1 1080.6 511)"/><rect x="1057.8" y="531.7" width="2.8" height="6.9" fill="#dedede" stroke="#b0b0b0" stroke-width="0.6" transform="rotate(-33.3 1059.2 535.1)"/><rect x="1070" y="497.7" width="3.8" height="6.8" fill="#dedede" stroke="#b0b0b0" stroke-width="0.6" transform="rotate(-39.3 1071.9 501)"/><rect x="1081.2" y="539.4" width="3.2" height="5.9" fill="#dedede" stroke="#b0b0b0" stroke-width="0.6" transform="rotate(-49 1082.9 542.3)"/><rect x="1064.5" y="544.2" width="3.6" height="6.3" fill="#dedede" stroke="#b0b0b0" stroke-width="0.6" transform="rotate(-49 1066.3 547.3)"/><rect x="1091.1" y="467.3" width="3.1" height="5.2" fill="#dedede" stroke="#b0b0b0" stroke-width="0.6" transform="rotate(-38.7 1092.6 469.8)"/><rect x="1056.9" y="525.8" width="2.5" height="6.9" fill="#dedede" stroke="#b0b0b0" stroke-width="0.6" transform="rotate(-43.9 1058.2 529.3)"/><rect x="1036.7" y="528.1" width="3.8" height="3.5" fill="#dedede" stroke="#b0b0b0" stroke-width="0.6" transform="rotate(-32.4 1038.6 529.8)"/><rect x="1026" y="524.7" width="3.6" height="4.7" fill="#dedede" stroke="#b0b0b0" stroke-width="0.6" transform="rotate(-35.4 1027.8 527)"/><rect x="1060" y="453.4" width="2.3" height="7.7" fill="#dedede" stroke="#b0b0b0" stroke-width="0.6" transform="rotate(-40.4 1061.1 457.3)"/><rect x="1086.6" y="549.1" width="2.8" height="4" fill="#dedede" stroke="#b0b0b0" stroke-width="0.6" transform="rotate(-47.5 1088 551.1)"/><rect x="1070.4" y="461.6" width="3" height="4.7" fill="#dedede" stroke="#b0b0b0" stroke-width="0.6" transform="rotate(-43.3 1071.9 463.9)"/><rect x="1052.7" y="512.2" width="2.9" height="5.6" fill="#dedede" stroke="#b0b0b0" stroke-width="0.6" transform="rotate(-31.2 1054.1 515)"/><rect x="1081.4" y="473.4" width="3.9" height="7.6" fill="#dedede" stroke="#b0b0b0" stroke-width="0.6" transform="rotate(-45.1 1083.4 477.2)"/><rect x="1065.5" y="486.2" width="3" height="6.4" fill="#dedede" stroke="#b0b0b0" stroke-width="0.6" transform="rotate(-30.2 1067 489.4)"/><rect x="1026.8" y="472.3" width="2.8" height="3.6" fill="#dedede" stroke="#b0b0b0" stroke-width="0.6" transform="rotate(-35.4 1028.2 474.1)"/><rect x="1037.6" y="475.8" width="3.7" height="3.7" fill="#dedede" stroke="#b0b0b0" stroke-width="0.6" transform="rotate(-34.3 1039.5 477.6)"/><rect x="1027.6" y="551.8" width="3.8" height="4.7" fill="#dedede" stroke="#b0b0b0" stroke-width="0.6" transform="rotate(-30.6 1029.5 554.2)"/><rect x="1075.6" y="530.1" width="3.5" height="5.6" fill="#dedede" stroke="#b0b0b0" stroke-width="0.6" transform="rotate(-39.8 1077.4 532.9)"/><rect x="1069.9" y="483.8" width="2.7" height="5.9" fill="#dedede" stroke="#b0b0b0" stroke-width="0.6" transform="rotate(-37.2 1071.2 486.7)"/><rect x="1036" y="473.1" width="2.5" height="7.9" fill="#dedede" stroke="#b0b0b0" stroke-width="0.6" transform="rotate(-30.8 1037.2 477)"/><rect x="1082.3" y="536.8" width="3.9" height="7.7" fill="#dedede" stroke="#b0b0b0" stroke-width="0.6" transform="rotate(-33.6 1084.3 540.7)"/><rect x="1074.7" y="538.7" width="3.2" height="3.8" fill="#dedede" stroke="#b0b0b0" stroke-width="0.6" transform="rotate(-33.2 1076.3 540.6)"/><rect x="1075.3" y="501.8" width="2.3" height="3.8" fill="#dedede" stroke="#b0b0b0" stroke-width="0.6" transform="rotate(-32.1 1076.5 503.7)"/><rect x="1070" y="519.5" width="4" height="5.5" fill="#dedede" stroke="#b0b0b0" stroke-width="0.6" transform="rotate(-36.1 1072 522.3)"/><rect x="1025.1" y="543.3" width="2.9" height="6.4" fill="#dedede" stroke="#b0b0b0" stroke-width="0.6" transform="rotate(-35.5 1026.5 546.5)"/><rect x="1035.3" y="497.1" width="3.6" height="5.6" fill="#dedede" stroke="#b0b0b0" stroke-width="0.6" transform="rotate(-36.4 1037.1 499.9)"/><rect x="1020.3" y="492.2" width="3.2" height="4" fill="#dedede" stroke="#b0b0b0" stroke-width="0.6" transform="rotate(-45.1 1021.9 494.2)"/><rect x="1051.3" y="523.3" width="2.6" height="4.5" fill="#dedede" stroke="#b0b0b0" stroke-width="0.6" transform="rotate(-31.7 1052.6 525.6)"/><rect x="1084.7" y="514.8" width="3.4" height="3.6" fill="#dedede" stroke="#b0b0b0" stroke-width="0.6" transform="rotate(-35.4 1086.4 516.6)"/><rect x="1045.3" y="457.5" width="3.3" height="5.1" fill="#dedede" stroke="#b0b0b0" stroke-width="0.6" transform="rotate(-36.7 1047 460)"/><rect x="1089" y="519.1" width="2.3" height="6.6" fill="#dedede" stroke="#b0b0b0" stroke-width="0.6" transform="rotate(-37.9 1090.1 522.4)"/><rect x="1080.4" y="551.2" width="3.7" height="7.8" fill="#dedede" stroke="#b0b0b0" stroke-width="0.6" transform="rotate(-40.8 1082.2 555.1)"/><rect x="1068.4" y="539.5" width="2.2" height="6.3" fill="#dedede" stroke="#b0b0b0" stroke-width="0.6" transform="rotate(-37.8 1069.5 542.7)"/><rect x="1082.4" y="516.5" width="2.9" height="3.5" fill="#dedede" stroke="#b0b0b0" stroke-width="0.6" transform="rotate(-30.3 1083.8 518.3)"/><rect x="1077.7" y="551.7" width="3.3" height="7.3" fill="#dedede" stroke="#b0b0b0" stroke-width="0.6" transform="rotate(-40.8 1079.3 555.4)"/><rect x="1020.8" y="484.1" width="3.8" height="5.3" fill="#dedede" stroke="#b0b0b0" stroke-width="0.6" transform="rotate(-43 1022.7 486.8)"/><rect x="1040.3" y="522.3" width="4" height="5.3" fill="#dedede" stroke="#b0b0b0" stroke-width="0.6" transform="rotate(-48.1 1042.3 525)"/><rect x="1029.4" y="512.6" width="2.7" height="5.3" fill="#dedede" stroke="#b0b0b0" stroke-width="0.6" transform="rotate(-41.5 1030.7 515.3)"/><rect x="1092.7" y="470.5" width="3.6" height="5" fill="#dedede" stroke="#b0b0b0" stroke-width="0.6" transform="rotate(-39.4 1094.5 473.1)"/><rect x="1042.7" y="545.3" width="2.6" height="3.6" fill="#dedede" stroke="#b0b0b0" stroke-width="0.6" transform="rotate(-44.2 1044 547.1)"/><rect x="1039.9" y="505.7" width="3.1" height="5.9" fill="#dedede" stroke="#b0b0b0" stroke-width="0.6" transform="rotate(-48.7 1041.5 508.6)"/><rect x="1081.3" y="531" width="2.8" height="4.8" fill="#dedede" stroke="#b0b0b0" stroke-width="0.6" transform="rotate(-36 1082.7 533.4)"/><rect x="1075.4" y="455.7" width="3.3" height="7.4" fill="#dedede" stroke="#b0b0b0" stroke-width="0.6" transform="rotate(-47.4 1077 459.4)"/><rect x="1093.7" y="529.6" width="3.5" height="7.3" fill="#dedede" stroke="#b0b0b0" stroke-width="0.6" transform="rotate(-46.8 1095.4 533.3)"/><rect x="1065.2" y="463.9" width="3.2" height="6.3" fill="#dedede" stroke="#b0b0b0" stroke-width="0.6" transform="rotate(-30.6 1066.8 467.1)"/><rect x="1093.5" y="490.5" width="3.1" height="4.7" fill="#dedede" stroke="#b0b0b0" stroke-width="0.6" transform="rotate(-48.6 1095 492.9)"/><rect x="1036.3" y="481.9" width="3.4" height="4.7" fill="#dedede" stroke="#b0b0b0" stroke-width="0.6" transform="rotate(-37.9 1038 484.2)"/><rect x="1088.1" y="552.6" width="2.8" height="6.5" fill="#dedede" stroke="#b0b0b0" stroke-width="0.6" transform="rotate(-32.2 1089.5 555.8)"/><rect x="1081.1" y="459.5" width="3.9" height="4.6" fill="#dedede" stroke="#b0b0b0" stroke-width="0.6" transform="rotate(-38.4 1083 461.8)"/><rect x="1091.8" y="463.5" width="2.3" height="3.9" fill="#dedede" stroke="#b0b0b0" stroke-width="0.6" transform="rotate(-35.7 1093 465.4)"/><rect x="1079.4" y="456.5" width="3.1" height="3.5" fill="#dedede" stroke="#b0b0b0" stroke-width="0.6" transform="rotate(-32.3 1080.9 458.2)"/><rect x="1053.2" y="452.9" width="3.7" height="5.7" fill="#dedede" stroke="#b0b0b0" stroke-width="0.6" transform="rotate(-36 1055 455.8)"/><rect x="1090.1" y="520.6" width="2.3" height="5.9" fill="#dedede" stroke="#b0b0b0" stroke-width="0.6" transform="rotate(-47.7 1091.2 523.5)"/><rect x="1044.5" y="529.7" width="3.5" height="6.7" fill="#dedede" stroke="#b0b0b0" stroke-width="0.6" transform="rotate(-38.4 1046.3 533.1)"/><rect x="1040.7" y="479.9" width="2.9" height="5.9" fill="#dedede" stroke="#b0b0b0" stroke-width="0.6" transform="rotate(-32.2 1042.2 482.8)"/><rect x="1047.6" y="469.6" width="2.8" height="7" fill="#dedede" stroke="#b0b0b0" stroke-width="0.6" transform="rotate(-50 1049 473.1)"/><rect x="1092.7" y="510.7" width="3.9" height="6.9" fill="#dedede" stroke="#b0b0b0" stroke-width="0.6" transform="rotate(-48.8 1094.7 514.2)"/><rect x="1066.2" y="516.1" width="2.5" height="3.7" fill="#dedede" stroke="#b0b0b0" stroke-width="0.6" transform="rotate(-30.9 1067.5 518)"/><rect x="1036.6" y="465.5" width="2.7" height="4.5" fill="#dedede" stroke="#b0b0b0" stroke-width="0.6" transform="rotate(-49.4 1038 467.8)"/><rect x="1047.6" y="549.5" width="3.1" height="5.4" fill="#dedede" stroke="#b0b0b0" stroke-width="0.6" transform="rotate(-43.7 1049.1 552.2)"/><rect x="1027.6" y="453.1" width="3.7" height="5.9" fill="#dedede" stroke="#b0b0b0" stroke-width="0.6" transform="rotate(-37.8 1029.5 456)"/><rect x="1072.1" y="474.7" width="3.8" height="3.7" fill="#dedede" stroke="#b0b0b0" stroke-width="0.6" transform="rotate(-36.3 1074 476.6)"/><rect x="1038.2" y="466.1" width="3.7" height="6.8" fill="#dedede" stroke="#b0b0b0" stroke-width="0.6" transform="rotate(-30.7 1040 469.5)"/><rect x="1060.1" y="455.3" width="3.8" height="7.7" fill="#dedede" stroke="#b0b0b0" stroke-width="0.6" transform="rotate(-42.6 1062 459.1)"/><rect x="1041.9" y="454.5" width="3.8" height="3.8" fill="#dedede" stroke="#b0b0b0" stroke-width="0.6" transform="rotate(-32.4 1043.8 456.4)"/><rect x="1046.8" y="471.6" width="2.8" height="3.9" fill="#dedede" stroke="#b0b0b0" stroke-width="0.6" transform="rotate(-41.3 1048.2 473.6)"/><rect x="1027.2" y="505.3" width="3.3" height="6.5" fill="#dedede" stroke="#b0b0b0" stroke-width="0.6" transform="rotate(-48.9 1028.9 508.6)"/><rect x="1039.7" y="534.6" width="3" height="7.1" fill="#dedede" stroke="#b0b0b0" stroke-width="0.6" transform="rotate(-45.1 1041.2 538.2)"/><rect x="1020.3" y="507" width="2.9" height="7.1" fill="#dedede" stroke="#b0b0b0" stroke-width="0.6" transform="rotate(-39.3 1021.7 510.6)"/><rect x="1071.7" y="472.9" width="3.5" height="7.8" fill="#dedede" stroke="#b0b0b0" stroke-width="0.6" transform="rotate(-46 1073.5 476.7)"/><rect x="1061.5" y="459.4" width="3.1" height="4.8" fill="#dedede" stroke="#b0b0b0" stroke-width="0.6" transform="rotate(-36.1 1063 461.8)"/><rect x="1029.1" y="549.4" width="2.9" height="3.7" fill="#dedede" stroke="#b0b0b0" stroke-width="0.6" transform="rotate(-33 1030.5 551.2)"/><rect x="1093.1" y="467.8" width="3.8" height="5.3" fill="#dedede" stroke="#b0b0b0" stroke-width="0.6" transform="rotate(-35.5 1094.9 470.4)"/><rect x="1020.3" y="463.3" width="3.9" height="4.4" fill="#dedede" stroke="#b0b0b0" stroke-width="0.6" transform="rotate(-48.3 1022.3 465.6)"/><rect x="1055.4" y="461.9" width="3.6" height="6.2" fill="#dedede" stroke="#b0b0b0" stroke-width="0.6" transform="rotate(-37.2 1057.2 465)"/><rect x="1064.9" y="518.1" width="2.4" height="4.1" fill="#dedede" stroke="#b0b0b0" stroke-width="0.6" transform="rotate(-34 1066.1 520.2)"/><rect x="954.1" y="462.4" width="3.7" height="4.1" fill="#dedede" stroke="#b0b0b0" stroke-width="0.6" transform="rotate(-40.2 955.9 464.4)"/><rect x="972.5" y="516.8" width="2.3" height="7.4" fill="#dedede" stroke="#b0b0b0" stroke-width="0.6" transform="rotate(-40.2 973.7 520.5)"/><rect x="978.3" y="516.7" width="3.8" height="7.3" fill="#dedede" stroke="#b0b0b0" stroke-width="0.6" transform="rotate(-45.7 980.2 520.3)"/><rect x="976.1" y="490.8" width="2.8" height="3.8" fill="#dedede" stroke="#b0b0b0" stroke-width="0.6" transform="rotate(-30.3 977.5 492.7)"/><rect x="981" y="531.9" width="2.7" height="5.4" fill="#dedede" stroke="#b0b0b0" stroke-width="0.6" transform="rotate(-34.9 982.3 534.6)"/><rect x="952.6" y="500.8" width="3.8" height="7.7" fill="#dedede" stroke="#b0b0b0" stroke-width="0.6" transform="rotate(-48.7 954.4 504.6)"/><rect x="963.6" y="462" width="3.4" height="7.8" fill="#dedede" stroke="#b0b0b0" stroke-width="0.6" transform="rotate(-38.6 965.3 465.9)"/><rect x="943.8" y="485.2" width="2.3" height="5.6" fill="#dedede" stroke="#b0b0b0" stroke-width="0.6" transform="rotate(-33.6 945 488)"/><rect x="961.3" y="486.5" width="3.5" height="7.3" fill="#dedede" stroke="#b0b0b0" stroke-width="0.6" transform="rotate(-48.9 963 490.1)"/><rect x="958.9" y="462.2" width="3.6" height="6.1" fill="#dedede" stroke="#b0b0b0" stroke-width="0.6" transform="rotate(-40.8 960.7 465.2)"/><rect x="943.8" y="486.5" width="2.3" height="4" fill="#dedede" stroke="#b0b0b0" stroke-width="0.6" transform="rotate(-47.3 944.9 488.5)"/><rect x="980.1" y="496.4" width="3.7" height="6.2" fill="#dedede" stroke="#b0b0b0" stroke-width="0.6" transform="rotate(-46.8 982 499.5)"/><rect x="967.7" y="503.5" width="2.7" height="7.3" fill="#dedede" stroke="#b0b0b0" stroke-width="0.6" transform="rotate(-37.3 969 507.1)"/><rect x="960.6" y="522.3" width="2.3" height="4.4" fill="#dedede" stroke="#b0b0b0" stroke-width="0.6" transform="rotate(-31.1 961.7 524.5)"/><rect x="942.2" y="497.7" width="3.3" height="4.7" fill="#dedede" stroke="#b0b0b0" stroke-width="0.6" transform="rotate(-41.8 943.8 500)"/><rect x="949.4" y="451.4" width="3.9" height="4.4" fill="#dedede" stroke="#b0b0b0" stroke-width="0.6" transform="rotate(-49.4 951.4 453.6)"/><rect x="947.1" y="451.3" width="3.7" height="7.4" fill="#dedede" stroke="#b0b0b0" stroke-width="0.6" transform="rotate(-38.5 949 455)"/><rect x="983.2" y="512.6" width="2.6" height="6.3" fill="#dedede" stroke="#b0b0b0" stroke-width="0.6" transform="rotate(-44.4 984.5 515.7)"/><rect x="975.5" y="472" width="3.3" height="4.8" fill="#dedede" stroke="#b0b0b0" stroke-width="0.6" transform="rotate(-32.6 977.1 474.4)"/><rect x="956.1" y="528.7" width="3.4" height="7.5" fill="#dedede" stroke="#b0b0b0" stroke-width="0.6" transform="rotate(-38.4 957.8 532.5)"/><rect x="954.7" y="459.5" width="2.7" height="6.4" fill="#dedede" stroke="#b0b0b0" stroke-width="0.6" transform="rotate(-49.2 956 462.7)"/><rect x="944.7" y="516.3" width="3.3" height="4.6" fill="#dedede" stroke="#b0b0b0" stroke-width="0.6" transform="rotate(-47.2 946.3 518.6)"/><rect x="956.9" y="529.5" width="3.6" height="4.7" fill="#dedede" stroke="#b0b0b0" stroke-width="0.6" transform="rotate(-33.4 958.7 531.9)"/><rect x="967.9" y="526.8" width="3.7" height="7.9" fill="#dedede" stroke="#b0b0b0" stroke-width="0.6" transform="rotate(-37.5 969.8 530.7)"/><rect x="957.7" y="498.5" width="3.2" height="5" fill="#dedede" stroke="#b0b0b0" stroke-width="0.6" transform="rotate(-45.1 959.4 500.9)"/><rect x="973.6" y="468.6" width="3.4" height="7.4" fill="#dedede" stroke="#b0b0b0" stroke-width="0.6" transform="rotate(-49.4 975.3 472.3)"/><rect x="979.9" y="496.2" width="2.9" height="5.5" fill="#dedede" stroke="#b0b0b0" stroke-width="0.6" transform="rotate(-39.6 981.3 499)"/><rect x="971.7" y="496.9" width="3.3" height="6" fill="#dedede" stroke="#b0b0b0" stroke-width="0.6" transform="rotate(-38.9 973.3 499.8)"/><rect x="960.8" y="526.2" width="2.6" height="4.1" fill="#dedede" stroke="#b0b0b0" stroke-width="0.6" transform="rotate(-31.1 962.1 528.2)"/><rect x="964.5" y="488.1" width="2.7" height="6.1" fill="#dedede" stroke="#b0b0b0" stroke-width="0.6" transform="rotate(-46.4 965.9 491.1)"/><rect x="950.6" y="474" width="3.6" height="3.9" fill="#dedede" stroke="#b0b0b0" stroke-width="0.6" transform="rotate(-45.9 952.4 475.9)"/><rect x="964.8" y="464.8" width="2.5" height="3.9" fill="#dedede" stroke="#b0b0b0" stroke-width="0.6" transform="rotate(-37.1 966.1 466.7)"/><rect x="962.4" y="501.3" width="3.3" height="6.3" fill="#dedede" stroke="#b0b0b0" stroke-width="0.6" transform="rotate(-44.1 964.1 504.4)"/><rect x="950.1" y="511.2" width="3" height="6.6" fill="#dedede" stroke="#b0b0b0" stroke-width="0.6" transform="rotate(-38.3 951.6 514.5)"/><rect x="965.3" y="514.3" width="4" height="6.3" fill="#dedede" stroke="#b0b0b0" stroke-width="0.6" transform="rotate(-44.2 967.2 517.5)"/><polyline points="949,696.2 1076.4,769.1" fill="none" stroke="#9c9c9c" stroke-width="0.9" stroke-dasharray="4 2"/><polyline points="943.8,652 951.6,672.8 949,693.6 941.2,745.6 936,771.7 930.8,810.9" fill="none" stroke="#8f8f8f" stroke-width="0.8"/><polyline points="1011.4,607.8 1014,631.2 1019.2,652" fill="none" stroke="#9c9c9c" stroke-width="0.9" stroke-dasharray="4 2"/><polyline points="1015.3,607.8 1017.9,631.2 1022.4,652" fill="none" stroke="#9c9c9c" stroke-width="0.9" stroke-dasharray="4 2"/><polyline points="946.4,652 967.2,600" fill="none" stroke="#8f8f8f" stroke-width="0.8"/><polyline points="951.6,672.8 964.6,667.6 993.2,670.2 1034.8,691 1076.4,714.4" fill="none" stroke="#8f8f8f" stroke-width="0.8"/><polyline points="995.8,636.4 1014,652 1019.2,665 988,714.4" fill="none" stroke="#8f8f8f" stroke-width="0.8"/><polyline points="1021.8,649.4 1037.4,615.6" fill="none" stroke="#8f8f8f" stroke-width="0.8"/><polyline points="1021.8,649.4 1055.6,652 1092.1,709.2 1110,753.4" fill="none" stroke="#8f8f8f" stroke-width="0.8"/><polyline points="1050.4,758.6 1089.5,709.2 1110,704" fill="none" stroke="#8f8f8f" stroke-width="0.8"/><polyline points="933.4,696.2 946.4,698.8" fill="none" stroke="#8f8f8f" stroke-width="0.7"/><polyline points="943.8,722.2 1003.6,758.6" fill="none" stroke="#8f8f8f" stroke-width="0.7"/><polyline points="941.2,745.6 988,787.3" fill="none" stroke="#8f8f8f" stroke-width="0.7"/><polyline points="1008.8,745.6 975,810.9" fill="none" stroke="#8f8f8f" stroke-width="0.8"/><polyline points="1040,810.9 1110,756" fill="none" stroke="#8f8f8f" stroke-width="0.9"/><polyline points="1032.2,810.9 1110,750.8" fill="none" stroke="#8f8f8f" stroke-width="0.9"/><polyline points="933.4,696.2 925.6,756 910,766.4" fill="none" stroke="#8f8f8f" stroke-width="0.7"/><polyline points="1081.7,776.9 1092.1,810.9" fill="none" stroke="#8f8f8f" stroke-width="0.8"/><polyline points="910,761.2 925.6,756" fill="none" stroke="#8f8f8f" stroke-width="0.7"/><rect x="1034.8" y="706.6" width="26" height="7.8" fill="#dedede" stroke="#b0b0b0" stroke-width="0.6" transform="rotate(45 1047.8 710.5)"/><rect x="1042.6" y="704" width="7.8" height="20.8" fill="#dedede" stroke="#b0b0b0" stroke-width="0.6" transform="rotate(45 1046.5 714.4)"/><rect x="969.8" y="658.5" width="18.2" height="7.8" fill="#dedede" stroke="#b0b0b0" stroke-width="0.6" transform="rotate(20 978.9 662.4)"/><rect x="943.8" y="631.2" width="10.4" height="28.6" fill="#dedede" stroke="#b0b0b0" stroke-width="0.6" transform="rotate(30 949 645.5)"/><rect x="950.3" y="609.1" width="9.1" height="7.8" fill="#dedede" stroke="#b0b0b0" stroke-width="0.6"/><rect x="982.8" y="678" width="7.8" height="10.4" fill="#dedede" stroke="#b0b0b0" stroke-width="0.6"/><rect x="990.6" y="626" width="10.4" height="7.8" fill="#dedede" stroke="#b0b0b0" stroke-width="0.6" transform="rotate(20 995.8 629.9)"/><rect x="1053" y="776.9" width="10.4" height="7.8" fill="#dedede" stroke="#b0b0b0" stroke-width="0.6"/><rect x="1034.8" y="784.7" width="7.8" height="10.4" fill="#dedede" stroke="#b0b0b0" stroke-width="0.6"/><rect x="1040" y="792.5" width="7.8" height="10.4" fill="#dedede" stroke="#b0b0b0" stroke-width="0.6"/><rect x="978" y="750.8" width="2.9" height="5.4" fill="#dedede" stroke="#b0b0b0" stroke-width="0.6" transform="rotate(32.8 979.4 753.5)"/><rect x="960.2" y="771.7" width="3.9" height="7.9" fill="#dedede" stroke="#b0b0b0" stroke-width="0.6" transform="rotate(39.3 962.2 775.7)"/><rect x="926.3" y="740.9" width="2.9" height="3.9" fill="#dedede" stroke="#b0b0b0" stroke-width="0.6" transform="rotate(40.8 927.7 742.9)"/><rect x="956.3" y="751.6" width="3.3" height="7" fill="#dedede" stroke="#b0b0b0" stroke-width="0.6" transform="rotate(39.1 957.9 755.1)"/><rect x="972.8" y="737.1" width="3.3" height="6" fill="#dedede" stroke="#b0b0b0" stroke-width="0.6" transform="rotate(31.4 974.5 740)"/><rect x="955.6" y="770.8" width="3.4" height="6.7" fill="#dedede" stroke="#b0b0b0" stroke-width="0.6" transform="rotate(37.2 957.3 774.2)"/><rect x="951" y="703.9" width="2.5" height="5.8" fill="#dedede" stroke="#b0b0b0" stroke-width="0.6" transform="rotate(43.3 952.2 706.8)"/><rect x="937.3" y="733.1" width="2.5" height="6.7" fill="#dedede" stroke="#b0b0b0" stroke-width="0.6" transform="rotate(45 938.6 736.4)"/><rect x="925.4" y="770.8" width="2.4" height="7.4" fill="#dedede" stroke="#b0b0b0" stroke-width="0.6" transform="rotate(43.6 926.6 774.5)"/><rect x="958.1" y="703.7" width="3" height="6.4" fill="#dedede" stroke="#b0b0b0" stroke-width="0.6" transform="rotate(35.3 959.6 706.9)"/><rect x="933.2" y="734.5" width="3" height="7.4" fill="#dedede" stroke="#b0b0b0" stroke-width="0.6" transform="rotate(37.1 934.7 738.2)"/><rect x="968" y="716.8" width="3.2" height="7.1" fill="#dedede" stroke="#b0b0b0" stroke-width="0.6" transform="rotate(44.3 969.6 720.4)"/><rect x="964.3" y="764" width="3.3" height="4.7" fill="#dedede" stroke="#b0b0b0" stroke-width="0.6" transform="rotate(30.7 965.9 766.3)"/><rect x="945.6" y="703.4" width="3.4" height="5.7" fill="#dedede" stroke="#b0b0b0" stroke-width="0.6" transform="rotate(33.5 947.3 706.3)"/><rect x="968.3" y="712.9" width="3" height="5.4" fill="#dedede" stroke="#b0b0b0" stroke-width="0.6" transform="rotate(39.3 969.8 715.6)"/><rect x="982.9" y="709.7" width="3.1" height="7.1" fill="#dedede" stroke="#b0b0b0" stroke-width="0.6" transform="rotate(44.7 984.4 713.2)"/><rect x="943.3" y="750.6" width="3.2" height="5" fill="#dedede" stroke="#b0b0b0" stroke-width="0.6" transform="rotate(36.6 944.9 753.1)"/><rect x="986.6" y="712.6" width="3.4" height="4.7" fill="#dedede" stroke="#b0b0b0" stroke-width="0.6" transform="rotate(43.1 988.3 714.9)"/><rect x="966.6" y="734.3" width="3" height="5.3" fill="#dedede" stroke="#b0b0b0" stroke-width="0.6" transform="rotate(38.2 968.1 736.9)"/><rect x="978.3" y="697.6" width="3.2" height="7.8" fill="#dedede" stroke="#b0b0b0" stroke-width="0.6" transform="rotate(44.8 979.9 701.5)"/><rect x="984.6" y="713.8" width="2.2" height="3.7" fill="#dedede" stroke="#b0b0b0" stroke-width="0.6" transform="rotate(30.4 985.7 715.6)"/><rect x="986.2" y="691.7" width="2.5" height="5.7" fill="#dedede" stroke="#b0b0b0" stroke-width="0.6" transform="rotate(32.5 987.4 694.5)"/><rect x="947.9" y="732.4" width="2.2" height="3.7" fill="#dedede" stroke="#b0b0b0" stroke-width="0.6" transform="rotate(44.5 949 734.2)"/><rect x="967.3" y="765.2" width="3.4" height="7.3" fill="#dedede" stroke="#b0b0b0" stroke-width="0.6" transform="rotate(40.1 969 768.9)"/><rect x="959.7" y="699.3" width="2.6" height="5.2" fill="#dedede" stroke="#b0b0b0" stroke-width="0.6" transform="rotate(43.9 961 701.9)"/><rect x="960.4" y="758.9" width="3.1" height="4.4" fill="#dedede" stroke="#b0b0b0" stroke-width="0.6" transform="rotate(34.1 961.9 761.1)"/><rect x="942.3" y="706.1" width="3.3" height="3.9" fill="#dedede" stroke="#b0b0b0" stroke-width="0.6" transform="rotate(37.6 943.9 708.1)"/><rect x="974.3" y="740.1" width="3.4" height="4.5" fill="#dedede" stroke="#b0b0b0" stroke-width="0.6" transform="rotate(41.3 976 742.4)"/><rect x="995.8" y="728.7" width="4" height="5" fill="#dedede" stroke="#b0b0b0" stroke-width="0.6" transform="rotate(37.6 997.7 731.2)"/><rect x="971.8" y="698.9" width="2.5" height="3.9" fill="#dedede" stroke="#b0b0b0" stroke-width="0.6" transform="rotate(30.5 973 700.8)"/><rect x="939.2" y="712.1" width="2.4" height="5.9" fill="#dedede" stroke="#b0b0b0" stroke-width="0.6" transform="rotate(41.5 940.4 715.1)"/><rect x="973.9" y="775.4" width="3" height="4.2" fill="#dedede" stroke="#b0b0b0" stroke-width="0.6" transform="rotate(39.3 975.4 777.5)"/><rect x="975.6" y="760.5" width="3" height="5.9" fill="#dedede" stroke="#b0b0b0" stroke-width="0.6" transform="rotate(41.8 977.1 763.4)"/><rect x="932.5" y="700.6" width="2.6" height="7" fill="#dedede" stroke="#b0b0b0" stroke-width="0.6" transform="rotate(37.6 933.8 704.2)"/><rect x="945.6" y="769.2" width="2.5" height="6" fill="#dedede" stroke="#b0b0b0" stroke-width="0.6" transform="rotate(36.5 946.8 772.2)"/><rect x="957.3" y="753.2" width="3.7" height="7.8" fill="#dedede" stroke="#b0b0b0" stroke-width="0.6" transform="rotate(37.4 959.1 757.1)"/><rect x="972.5" y="769.2" width="2.9" height="4.1" fill="#dedede" stroke="#b0b0b0" stroke-width="0.6" transform="rotate(40.3 973.9 771.2)"/><rect x="950.7" y="722.9" width="2.8" height="5.9" fill="#dedede" stroke="#b0b0b0" stroke-width="0.6" transform="rotate(41.6 952.1 725.9)"/><rect x="962.3" y="702.4" width="2.2" height="5.7" fill="#dedede" stroke="#b0b0b0" stroke-width="0.6" transform="rotate(41 963.4 705.2)"/><rect x="942.9" y="740.6" width="2.7" height="5.3" fill="#dedede" stroke="#b0b0b0" stroke-width="0.6" transform="rotate(36.5 944.3 743.2)"/><rect x="981.1" y="736.6" width="3.4" height="5.4" fill="#dedede" stroke="#b0b0b0" stroke-width="0.6" transform="rotate(31.6 982.8 739.3)"/><rect x="946.4" y="770.9" width="3.1" height="4.6" fill="#dedede" stroke="#b0b0b0" stroke-width="0.6" transform="rotate(37.2 948 773.2)"/><rect x="970" y="700.1" width="3.5" height="4.2" fill="#dedede" stroke="#b0b0b0" stroke-width="0.6" transform="rotate(33.3 971.8 702.2)"/><rect x="990.9" y="773.3" width="2.4" height="3.6" fill="#dedede" stroke="#b0b0b0" stroke-width="0.6" transform="rotate(35.5 992.1 775.1)"/><rect x="973.2" y="693.8" width="2.2" height="6.8" fill="#dedede" stroke="#b0b0b0" stroke-width="0.6" transform="rotate(41.5 974.4 697.2)"/><rect x="981.6" y="755.6" width="2.3" height="4.5" fill="#dedede" stroke="#b0b0b0" stroke-width="0.6" transform="rotate(33.5 982.8 757.8)"/><rect x="968.4" y="733.5" width="3.1" height="7.1" fill="#dedede" stroke="#b0b0b0" stroke-width="0.6" transform="rotate(32.8 969.9 737.1)"/><rect x="963.1" y="741.1" width="2.3" height="4.3" fill="#dedede" stroke="#b0b0b0" stroke-width="0.6" transform="rotate(36.9 964.3 743.2)"/><rect x="971.3" y="724.5" width="3.3" height="6" fill="#dedede" stroke="#b0b0b0" stroke-width="0.6" transform="rotate(42.6 972.9 727.5)"/><rect x="995.8" y="758.3" width="3.2" height="7.5" fill="#dedede" stroke="#b0b0b0" stroke-width="0.6" transform="rotate(41.6 997.4 762.1)"/><rect x="942.7" y="698.6" width="3.4" height="6" fill="#dedede" stroke="#b0b0b0" stroke-width="0.6" transform="rotate(39.9 944.4 701.6)"/><rect x="964.7" y="740.8" width="2.6" height="6.3" fill="#dedede" stroke="#b0b0b0" stroke-width="0.6" transform="rotate(36.4 966.1 744)"/><rect x="975.4" y="765.4" width="2.6" height="4.9" fill="#dedede" stroke="#b0b0b0" stroke-width="0.6" transform="rotate(34.8 976.7 767.8)"/><rect x="956" y="743.4" width="2.8" height="5.5" fill="#dedede" stroke="#b0b0b0" stroke-width="0.6" transform="rotate(41.3 957.4 746.2)"/><rect x="976.8" y="770.5" width="3.6" height="7.1" fill="#dedede" stroke="#b0b0b0" stroke-width="0.6" transform="rotate(36.7 978.6 774.1)"/><rect x="947.6" y="759.3" width="3" height="6.4" fill="#dedede" stroke="#b0b0b0" stroke-width="0.6" transform="rotate(36.3 949.1 762.5)"/><rect x="951.1" y="690.9" width="3.2" height="5.8" fill="#dedede" stroke="#b0b0b0" stroke-width="0.6" transform="rotate(34.2 952.7 693.8)"/><rect x="934.9" y="764.2" width="3.1" height="7.8" fill="#dedede" stroke="#b0b0b0" stroke-width="0.6" transform="rotate(44.6 936.4 768.1)"/><rect x="926.4" y="765.1" width="3.6" height="4.8" fill="#dedede" stroke="#b0b0b0" stroke-width="0.6" transform="rotate(31 928.2 767.4)"/><rect x="973.7" y="757.8" width="2.7" height="7.7" fill="#dedede" stroke="#b0b0b0" stroke-width="0.6" transform="rotate(42.5 975 761.6)"/><rect x="931.8" y="721.9" width="2.5" height="5.8" fill="#dedede" stroke="#b0b0b0" stroke-width="0.6" transform="rotate(37.4 933.1 724.8)"/><rect x="972.5" y="702" width="3.7" height="4.8" fill="#dedede" stroke="#b0b0b0" stroke-width="0.6" transform="rotate(33.8 974.4 704.4)"/><rect x="967.6" y="749.8" width="2.3" height="6.1" fill="#dedede" stroke="#b0b0b0" stroke-width="0.6" transform="rotate(36.3 968.8 752.9)"/><rect x="965.4" y="762.7" width="3.9" height="6.8" fill="#dedede" stroke="#b0b0b0" stroke-width="0.6" transform="rotate(32.7 967.4 766.1)"/><rect x="968.3" y="770.3" width="2.7" height="6" fill="#dedede" stroke="#b0b0b0" stroke-width="0.6" transform="rotate(40.2 969.7 773.3)"/><rect x="959" y="706.9" width="2.3" height="7.7" fill="#dedede" stroke="#b0b0b0" stroke-width="0.6" transform="rotate(41.4 960.1 710.8)"/><rect x="964.5" y="711.1" width="3.3" height="7.3" fill="#dedede" stroke="#b0b0b0" stroke-width="0.6" transform="rotate(37.1 966.2 714.8)"/><rect x="966.8" y="702.7" width="3" height="5.1" fill="#dedede" stroke="#b0b0b0" stroke-width="0.6" transform="rotate(33.8 968.3 705.2)"/><rect x="963.1" y="753.7" width="2.4" height="3.6" fill="#dedede" stroke="#b0b0b0" stroke-width="0.6" transform="rotate(36 964.3 755.5)"/><rect x="971.9" y="714" width="3.8" height="6.2" fill="#dedede" stroke="#b0b0b0" stroke-width="0.6" transform="rotate(43.5 973.8 717.1)"/><rect x="942.6" y="768.7" width="2.8" height="7.3" fill="#dedede" stroke="#b0b0b0" stroke-width="0.6" transform="rotate(40.2 944 772.4)"/><rect x="936.3" y="722.1" width="2.5" height="6.8" fill="#dedede" stroke="#b0b0b0" stroke-width="0.6" transform="rotate(35.7 937.5 725.5)"/><rect x="936.6" y="724" width="2.8" height="5.1" fill="#dedede" stroke="#b0b0b0" stroke-width="0.6" transform="rotate(31.4 938 726.5)"/><rect x="975.8" y="726.3" width="3.6" height="5.1" fill="#dedede" stroke="#b0b0b0" stroke-width="0.6" transform="rotate(44.6 977.6 728.9)"/><rect x="984.9" y="766.1" width="3.8" height="6.7" fill="#dedede" stroke="#b0b0b0" stroke-width="0.6" transform="rotate(44 986.8 769.5)"/><rect x="930" y="720.5" width="2.9" height="6.2" fill="#dedede" stroke="#b0b0b0" stroke-width="0.6" transform="rotate(34.9 931.5 723.6)"/><rect x="979.1" y="696.4" width="3.3" height="3.5" fill="#dedede" stroke="#b0b0b0" stroke-width="0.6" transform="rotate(36.3 980.7 698.2)"/><rect x="970.5" y="702.2" width="3.1" height="7.3" fill="#dedede" stroke="#b0b0b0" stroke-width="0.6" transform="rotate(40 972 705.9)"/><rect x="954.9" y="770" width="2.6" height="6.3" fill="#dedede" stroke="#b0b0b0" stroke-width="0.6" transform="rotate(36.7 956.2 773.2)"/><rect x="994.2" y="719.7" width="2.7" height="4.9" fill="#dedede" stroke="#b0b0b0" stroke-width="0.6" transform="rotate(33.6 995.6 722.1)"/><rect x="992.6" y="696.7" width="3.2" height="6.5" fill="#dedede" stroke="#b0b0b0" stroke-width="0.6" transform="rotate(34.9 994.1 699.9)"/><rect x="974.4" y="746.8" width="3.5" height="5.7" fill="#dedede" stroke="#b0b0b0" stroke-width="0.6" transform="rotate(31.4 976.2 749.7)"/><rect x="947.1" y="705.6" width="2.3" height="4.3" fill="#dedede" stroke="#b0b0b0" stroke-width="0.6" transform="rotate(34.3 948.2 707.8)"/><rect x="963.1" y="755.5" width="2.4" height="3.6" fill="#dedede" stroke="#b0b0b0" stroke-width="0.6" transform="rotate(32.4 964.3 757.3)"/><rect x="930.8" y="701.7" width="2.4" height="6.8" fill="#dedede" stroke="#b0b0b0" stroke-width="0.6" transform="rotate(37.4 932 705)"/><rect x="961.6" y="733.4" width="2.7" height="7" fill="#dedede" stroke="#b0b0b0" stroke-width="0.6" transform="rotate(35.6 963 736.9)"/><rect x="953.3" y="758.5" width="2.2" height="7.2" fill="#dedede" stroke="#b0b0b0" stroke-width="0.6" transform="rotate(31.6 954.5 762.1)"/><rect x="936.1" y="696.2" width="3" height="5.9" fill="#dedede" stroke="#b0b0b0" stroke-width="0.6" transform="rotate(44 937.6 699.2)"/><rect x="963.7" y="750.1" width="3.9" height="8" fill="#dedede" stroke="#b0b0b0" stroke-width="0.6" transform="rotate(39 965.7 754.1)"/><rect x="971.2" y="728" width="3.1" height="4.3" fill="#dedede" stroke="#b0b0b0" stroke-width="0.6" transform="rotate(40.2 972.7 730.1)"/><rect x="1019.7" y="792.9" width="2.3" height="4.8" fill="#dedede" stroke="#b0b0b0" stroke-width="0.6" transform="rotate(37.2 1020.8 795.3)"/><rect x="1054.4" y="765.7" width="2.7" height="7" fill="#dedede" stroke="#b0b0b0" stroke-width="0.6" transform="rotate(35.9 1055.8 769.2)"/><rect x="1013.2" y="805" width="2.2" height="3.8" fill="#dedede" stroke="#b0b0b0" stroke-width="0.6" transform="rotate(43.2 1014.3 806.9)"/><rect x="1055.8" y="786.3" width="3.2" height="7.7" fill="#dedede" stroke="#b0b0b0" stroke-width="0.6" transform="rotate(31.6 1057.3 790.2)"/><rect x="1044.8" y="785.7" width="3" height="6.2" fill="#dedede" stroke="#b0b0b0" stroke-width="0.6" transform="rotate(35.1 1046.3 788.9)"/><rect x="1051.4" y="774.2" width="3.4" height="4.4" fill="#dedede" stroke="#b0b0b0" stroke-width="0.6" transform="rotate(37.9 1053.1 776.4)"/><rect x="1071.3" y="759.4" width="2.3" height="4.6" fill="#dedede" stroke="#b0b0b0" stroke-width="0.6" transform="rotate(37.1 1072.5 761.7)"/><rect x="1071.7" y="792.2" width="4" height="6.2" fill="#dedede" stroke="#b0b0b0" stroke-width="0.6" transform="rotate(44.5 1073.7 795.3)"/><rect x="1074.2" y="751.4" width="2.9" height="5.3" fill="#dedede" stroke="#b0b0b0" stroke-width="0.6" transform="rotate(37 1075.7 754.1)"/><rect x="1072.5" y="797.4" width="2.7" height="6" fill="#dedede" stroke="#b0b0b0" stroke-width="0.6" transform="rotate(37.6 1073.8 800.4)"/><rect x="1065.8" y="803.1" width="3.4" height="3.9" fill="#dedede" stroke="#b0b0b0" stroke-width="0.6" transform="rotate(39.2 1067.5 805.1)"/><rect x="1045" y="759.9" width="3.1" height="5.8" fill="#dedede" stroke="#b0b0b0" stroke-width="0.6" transform="rotate(33 1046.5 762.8)"/><rect x="1013.2" y="783.9" width="3.6" height="5.8" fill="#dedede" stroke="#b0b0b0" stroke-width="0.6" transform="rotate(42.5 1015.1 786.8)"/><rect x="1090.6" y="760.3" width="3.4" height="4.3" fill="#dedede" stroke="#b0b0b0" stroke-width="0.6" transform="rotate(37.6 1092.2 762.5)"/><rect x="1032.7" y="760.6" width="3" height="4.2" fill="#dedede" stroke="#b0b0b0" stroke-width="0.6" transform="rotate(32.5 1034.2 762.7)"/><rect x="1067.1" y="763.7" width="2.3" height="6.4" fill="#dedede" stroke="#b0b0b0" stroke-width="0.6" transform="rotate(44.3 1068.3 766.9)"/><rect x="1088.9" y="786" width="3" height="5.6" fill="#dedede" stroke="#b0b0b0" stroke-width="0.6" transform="rotate(37 1090.3 788.8)"/><rect x="1036" y="753.8" width="3.5" height="6.8" fill="#dedede" stroke="#b0b0b0" stroke-width="0.6" transform="rotate(41 1037.8 757.2)"/><rect x="1019.9" y="790.8" width="3.5" height="6.2" fill="#dedede" stroke="#b0b0b0" stroke-width="0.6" transform="rotate(32.6 1021.7 793.9)"/><rect x="1063.7" y="754.1" width="3.6" height="6.3" fill="#dedede" stroke="#b0b0b0" stroke-width="0.6" transform="rotate(35.5 1065.5 757.3)"/><rect x="1013.3" y="773.6" width="3.5" height="4" fill="#dedede" stroke="#b0b0b0" stroke-width="0.6" transform="rotate(42.8 1015 775.6)"/><rect x="1016.9" y="797.3" width="3.3" height="4.5" fill="#dedede" stroke="#b0b0b0" stroke-width="0.6" transform="rotate(42.6 1018.6 799.5)"/><rect x="1073.5" y="750.6" width="3.5" height="4.4" fill="#dedede" stroke="#b0b0b0" stroke-width="0.6" transform="rotate(32.6 1075.2 752.8)"/><rect x="1013" y="758.6" width="2.8" height="7.8" fill="#dedede" stroke="#b0b0b0" stroke-width="0.6" transform="rotate(41 1014.4 762.5)"/><rect x="1016.4" y="798.1" width="3.6" height="4.7" fill="#dedede" stroke="#b0b0b0" stroke-width="0.6" transform="rotate(44.6 1018.2 800.4)"/><rect x="1017.2" y="790.7" width="3.8" height="6" fill="#dedede" stroke="#b0b0b0" stroke-width="0.6" transform="rotate(39.7 1019.1 793.7)"/><rect x="1052.4" y="802.8" width="3.7" height="6.9" fill="#dedede" stroke="#b0b0b0" stroke-width="0.6" transform="rotate(36.9 1054.2 806.3)"/><rect x="1077" y="782.1" width="3" height="6.4" fill="#dedede" stroke="#b0b0b0" stroke-width="0.6" transform="rotate(44.1 1078.5 785.3)"/><rect x="1084.9" y="768.5" width="2.7" height="7.5" fill="#dedede" stroke="#b0b0b0" stroke-width="0.6" transform="rotate(30.4 1086.3 772.3)"/><rect x="1091.3" y="780.5" width="3.3" height="6.3" fill="#dedede" stroke="#b0b0b0" stroke-width="0.6" transform="rotate(40.9 1093 783.7)"/><rect x="1066.3" y="774.9" width="3.6" height="4.3" fill="#dedede" stroke="#b0b0b0" stroke-width="0.6" transform="rotate(33.2 1068.1 777)"/><rect x="1072.7" y="780.8" width="2.7" height="5.1" fill="#dedede" stroke="#b0b0b0" stroke-width="0.6" transform="rotate(34.8 1074 783.4)"/><rect x="1074.6" y="795.1" width="2.3" height="7" fill="#dedede" stroke="#b0b0b0" stroke-width="0.6" transform="rotate(41.8 1075.8 798.6)"/><rect x="1049.6" y="766.7" width="2.3" height="4.8" fill="#dedede" stroke="#b0b0b0" stroke-width="0.6" transform="rotate(42.4 1050.8 769.1)"/><rect x="1048.5" y="752.9" width="2.6" height="3.6" fill="#dedede" stroke="#b0b0b0" stroke-width="0.6" transform="rotate(30.4 1049.8 754.7)"/><rect x="1055.9" y="753.9" width="3.3" height="6.2" fill="#dedede" stroke="#b0b0b0" stroke-width="0.6" transform="rotate(38.4 1057.6 757)"/><rect x="1028.9" y="758.7" width="3.1" height="4.9" fill="#dedede" stroke="#b0b0b0" stroke-width="0.6" transform="rotate(37.2 1030.5 761.2)"/><rect x="1067.4" y="765.1" width="2.9" height="6.1" fill="#dedede" stroke="#b0b0b0" stroke-width="0.6" transform="rotate(39.1 1068.8 768.2)"/><rect x="1027.4" y="782.2" width="2.7" height="6.9" fill="#dedede" stroke="#b0b0b0" stroke-width="0.6" transform="rotate(41 1028.7 785.6)"/><rect x="1086.9" y="804.3" width="3.6" height="5.9" fill="#dedede" stroke="#b0b0b0" stroke-width="0.6" transform="rotate(41.9 1088.8 807.3)"/><rect x="1063.3" y="757.2" width="2.8" height="4.7" fill="#dedede" stroke="#b0b0b0" stroke-width="0.6" transform="rotate(32.7 1064.8 759.6)"/><rect x="1043.2" y="800.3" width="2.4" height="6.4" fill="#dedede" stroke="#b0b0b0" stroke-width="0.6" transform="rotate(42.1 1044.3 803.5)"/><rect x="1037.2" y="752.9" width="3.2" height="5" fill="#dedede" stroke="#b0b0b0" stroke-width="0.6" transform="rotate(31.7 1038.8 755.4)"/><rect x="1010.7" y="805" width="3.8" height="4.8" fill="#dedede" stroke="#b0b0b0" stroke-width="0.6" transform="rotate(35.7 1012.6 807.5)"/><rect x="1091.7" y="754.5" width="3.6" height="5.5" fill="#dedede" stroke="#b0b0b0" stroke-width="0.6" transform="rotate(37.1 1093.5 757.2)"/><rect x="1087.6" y="769.4" width="3.4" height="3.6" fill="#dedede" stroke="#b0b0b0" stroke-width="0.6" transform="rotate(40.2 1089.3 771.2)"/><rect x="1017.4" y="795.1" width="2.3" height="3.9" fill="#dedede" stroke="#b0b0b0" stroke-width="0.6" transform="rotate(44.1 1018.6 797)"/><rect x="1017.7" y="792.8" width="3.8" height="5.9" fill="#dedede" stroke="#b0b0b0" stroke-width="0.6" transform="rotate(37.6 1019.6 795.8)"/><rect x="1057.8" y="759.3" width="3.6" height="6.4" fill="#dedede" stroke="#b0b0b0" stroke-width="0.6" transform="rotate(32.1 1059.6 762.5)"/><rect x="1034.7" y="803" width="2.3" height="5.4" fill="#dedede" stroke="#b0b0b0" stroke-width="0.6" transform="rotate(30.7 1035.9 805.7)"/><rect x="923.8" y="672.4" width="3.6" height="4" fill="#dedede" stroke="#b0b0b0" stroke-width="0.6" transform="rotate(-16.8 925.5 674.4)"/><rect x="934.7" y="645.4" width="3.3" height="6.1" fill="#dedede" stroke="#b0b0b0" stroke-width="0.6" transform="rotate(-21.6 936.3 648.4)"/><rect x="942" y="666.7" width="3.5" height="5.2" fill="#dedede" stroke="#b0b0b0" stroke-width="0.6" transform="rotate(-25.4 943.7 669.3)"/><rect x="954.5" y="657.9" width="3" height="5.1" fill="#dedede" stroke="#b0b0b0" stroke-width="0.6" transform="rotate(-18.2 956 660.4)"/><rect x="939" y="633.2" width="3" height="3.6" fill="#dedede" stroke="#b0b0b0" stroke-width="0.6" transform="rotate(-21.7 940.5 635)"/><rect x="927.9" y="655.7" width="3.1" height="5.9" fill="#dedede" stroke="#b0b0b0" stroke-width="0.6" transform="rotate(-11.3 929.4 658.7)"/><rect x="950.7" y="650.8" width="3.5" height="3.7" fill="#dedede" stroke="#b0b0b0" stroke-width="0.6" transform="rotate(-19.6 952.5 652.6)"/><rect x="923.5" y="669.8" width="2.7" height="6.3" fill="#dedede" stroke="#b0b0b0" stroke-width="0.6" transform="rotate(-16.7 924.9 673)"/><rect x="936.9" y="674.4" width="2.9" height="3.8" fill="#dedede" stroke="#b0b0b0" stroke-width="0.6" transform="rotate(-18.8 938.4 676.3)"/><rect x="944" y="636.3" width="2.5" height="6" fill="#dedede" stroke="#b0b0b0" stroke-width="0.6" transform="rotate(-16.9 945.2 639.3)"/><rect x="921" y="661.5" width="3.3" height="4.6" fill="#dedede" stroke="#b0b0b0" stroke-width="0.6" transform="rotate(22.1 922.7 663.8)"/><rect x="927.7" y="643.2" width="3.7" height="7.3" fill="#dedede" stroke="#b0b0b0" stroke-width="0.6" transform="rotate(6 929.6 646.9)"/><rect x="940.3" y="640.2" width="3.3" height="6.3" fill="#dedede" stroke="#b0b0b0" stroke-width="0.6" transform="rotate(-15.7 941.9 643.4)"/><rect x="941.9" y="634" width="2.4" height="3.8" fill="#dedede" stroke="#b0b0b0" stroke-width="0.6" transform="rotate(22.6 943.1 635.9)"/><rect x="954.8" y="658.6" width="3.9" height="4.2" fill="#dedede" stroke="#b0b0b0" stroke-width="0.6" transform="rotate(-29.7 956.8 660.7)"/><rect x="931.5" y="633" width="2.9" height="5.1" fill="#dedede" stroke="#b0b0b0" stroke-width="0.6" transform="rotate(-15.4 932.9 635.6)"/><rect x="938.2" y="640.3" width="2.2" height="5.5" fill="#dedede" stroke="#b0b0b0" stroke-width="0.6" transform="rotate(25.5 939.3 643.1)"/><rect x="949" y="645.6" width="3.8" height="5.7" fill="#dedede" stroke="#b0b0b0" stroke-width="0.6" transform="rotate(15.2 950.9 648.5)"/><polyline points="824,600 837,672.8" fill="none" stroke="#8f8f8f" stroke-width="1"/><polyline points="823.6,582.5 909.9,543" fill="none" stroke="#9c9c9c" stroke-width="0.9" stroke-dasharray="4 2"/><polyline points="771.8,483.8 909.9,535.6 920,533" fill="none" stroke="#9c9c9c" stroke-width="0.9" stroke-dasharray="4 2"/><polyline points="784,400 813.7,432 813.7,444.4 794,466.6 771.8,481.4 727.9,490" fill="none" stroke="#8f8f8f" stroke-width="0.8"/><polyline points="813.7,432 828.5,419.7" fill="none" stroke="#9c9c9c" stroke-width="0.9" stroke-dasharray="4 2"/><polyline points="869.5,659.8 877.3,667.6 876,675.4" fill="none" stroke="#8f8f8f" stroke-width="0.8"/><polyline points="761.6,797.7 764.2,792.5 774.6,776.9 816.2,769.1 881.2,762.5 920,758.6" fill="none" stroke="#8f8f8f" stroke-width="0.9"/><polyline points="816.2,753.4 817.5,810.9" fill="none" stroke="#8f8f8f" stroke-width="0.9"/><polyline points="866.9,762.5 872.1,810.9" fill="none" stroke="#8f8f8f" stroke-width="0.8"/><polyline points="800.6,771.7 798,782.1" fill="none" stroke="#8f8f8f" stroke-width="0.7"/><polyline points="891.7,766.4 886.4,782.1 889.1,810.9" fill="none" stroke="#8f8f8f" stroke-width="0.6"/><rect x="839.6" y="644.2" width="3.9" height="2.6" fill="#dedede" stroke="#b0b0b0" stroke-width="0.6"/><rect x="847.4" y="645.5" width="3.1" height="10.4" fill="#dedede" stroke="#b0b0b0" stroke-width="0.6"/><rect x="805.8" y="744.3" width="3.9" height="2.6" fill="#dedede" stroke="#b0b0b0" stroke-width="0.6"/><rect x="809.7" y="756" width="2.6" height="2.6" fill="#dedede" stroke="#b0b0b0" stroke-width="0.6"/><rect x="783.7" y="763.8" width="3.9" height="2.6" fill="#dedede" stroke="#b0b0b0" stroke-width="0.6"/><rect x="795.4" y="765.1" width="3.9" height="2.6" fill="#dedede" stroke="#b0b0b0" stroke-width="0.6"/><rect x="820.1" y="770.4" width="3.1" height="3.9" fill="#dedede" stroke="#b0b0b0" stroke-width="0.6"/><rect x="826.6" y="773" width="3.9" height="6.5" fill="#dedede" stroke="#b0b0b0" stroke-width="0.6"/><rect x="803.2" y="783.4" width="2.6" height="5.2" fill="#dedede" stroke="#b0b0b0" stroke-width="0.6"/><rect x="809.7" y="784.7" width="3.1" height="5.2" fill="#dedede" stroke="#b0b0b0" stroke-width="0.6"/><rect x="768.1" y="797.7" width="3.1" height="3.9" fill="#dedede" stroke="#b0b0b0" stroke-width="0.6"/><rect x="761.6" y="793.8" width="2.6" height="3.1" fill="#dedede" stroke="#b0b0b0" stroke-width="0.6"/><rect x="820.1" y="792.5" width="2.6" height="5.2" fill="#dedede" stroke="#b0b0b0" stroke-width="0.6"/><rect x="822.7" y="800.3" width="2.6" height="5.2" fill="#dedede" stroke="#b0b0b0" stroke-width="0.6"/><rect x="808.4" y="799" width="2.6" height="5.2" fill="#dedede" stroke="#b0b0b0" stroke-width="0.6"/><rect x="805.8" y="806.8" width="3.1" height="3.9" fill="#dedede" stroke="#b0b0b0" stroke-width="0.6"/><rect x="908.3" y="720.1" width="3.6" height="2.7" fill="#dedede" stroke="#b0b0b0" stroke-width="0.6" transform="rotate(5.2 910.1 721.5)"/><rect x="908.1" y="714.5" width="2.8" height="2.2" fill="#dedede" stroke="#b0b0b0" stroke-width="0.6" transform="rotate(14.9 909.5 715.7)"/><rect x="913.5" y="741.2" width="3.6" height="3.2" fill="#dedede" stroke="#b0b0b0" stroke-width="0.6" transform="rotate(20.8 915.3 742.8)"/><rect x="914" y="733.7" width="3.5" height="3.4" fill="#dedede" stroke="#b0b0b0" stroke-width="0.6" transform="rotate(19.8 915.7 735.4)"/><rect x="915" y="717.1" width="3.1" height="3.1" fill="#dedede" stroke="#b0b0b0" stroke-width="0.6" transform="rotate(5.7 916.6 718.6)"/><rect x="907.9" y="736.5" width="3" height="2.6" fill="#dedede" stroke="#b0b0b0" stroke-width="0.6" transform="rotate(0.1 909.4 737.8)"/><rect x="897.9" y="738.6" width="2.4" height="3.2" fill="#dedede" stroke="#b0b0b0" stroke-width="0.6" transform="rotate(14.1 899.1 740.2)"/><rect x="916.9" y="705.2" width="2.2" height="3.4" fill="#dedede" stroke="#b0b0b0" stroke-width="0.6" transform="rotate(18.5 918 706.9)"/><rect x="901.1" y="728.8" width="3.2" height="3.2" fill="#dedede" stroke="#b0b0b0" stroke-width="0.6" transform="rotate(29.7 902.7 730.4)"/><rect x="910.4" y="738.1" width="3.7" height="2.9" fill="#dedede" stroke="#b0b0b0" stroke-width="0.6" transform="rotate(24.2 912.3 739.6)"/><rect x="891.6" y="713.4" width="4" height="2.1" fill="#dedede" stroke="#b0b0b0" stroke-width="0.6" transform="rotate(24.6 893.6 714.5)"/><rect x="900.1" y="751.2" width="3.8" height="2.5" fill="#dedede" stroke="#b0b0b0" stroke-width="0.6" transform="rotate(21.7 902 752.4)"/><rect x="914.4" y="705.1" width="3.2" height="3.8" fill="#dedede" stroke="#b0b0b0" stroke-width="0.6" transform="rotate(29 916 707)"/><rect x="909.4" y="716.7" width="2.6" height="3.2" fill="#dedede" stroke="#b0b0b0" stroke-width="0.6" transform="rotate(9.2 910.7 718.3)"/><rect x="915.5" y="705.3" width="3.8" height="3.6" fill="#dedede" stroke="#b0b0b0" stroke-width="0.6" transform="rotate(18.8 917.4 707.1)"/><rect x="907.9" y="715.7" width="3.5" height="3.9" fill="#dedede" stroke="#b0b0b0" stroke-width="0.6" transform="rotate(3 909.6 717.7)"/><rect x="903.6" y="718.5" width="2.3" height="2.5" fill="#dedede" stroke="#b0b0b0" stroke-width="0.6" transform="rotate(4.5 904.8 719.8)"/><rect x="911.7" y="707" width="2.2" height="3.4" fill="#dedede" stroke="#b0b0b0" stroke-width="0.6" transform="rotate(15.4 912.8 708.7)"/><rect x="901.6" y="746.4" width="4" height="2.7" fill="#dedede" stroke="#b0b0b0" stroke-width="0.6" transform="rotate(0.7 903.6 747.8)"/><rect x="908" y="719.4" width="3.7" height="3.5" fill="#dedede" stroke="#b0b0b0" stroke-width="0.6" transform="rotate(14.8 909.9 721.1)"/><rect x="887.6" y="737" width="3.9" height="2.1" fill="#dedede" stroke="#b0b0b0" stroke-width="0.6" transform="rotate(28.6 889.5 738.1)"/><rect x="900" y="745.5" width="2.3" height="2.4" fill="#dedede" stroke="#b0b0b0" stroke-width="0.6" transform="rotate(16.9 901.2 746.7)"/><rect x="891.3" y="788.6" width="3.3" height="2.1" fill="#dedede" stroke="#b0b0b0" stroke-width="0.6" transform="rotate(21.7 893 789.7)"/><rect x="895.3" y="780.2" width="2.2" height="2.2" fill="#dedede" stroke="#b0b0b0" stroke-width="0.6" transform="rotate(10 896.4 781.3)"/><rect x="906.1" y="806.6" width="2.3" height="2.1" fill="#dedede" stroke="#b0b0b0" stroke-width="0.6" transform="rotate(19 907.2 807.7)"/><rect x="904.2" y="777.8" width="3.8" height="2.3" fill="#dedede" stroke="#b0b0b0" stroke-width="0.6" transform="rotate(25.4 906.1 778.9)"/><rect x="914.1" y="805.7" width="3.2" height="3.2" fill="#dedede" stroke="#b0b0b0" stroke-width="0.6" transform="rotate(4.1 915.7 807.3)"/><rect x="903" y="770.9" width="2.9" height="2.2" fill="#dedede" stroke="#b0b0b0" stroke-width="0.6" transform="rotate(21 904.4 772)"/><rect x="913.7" y="766.2" width="2.7" height="2" fill="#dedede" stroke="#b0b0b0" stroke-width="0.6" transform="rotate(8.1 915 767.2)"/><rect x="909.7" y="795" width="3" height="2.1" fill="#dedede" stroke="#b0b0b0" stroke-width="0.6" transform="rotate(3.5 911.2 796.1)"/><rect x="901.8" y="764.6" width="3.2" height="2.3" fill="#dedede" stroke="#b0b0b0" stroke-width="0.6" transform="rotate(8.5 903.5 765.7)"/><rect x="906" y="804.4" width="2.9" height="3.1" fill="#dedede" stroke="#b0b0b0" stroke-width="0.6" transform="rotate(10.1 907.4 806)"/><rect x="908.8" y="777.8" width="2.7" height="2.4" fill="#dedede" stroke="#b0b0b0" stroke-width="0.6" transform="rotate(6.4 910.2 779.1)"/><rect x="912.3" y="781.1" width="2.4" height="2.8" fill="#dedede" stroke="#b0b0b0" stroke-width="0.6" transform="rotate(24.4 913.5 782.5)"/><rect x="893.2" y="779.6" width="2.9" height="3.2" fill="#dedede" stroke="#b0b0b0" stroke-width="0.6" transform="rotate(21.7 894.7 781.2)"/><rect x="893.3" y="774" width="2.2" height="2.9" fill="#dedede" stroke="#b0b0b0" stroke-width="0.6" transform="rotate(10.1 894.4 775.4)"/><rect x="815.5" y="579" width="2.4" height="3.2" fill="#dedede" stroke="#b0b0b0" stroke-width="0.6" transform="rotate(-14.2 816.7 580.6)"/><rect x="823.7" y="589.5" width="2.4" height="3.7" fill="#dedede" stroke="#b0b0b0" stroke-width="0.6" transform="rotate(-22 824.9 591.3)"/><rect x="821.4" y="589.5" width="2.4" height="2.6" fill="#dedede" stroke="#b0b0b0" stroke-width="0.6" transform="rotate(20.1 822.6 590.8)"/><rect x="815.3" y="581" width="3.7" height="2" fill="#dedede" stroke="#b0b0b0" stroke-width="0.6" transform="rotate(-4.3 817.2 582.1)"/><polyline points="1095,770.8 1130.8,740.8 1186.6,700" fill="none" stroke="#8f8f8f" stroke-width="0.9"/><polyline points="1095,773.4 1132.2,743.4 1188.3,701" fill="none" stroke="#8f8f8f" stroke-width="0.9"/><polyline points="1175.1,719.3 1202.3,778 1200.9,811" fill="none" stroke="#8f8f8f" stroke-width="0.9"/><polyline points="1203.7,778 1223.8,766.5 1252.4,730.8 1278.1,703.6" fill="none" stroke="#8f8f8f" stroke-width="0.9"/><polyline points="1209.4,700 1252.4,736.5 1266.7,749.4" fill="none" stroke="#8f8f8f" stroke-width="0.8"/><polyline points="1163.7,766.5 1192.3,753.7" fill="none" stroke="#8f8f8f" stroke-width="0.8"/><polyline points="1166.5,742.2 1195.1,732.2 1209.4,723.6 1232.3,700" fill="none" stroke="#8f8f8f" stroke-width="0.8"/><polyline points="1277.4,703.6 1276.7,811" fill="none" stroke="#8f8f8f" stroke-width="0.9"/><polyline points="1278.1,703.6 1286.7,716.5 1287.4,759.4" fill="none" stroke="#8f8f8f" stroke-width="0.8"/><polyline points="1289.6,700 1292.4,811" fill="none" stroke="#9c9c9c" stroke-width="0.9" stroke-dasharray="4 2"/><polyline points="1295.3,700 1298.1,811" fill="none" stroke="#9c9c9c" stroke-width="0.9" stroke-dasharray="4 2"/><polyline points="1095,709.3 1109.3,705 1123.6,737.9 1129.3,780.8" fill="none" stroke="#9c9c9c" stroke-width="0.9" stroke-dasharray="4 2"/><polyline points="1095,716.5 1107.9,749.4 1120.8,766.5 1127.9,795.1 1132.2,811" fill="none" stroke="#9c9c9c" stroke-width="0.9" stroke-dasharray="4 2"/><polyline points="1163.7,766.5 1160.8,783.7 1157.9,811" fill="none" stroke="#9c9c9c" stroke-width="0.9" stroke-dasharray="4 2"/><polyline points="1157.9,792.3 1180.8,803.7 1223.8,795.1 1252.4,786.6" fill="none" stroke="#9c9c9c" stroke-width="0.9" stroke-dasharray="4 2"/><polyline points="1256.7,745.1 1258.1,780.8 1266.7,811" fill="none" stroke="#9c9c9c" stroke-width="0.9" stroke-dasharray="4 2"/><polyline points="1095,795.1 1109.3,792.3 1123.6,811" fill="none" stroke="#9c9c9c" stroke-width="0.9" stroke-dasharray="4 2"/><polyline points="1095,783.7 1103.6,795.1 1113.6,811" fill="none" stroke="#8f8f8f" stroke-width="0.7"/><polyline points="1226.6,700 1238.1,709.3 1245.2,720.8" fill="none" stroke="#8f8f8f" stroke-width="0.7"/><polyline points="1258.1,737.9 1272.4,737.9" fill="none" stroke="#8f8f8f" stroke-width="0.7"/><polyline points="1444.5,700 1444.5,811" fill="none" stroke="#8f8f8f" stroke-width="1.1"/><polyline points="1372.3,700 1372.3,717.9 1389.4,717.9 1393.7,722.2" fill="none" stroke="#8f8f8f" stroke-width="0.8"/><polyline points="1372.3,717.9 1383.7,762.2 1392.3,768 1398,789.4 1399.4,811" fill="none" stroke="#8f8f8f" stroke-width="0.9"/><polyline points="1393.7,743.6 1416.6,736.5 1444.5,735.1 1459.5,735.1 1466.7,720.8" fill="none" stroke="#8f8f8f" stroke-width="0.9"/><polyline points="1459.5,735.1 1499.6,757.9" fill="none" stroke="#8f8f8f" stroke-width="0.8"/><polyline points="1435.2,756.5 1444.5,756.5" fill="none" stroke="#8f8f8f" stroke-width="0.8"/><polyline points="1444.5,780.8 1453.8,780.8" fill="none" stroke="#8f8f8f" stroke-width="0.8"/><polyline points="1471,798 1479.5,803.7 1488.1,792.3 1499.6,772.3" fill="none" stroke="#8f8f8f" stroke-width="0.8"/><polyline points="1462.4,700 1499.6,716.5" fill="none" stroke="#8f8f8f" stroke-width="0.9"/><polyline points="1462.4,703.6 1499.6,720.8" fill="none" stroke="#9c9c9c" stroke-width="0.9" stroke-dasharray="4 2"/><polyline points="1342.9,720.8 1372.3,720.8" fill="none" stroke="#9c9c9c" stroke-width="0.9" stroke-dasharray="4 2"/><polyline points="1343.6,733.6 1372.3,735.1" fill="none" stroke="#9c9c9c" stroke-width="0.9" stroke-dasharray="4 2"/><polyline points="1342.2,762.2 1383.7,760.8" fill="none" stroke="#9c9c9c" stroke-width="0.9" stroke-dasharray="4 2"/><polyline points="1380.8,743.6 1393.7,743.6" fill="none" stroke="#9c9c9c" stroke-width="0.9" stroke-dasharray="4 2"/><polyline points="1392.3,768 1403.7,763.7" fill="none" stroke="#8f8f8f" stroke-width="0.7"/><polyline points="1473.8,749.4 1459.5,811" fill="none" stroke="#9c9c9c" stroke-width="0.9" stroke-dasharray="4 2"/><polyline points="1413.7,726.5 1420.9,719.3 1444.5,727.9" fill="none" stroke="#9c9c9c" stroke-width="0.9" stroke-dasharray="4 2"/><polygon points="1398,745.1 1442.4,739.3 1442.4,780.8 1409.4,806.6 1398,795.1" fill="#fdf9e2"/><rect x="1390" y="702" width="22" height="6" fill="#dedede" stroke="#b0b0b0" stroke-width="0.6" transform="rotate(-25 1401 705)"/><rect x="1398" y="699" width="6" height="17" fill="#dedede" stroke="#b0b0b0" stroke-width="0.6" transform="rotate(-25 1401 707.5)"/><rect x="1239.4" y="741.4" width="5" height="3.4" fill="#dedede" stroke="#b0b0b0" stroke-width="0.6" transform="rotate(-40.7 1241.9 743.1)"/><rect x="1264.8" y="807.9" width="3.6" height="3" fill="#dedede" stroke="#b0b0b0" stroke-width="0.6" transform="rotate(-45.5 1266.6 809.3)"/><rect x="1217" y="708.9" width="2.7" height="4" fill="#dedede" stroke="#b0b0b0" stroke-width="0.6" transform="rotate(-63.8 1218.4 710.9)"/><rect x="1240.3" y="772.8" width="4.9" height="3.6" fill="#dedede" stroke="#b0b0b0" stroke-width="0.6" transform="rotate(-69.3 1242.7 774.6)"/><rect x="1246.3" y="760.8" width="4.8" height="2.6" fill="#dedede" stroke="#b0b0b0" stroke-width="0.6" transform="rotate(-55.4 1248.7 762.1)"/><rect x="1259.5" y="745.3" width="3.6" height="3.8" fill="#dedede" stroke="#b0b0b0" stroke-width="0.6" transform="rotate(-44.4 1261.3 747.2)"/><rect x="1285.7" y="790" width="3.2" height="2" fill="#dedede" stroke="#b0b0b0" stroke-width="0.6" transform="rotate(-55.6 1287.3 791)"/><rect x="1248.5" y="735.4" width="2.2" height="2.5" fill="#dedede" stroke="#b0b0b0" stroke-width="0.6" transform="rotate(-67.2 1249.6 736.6)"/><rect x="1176.7" y="806.6" width="3.7" height="3.5" fill="#dedede" stroke="#b0b0b0" stroke-width="0.6" transform="rotate(-62.3 1178.5 808.4)"/><rect x="1274.4" y="761.6" width="4.3" height="2.2" fill="#dedede" stroke="#b0b0b0" stroke-width="0.6" transform="rotate(-64.8 1276.5 762.7)"/><rect x="1102" y="797.5" width="4.1" height="2.4" fill="#dedede" stroke="#b0b0b0" stroke-width="0.6" transform="rotate(-46.6 1104.1 798.8)"/><rect x="1235.7" y="752.5" width="2.3" height="3.4" fill="#dedede" stroke="#b0b0b0" stroke-width="0.6" transform="rotate(-41.4 1236.9 754.2)"/><rect x="1244.4" y="807.1" width="2.9" height="3" fill="#dedede" stroke="#b0b0b0" stroke-width="0.6" transform="rotate(-42.7 1245.8 808.6)"/><rect x="1193.3" y="715.9" width="2.3" height="2.8" fill="#dedede" stroke="#b0b0b0" stroke-width="0.6" transform="rotate(-43 1194.4 717.3)"/><rect x="1221.1" y="748.9" width="3" height="3.9" fill="#dedede" stroke="#b0b0b0" stroke-width="0.6" transform="rotate(-65.3 1222.6 750.8)"/><rect x="1217.3" y="755.8" width="2.1" height="3.4" fill="#dedede" stroke="#b0b0b0" stroke-width="0.6" transform="rotate(-54.8 1218.3 757.5)"/><rect x="1238.7" y="741.7" width="4.1" height="2.7" fill="#dedede" stroke="#b0b0b0" stroke-width="0.6" transform="rotate(-51.3 1240.7 743)"/><rect x="1207.2" y="768.2" width="2.3" height="2.6" fill="#dedede" stroke="#b0b0b0" stroke-width="0.6" transform="rotate(-56.1 1208.3 769.5)"/><rect x="1266.6" y="733" width="2.1" height="3.1" fill="#dedede" stroke="#b0b0b0" stroke-width="0.6" transform="rotate(-63.8 1267.7 734.5)"/><rect x="1247" y="765.3" width="3.9" height="3.8" fill="#dedede" stroke="#b0b0b0" stroke-width="0.6" transform="rotate(-43.8 1248.9 767.2)"/><rect x="1171.3" y="805.8" width="4.5" height="2.5" fill="#dedede" stroke="#b0b0b0" stroke-width="0.6" transform="rotate(-41.7 1173.6 807)"/><rect x="1164.1" y="714.3" width="3.9" height="3.3" fill="#dedede" stroke="#b0b0b0" stroke-width="0.6" transform="rotate(-60.1 1166.1 715.9)"/><rect x="1225.4" y="769.7" width="2.7" height="3.3" fill="#dedede" stroke="#b0b0b0" stroke-width="0.6" transform="rotate(-42.7 1226.7 771.3)"/><rect x="1251.7" y="723.9" width="4.7" height="2.9" fill="#dedede" stroke="#b0b0b0" stroke-width="0.6" transform="rotate(-59.4 1254 725.3)"/><rect x="1238.7" y="767" width="4.4" height="2.6" fill="#dedede" stroke="#b0b0b0" stroke-width="0.6" transform="rotate(-50.3 1240.9 768.3)"/><rect x="1289.9" y="743.8" width="2.1" height="2.7" fill="#dedede" stroke="#b0b0b0" stroke-width="0.6" transform="rotate(-61.6 1291 745.1)"/><rect x="1231.7" y="754.7" width="5" height="3.2" fill="#dedede" stroke="#b0b0b0" stroke-width="0.6" transform="rotate(-51.3 1234.2 756.3)"/><rect x="1101.4" y="758.6" width="2.6" height="3" fill="#dedede" stroke="#b0b0b0" stroke-width="0.6" transform="rotate(-69 1102.7 760.1)"/><rect x="1165.3" y="754.3" width="2.3" height="2.2" fill="#dedede" stroke="#b0b0b0" stroke-width="0.6" transform="rotate(-63.5 1166.4 755.4)"/><rect x="1283" y="807.2" width="2.2" height="2.2" fill="#dedede" stroke="#b0b0b0" stroke-width="0.6" transform="rotate(-42.6 1284.1 808.3)"/><rect x="1269" y="706.6" width="2.4" height="2.4" fill="#dedede" stroke="#b0b0b0" stroke-width="0.6" transform="rotate(-65.5 1270.2 707.8)"/><rect x="1276.7" y="791.2" width="3.9" height="3.9" fill="#dedede" stroke="#b0b0b0" stroke-width="0.6" transform="rotate(-60.5 1278.6 793.2)"/><rect x="1271.5" y="804.1" width="4.2" height="3.9" fill="#dedede" stroke="#b0b0b0" stroke-width="0.6" transform="rotate(-47.1 1273.6 806.1)"/><rect x="1179.5" y="763.8" width="4.4" height="3.4" fill="#dedede" stroke="#b0b0b0" stroke-width="0.6" transform="rotate(-42.1 1181.6 765.5)"/><rect x="1278.2" y="782.9" width="4.1" height="3" fill="#dedede" stroke="#b0b0b0" stroke-width="0.6" transform="rotate(-63.3 1280.2 784.4)"/><rect x="1099.3" y="800.8" width="4.1" height="3.7" fill="#dedede" stroke="#b0b0b0" stroke-width="0.6" transform="rotate(-57 1101.3 802.7)"/><rect x="1252.7" y="771.7" width="2.7" height="3.3" fill="#dedede" stroke="#b0b0b0" stroke-width="0.6" transform="rotate(-42.7 1254 773.4)"/><rect x="1176.1" y="787" width="2.3" height="2.6" fill="#dedede" stroke="#b0b0b0" stroke-width="0.6" transform="rotate(-47.9 1177.3 788.3)"/><rect x="1103.8" y="778.3" width="4.5" height="2.3" fill="#dedede" stroke="#b0b0b0" stroke-width="0.6" transform="rotate(-45.5 1106 779.5)"/><rect x="1245.2" y="721.8" width="2.6" height="3.7" fill="#dedede" stroke="#b0b0b0" stroke-width="0.6" transform="rotate(-65.4 1246.4 723.7)"/><rect x="1281.8" y="717.4" width="2.6" height="3.7" fill="#dedede" stroke="#b0b0b0" stroke-width="0.6" transform="rotate(-49 1283.1 719.2)"/><rect x="1183.8" y="747.1" width="3.6" height="3.8" fill="#dedede" stroke="#b0b0b0" stroke-width="0.6" transform="rotate(-63 1185.6 749)"/><rect x="1273.4" y="708.6" width="4.5" height="2.6" fill="#dedede" stroke="#b0b0b0" stroke-width="0.6" transform="rotate(-43.3 1275.6 709.9)"/><rect x="1283.2" y="738" width="2.1" height="3.4" fill="#dedede" stroke="#b0b0b0" stroke-width="0.6" transform="rotate(-52.3 1284.2 739.7)"/><rect x="1260.6" y="756.3" width="3.2" height="2.1" fill="#dedede" stroke="#b0b0b0" stroke-width="0.6" transform="rotate(-45.9 1262.2 757.3)"/><rect x="1171.6" y="745.2" width="2.1" height="2" fill="#dedede" stroke="#b0b0b0" stroke-width="0.6" transform="rotate(-44.6 1172.7 746.2)"/><rect x="1240.8" y="742" width="4.6" height="2.5" fill="#dedede" stroke="#b0b0b0" stroke-width="0.6" transform="rotate(-47 1243.1 743.2)"/><rect x="1188.7" y="749" width="4" height="2.1" fill="#dedede" stroke="#b0b0b0" stroke-width="0.6" transform="rotate(-56.2 1190.7 750.1)"/><rect x="1175.8" y="758.3" width="3.7" height="3.4" fill="#dedede" stroke="#b0b0b0" stroke-width="0.6" transform="rotate(-45.2 1177.6 760)"/><rect x="1267" y="804.6" width="4.9" height="2.8" fill="#dedede" stroke="#b0b0b0" stroke-width="0.6" transform="rotate(-49 1269.4 806)"/><rect x="1195.3" y="802.6" width="3.1" height="3.5" fill="#dedede" stroke="#b0b0b0" stroke-width="0.6" transform="rotate(-55 1196.9 804.4)"/><rect x="1219.6" y="723.3" width="3.9" height="3.4" fill="#dedede" stroke="#b0b0b0" stroke-width="0.6" transform="rotate(-52.9 1221.6 725)"/><rect x="1248" y="726.2" width="3.3" height="3.4" fill="#dedede" stroke="#b0b0b0" stroke-width="0.6" transform="rotate(-58.9 1249.6 727.9)"/><rect x="1193.2" y="750.9" width="2.8" height="3.9" fill="#dedede" stroke="#b0b0b0" stroke-width="0.6" transform="rotate(-41.1 1194.6 752.9)"/><rect x="1194.9" y="718" width="4.3" height="3.7" fill="#dedede" stroke="#b0b0b0" stroke-width="0.6" transform="rotate(-58.8 1197.1 719.8)"/><rect x="1185.8" y="754.5" width="2.3" height="2.8" fill="#dedede" stroke="#b0b0b0" stroke-width="0.6" transform="rotate(-40.7 1186.9 755.9)"/><rect x="1193.5" y="747.3" width="3.5" height="2.8" fill="#dedede" stroke="#b0b0b0" stroke-width="0.6" transform="rotate(-49.7 1195.3 748.7)"/><rect x="1193.8" y="731" width="3.8" height="2.1" fill="#dedede" stroke="#b0b0b0" stroke-width="0.6" transform="rotate(-52.5 1195.7 732)"/><rect x="1284.7" y="781" width="3.4" height="3.5" fill="#dedede" stroke="#b0b0b0" stroke-width="0.6" transform="rotate(-51.5 1286.4 782.8)"/><rect x="1239.3" y="725.4" width="3.5" height="2.2" fill="#dedede" stroke="#b0b0b0" stroke-width="0.6" transform="rotate(-58.6 1241.1 726.5)"/><rect x="1264.8" y="761.5" width="3.8" height="2.5" fill="#dedede" stroke="#b0b0b0" stroke-width="0.6" transform="rotate(-40.8 1266.7 762.8)"/><rect x="1279.4" y="750.3" width="3.9" height="3.2" fill="#dedede" stroke="#b0b0b0" stroke-width="0.6" transform="rotate(-58.9 1281.4 751.9)"/><rect x="1202.5" y="799.6" width="2.7" height="2.1" fill="#dedede" stroke="#b0b0b0" stroke-width="0.6" transform="rotate(-44.4 1203.9 800.6)"/><rect x="1196.4" y="734.9" width="4.4" height="3.2" fill="#dedede" stroke="#b0b0b0" stroke-width="0.6" transform="rotate(-65.1 1198.6 736.5)"/><rect x="1205.3" y="805.4" width="3.3" height="3.7" fill="#dedede" stroke="#b0b0b0" stroke-width="0.6" transform="rotate(-46 1207 807.3)"/><rect x="1178.8" y="798.3" width="3.6" height="3.2" fill="#dedede" stroke="#b0b0b0" stroke-width="0.6" transform="rotate(-45 1180.6 799.8)"/><rect x="1229.7" y="741.8" width="2.5" height="3.8" fill="#dedede" stroke="#b0b0b0" stroke-width="0.6" transform="rotate(-47.7 1231 743.7)"/><rect x="1195.8" y="769.7" width="3.3" height="3.4" fill="#dedede" stroke="#b0b0b0" stroke-width="0.6" transform="rotate(-42.4 1197.4 771.4)"/><rect x="1172.5" y="778.7" width="4.7" height="3" fill="#dedede" stroke="#b0b0b0" stroke-width="0.6" transform="rotate(-50 1174.8 780.2)"/><rect x="1221.9" y="771.1" width="3.7" height="3.7" fill="#dedede" stroke="#b0b0b0" stroke-width="0.6" transform="rotate(-47.2 1223.8 773)"/><rect x="1224.3" y="726.3" width="3.2" height="2.9" fill="#dedede" stroke="#b0b0b0" stroke-width="0.6" transform="rotate(-47.4 1225.8 727.7)"/><rect x="1217.9" y="741" width="2.7" height="2.3" fill="#dedede" stroke="#b0b0b0" stroke-width="0.6" transform="rotate(-64.6 1219.3 742.1)"/><rect x="1201.7" y="757.6" width="3.8" height="3.1" fill="#dedede" stroke="#b0b0b0" stroke-width="0.6" transform="rotate(-51.5 1203.6 759.2)"/><rect x="1189" y="805" width="2.9" height="3" fill="#dedede" stroke="#b0b0b0" stroke-width="0.6" transform="rotate(-65.4 1190.4 806.5)"/><rect x="1168.4" y="740.3" width="2.8" height="3.3" fill="#dedede" stroke="#b0b0b0" stroke-width="0.6" transform="rotate(-66 1169.7 741.9)"/><rect x="1209.2" y="730.3" width="4.8" height="2.9" fill="#dedede" stroke="#b0b0b0" stroke-width="0.6" transform="rotate(-41.9 1211.6 731.7)"/><rect x="1290.3" y="743.3" width="2.1" height="2.5" fill="#dedede" stroke="#b0b0b0" stroke-width="0.6" transform="rotate(-68.9 1291.3 744.5)"/><rect x="1200.4" y="744.4" width="2.8" height="2.7" fill="#dedede" stroke="#b0b0b0" stroke-width="0.6" transform="rotate(-60.9 1201.8 745.8)"/><rect x="1241" y="751.6" width="3.7" height="3.1" fill="#dedede" stroke="#b0b0b0" stroke-width="0.6" transform="rotate(-63.6 1242.9 753.2)"/><rect x="1264.8" y="736.3" width="3.2" height="2.4" fill="#dedede" stroke="#b0b0b0" stroke-width="0.6" transform="rotate(-53.6 1266.4 737.6)"/><rect x="1181.3" y="718.8" width="3.8" height="2.3" fill="#dedede" stroke="#b0b0b0" stroke-width="0.6" transform="rotate(-53.7 1183.2 719.9)"/><rect x="1279.1" y="716.6" width="4.2" height="3.7" fill="#dedede" stroke="#b0b0b0" stroke-width="0.6" transform="rotate(-56.2 1281.2 718.4)"/><rect x="1280.2" y="756.1" width="4" height="2.7" fill="#dedede" stroke="#b0b0b0" stroke-width="0.6" transform="rotate(-43.9 1282.2 757.4)"/><rect x="1245" y="747.3" width="3.5" height="3.7" fill="#dedede" stroke="#b0b0b0" stroke-width="0.6" transform="rotate(-48.7 1246.8 749.1)"/><rect x="1272" y="792.6" width="3.5" height="2.2" fill="#dedede" stroke="#b0b0b0" stroke-width="0.6" transform="rotate(-43.2 1273.8 793.7)"/><rect x="1105.5" y="756.2" width="2.7" height="3.6" fill="#dedede" stroke="#b0b0b0" stroke-width="0.6" transform="rotate(-60.9 1106.8 758)"/><rect x="1204.4" y="749.8" width="3.5" height="2.8" fill="#dedede" stroke="#b0b0b0" stroke-width="0.6" transform="rotate(-47.2 1206.2 751.2)"/><rect x="1105.3" y="766" width="2" height="3.3" fill="#dedede" stroke="#b0b0b0" stroke-width="0.6" transform="rotate(-52.4 1106.3 767.7)"/><rect x="1250.8" y="736.8" width="3.7" height="3.1" fill="#dedede" stroke="#b0b0b0" stroke-width="0.6" transform="rotate(-42.9 1252.6 738.3)"/><rect x="1208.9" y="726.7" width="3.9" height="3.4" fill="#dedede" stroke="#b0b0b0" stroke-width="0.6" transform="rotate(-53.1 1210.9 728.4)"/><rect x="1223.9" y="718.8" width="2.8" height="3.5" fill="#dedede" stroke="#b0b0b0" stroke-width="0.6" transform="rotate(-48.9 1225.3 720.5)"/><rect x="1101.6" y="767.5" width="4.6" height="2.1" fill="#dedede" stroke="#b0b0b0" stroke-width="0.6" transform="rotate(-43.6 1104 768.6)"/><rect x="1176.6" y="763.4" width="3.7" height="3" fill="#dedede" stroke="#b0b0b0" stroke-width="0.6" transform="rotate(-42.6 1178.5 764.9)"/><rect x="1182" y="802" width="3.6" height="3.1" fill="#dedede" stroke="#b0b0b0" stroke-width="0.6" transform="rotate(-53.1 1183.8 803.5)"/><rect x="1186.5" y="732.9" width="3.6" height="2.7" fill="#dedede" stroke="#b0b0b0" stroke-width="0.6" transform="rotate(-56.7 1188.3 734.3)"/><rect x="1397.5" y="705.9" width="2.7" height="2.2" fill="#dedede" stroke="#b0b0b0" stroke-width="0.6" transform="rotate(6.6 1398.8 707)"/><rect x="1390" y="731.3" width="2.2" height="3.8" fill="#dedede" stroke="#b0b0b0" stroke-width="0.6" transform="rotate(2 1391.1 733.2)"/><rect x="1387.8" y="799.3" width="2.7" height="3.4" fill="#dedede" stroke="#b0b0b0" stroke-width="0.6" transform="rotate(-18.3 1389.2 801)"/><rect x="1448.7" y="730.5" width="2.1" height="3.8" fill="#dedede" stroke="#b0b0b0" stroke-width="0.6" transform="rotate(5.7 1449.7 732.3)"/><rect x="1383.2" y="759.7" width="2.9" height="3" fill="#dedede" stroke="#b0b0b0" stroke-width="0.6" transform="rotate(5.9 1384.6 761.2)"/><rect x="1474.7" y="800.1" width="4.2" height="3" fill="#dedede" stroke="#b0b0b0" stroke-width="0.6" transform="rotate(-3.7 1476.8 801.6)"/><rect x="1431" y="758.2" width="3" height="3.9" fill="#dedede" stroke="#b0b0b0" stroke-width="0.6" transform="rotate(11.1 1432.5 760.2)"/><rect x="1443" y="730.5" width="3.5" height="3" fill="#dedede" stroke="#b0b0b0" stroke-width="0.6" transform="rotate(-4.9 1444.7 732)"/><rect x="1470.1" y="780" width="2" height="3.4" fill="#dedede" stroke="#b0b0b0" stroke-width="0.6" transform="rotate(18.9 1471.2 781.7)"/><rect x="1390.2" y="800.5" width="3.9" height="2.2" fill="#dedede" stroke="#b0b0b0" stroke-width="0.6" transform="rotate(-15.7 1392.1 801.6)"/><rect x="1363" y="724.9" width="4.2" height="3.6" fill="#dedede" stroke="#b0b0b0" stroke-width="0.6" transform="rotate(9.3 1365.1 726.7)"/><rect x="1422.8" y="723" width="3.6" height="2.1" fill="#dedede" stroke="#b0b0b0" stroke-width="0.6" transform="rotate(14.3 1424.6 724)"/><rect x="1402" y="704.1" width="3.3" height="2" fill="#dedede" stroke="#b0b0b0" stroke-width="0.6" transform="rotate(16.2 1403.6 705.1)"/><rect x="1340.4" y="801.1" width="4.2" height="3.4" fill="#dedede" stroke="#b0b0b0" stroke-width="0.6" transform="rotate(-9.4 1342.5 802.8)"/><rect x="1427.4" y="715.1" width="3.6" height="3.5" fill="#dedede" stroke="#b0b0b0" stroke-width="0.6" transform="rotate(-10.2 1429.2 716.9)"/><rect x="1442.1" y="739.9" width="3" height="2.3" fill="#dedede" stroke="#b0b0b0" stroke-width="0.6" transform="rotate(11.6 1443.6 741.1)"/><rect x="1469.7" y="721.6" width="2.9" height="3.7" fill="#dedede" stroke="#b0b0b0" stroke-width="0.6" transform="rotate(1.9 1471.1 723.4)"/><rect x="1483.2" y="739.2" width="3.1" height="2.2" fill="#dedede" stroke="#b0b0b0" stroke-width="0.6" transform="rotate(4.5 1484.7 740.3)"/><rect x="1494.8" y="774.2" width="2.2" height="3.9" fill="#dedede" stroke="#b0b0b0" stroke-width="0.6" transform="rotate(-14.8 1495.8 776.2)"/><rect x="1414" y="725.9" width="3.7" height="2.9" fill="#dedede" stroke="#b0b0b0" stroke-width="0.6" transform="rotate(-13.9 1415.8 727.4)"/><rect x="1456.4" y="780.5" width="4.1" height="3.2" fill="#dedede" stroke="#b0b0b0" stroke-width="0.6" transform="rotate(-3.9 1458.5 782.1)"/><rect x="1442.6" y="748.4" width="3.4" height="2.6" fill="#dedede" stroke="#b0b0b0" stroke-width="0.6" transform="rotate(11.4 1444.3 749.7)"/><rect x="1352.9" y="707.1" width="2.7" height="2.8" fill="#dedede" stroke="#b0b0b0" stroke-width="0.6" transform="rotate(-11.4 1354.3 708.5)"/><rect x="1355" y="789.4" width="2.1" height="4" fill="#dedede" stroke="#b0b0b0" stroke-width="0.6" transform="rotate(-5.7 1356.1 791.4)"/><rect x="1396" y="704.7" width="2.6" height="3.2" fill="#dedede" stroke="#b0b0b0" stroke-width="0.6" transform="rotate(-14.8 1397.3 706.3)"/><rect x="1495.3" y="729.5" width="3.7" height="3.4" fill="#dedede" stroke="#b0b0b0" stroke-width="0.6" transform="rotate(10.8 1497.1 731.2)"/><rect x="1383.8" y="746.2" width="2.9" height="3" fill="#dedede" stroke="#b0b0b0" stroke-width="0.6" transform="rotate(16.6 1385.2 747.7)"/><rect x="1483" y="750.5" width="2.6" height="2.8" fill="#dedede" stroke="#b0b0b0" stroke-width="0.6" transform="rotate(12.5 1484.3 751.9)"/><rect x="1452.8" y="771.8" width="3.3" height="2.7" fill="#dedede" stroke="#b0b0b0" stroke-width="0.6" transform="rotate(-4.8 1454.5 773.1)"/><rect x="1472.1" y="779.3" width="4.5" height="2.2" fill="#dedede" stroke="#b0b0b0" stroke-width="0.6" transform="rotate(8.4 1474.4 780.4)"/><rect x="1346.9" y="773" width="3.2" height="3.5" fill="#dedede" stroke="#b0b0b0" stroke-width="0.6" transform="rotate(14.6 1348.5 774.8)"/><rect x="1449.2" y="755.4" width="3" height="3.5" fill="#dedede" stroke="#b0b0b0" stroke-width="0.6" transform="rotate(10.8 1450.7 757.2)"/><rect x="1471.5" y="704.4" width="2.4" height="2.9" fill="#dedede" stroke="#b0b0b0" stroke-width="0.6" transform="rotate(14.5 1472.8 705.9)"/><rect x="1449.8" y="763.4" width="2.9" height="2.7" fill="#dedede" stroke="#b0b0b0" stroke-width="0.6" transform="rotate(-8.5 1451.2 764.7)"/><rect x="1480.2" y="807.6" width="2.4" height="2.8" fill="#dedede" stroke="#b0b0b0" stroke-width="0.6" transform="rotate(8.7 1481.4 809)"/><rect x="1482.8" y="719.8" width="3.7" height="3.4" fill="#dedede" stroke="#b0b0b0" stroke-width="0.6" transform="rotate(-14.2 1484.7 721.5)"/><rect x="1421.5" y="745.7" width="4.1" height="2" fill="#dedede" stroke="#b0b0b0" stroke-width="0.6" transform="rotate(16.7 1423.6 746.7)"/><rect x="1350.1" y="752.9" width="3.6" height="2.5" fill="#dedede" stroke="#b0b0b0" stroke-width="0.6" transform="rotate(2.1 1351.9 754.1)"/><rect x="1349.7" y="740.7" width="3.2" height="3.2" fill="#dedede" stroke="#b0b0b0" stroke-width="0.6" transform="rotate(13.2 1351.3 742.3)"/><rect x="1368.1" y="802.1" width="2.7" height="2.4" fill="#dedede" stroke="#b0b0b0" stroke-width="0.6" transform="rotate(14.8 1369.4 803.3)"/><rect x="1397.8" y="796" width="3" height="2.7" fill="#dedede" stroke="#b0b0b0" stroke-width="0.6" transform="rotate(16.3 1399.3 797.3)"/><rect x="1445.8" y="715.2" width="4.4" height="3.7" fill="#dedede" stroke="#b0b0b0" stroke-width="0.6" transform="rotate(17.7 1448 717)"/><rect x="1396.3" y="706.8" width="2.4" height="3.5" fill="#dedede" stroke="#b0b0b0" stroke-width="0.6" transform="rotate(6.3 1397.5 708.6)"/><rect x="1368.4" y="772.6" width="2.6" height="3.8" fill="#dedede" stroke="#b0b0b0" stroke-width="0.6" transform="rotate(-2.5 1369.8 774.5)"/><rect x="1388.8" y="784.7" width="2.1" height="2.6" fill="#dedede" stroke="#b0b0b0" stroke-width="0.6" transform="rotate(10.9 1389.9 786)"/><rect x="1372.9" y="742.5" width="4.3" height="2.3" fill="#dedede" stroke="#b0b0b0" stroke-width="0.6" transform="rotate(-7.2 1375.1 743.6)"/><rect x="1340.9" y="759.1" width="2.5" height="3.5" fill="#dedede" stroke="#b0b0b0" stroke-width="0.6" transform="rotate(-14.7 1342.1 760.9)"/><rect x="1494.6" y="729.7" width="3.8" height="2.9" fill="#dedede" stroke="#b0b0b0" stroke-width="0.6" transform="rotate(-12.5 1496.5 731.1)"/><rect x="1453.2" y="756" width="3.6" height="3.5" fill="#dedede" stroke="#b0b0b0" stroke-width="0.6" transform="rotate(8.9 1455 757.7)"/><rect x="1456.4" y="786.4" width="2.8" height="3.9" fill="#dedede" stroke="#b0b0b0" stroke-width="0.6" transform="rotate(1.6 1457.8 788.3)"/><rect x="1488.1" y="749.6" width="4.3" height="2.9" fill="#dedede" stroke="#b0b0b0" stroke-width="0.6" transform="rotate(18 1490.2 751.1)"/><rect x="1368.3" y="776.6" width="4.1" height="3.7" fill="#dedede" stroke="#b0b0b0" stroke-width="0.6" transform="rotate(1 1370.4 778.5)"/><rect x="1482.8" y="807.6" width="3" height="2.2" fill="#dedede" stroke="#b0b0b0" stroke-width="0.6" transform="rotate(9 1484.3 808.7)"/><rect x="1390.3" y="737.8" width="3.4" height="2.2" fill="#dedede" stroke="#b0b0b0" stroke-width="0.6" transform="rotate(-16.5 1392 738.9)"/><rect x="1404.9" y="710.3" width="2.9" height="2.7" fill="#dedede" stroke="#b0b0b0" stroke-width="0.6" transform="rotate(-14.7 1406.3 711.6)"/><rect x="1376.2" y="750.1" width="4.4" height="3.1" fill="#dedede" stroke="#b0b0b0" stroke-width="0.6" transform="rotate(-5.5 1378.4 751.7)"/><rect x="1456.7" y="801.6" width="3.2" height="2.4" fill="#dedede" stroke="#b0b0b0" stroke-width="0.6" transform="rotate(5.1 1458.3 802.7)"/><rect x="1423.6" y="757.5" width="4.4" height="3.6" fill="#dedede" stroke="#b0b0b0" stroke-width="0.6" transform="rotate(7.6 1425.8 759.3)"/><rect x="1469.2" y="708" width="3.7" height="2.1" fill="#dedede" stroke="#b0b0b0" stroke-width="0.6" transform="rotate(0.7 1471 709)"/><rect x="1376.4" y="767.8" width="2.4" height="2.6" fill="#dedede" stroke="#b0b0b0" stroke-width="0.6" transform="rotate(8.4 1377.6 769.1)"/><rect x="1349.4" y="707" width="4.2" height="3" fill="#dedede" stroke="#b0b0b0" stroke-width="0.6" transform="rotate(-16.6 1351.5 708.5)"/><rect x="1386.7" y="718.9" width="2.3" height="2.4" fill="#dedede" stroke="#b0b0b0" stroke-width="0.6" transform="rotate(14 1387.9 720.1)"/><rect x="1463.2" y="722" width="2.9" height="3" fill="#dedede" stroke="#b0b0b0" stroke-width="0.6" transform="rotate(0 1464.7 723.4)"/><rect x="1486.6" y="762.5" width="2.1" height="3" fill="#dedede" stroke="#b0b0b0" stroke-width="0.6" transform="rotate(-7.9 1487.6 764)"/><rect x="1492.6" y="803.2" width="3.8" height="3.8" fill="#dedede" stroke="#b0b0b0" stroke-width="0.6" transform="rotate(12.4 1494.5 805.1)"/><rect x="1370.3" y="723.6" width="3.7" height="3.6" fill="#dedede" stroke="#b0b0b0" stroke-width="0.6" transform="rotate(13.7 1372.2 725.4)"/><rect x="1456.9" y="717.2" width="3.1" height="2" fill="#dedede" stroke="#b0b0b0" stroke-width="0.6" transform="rotate(-9.1 1458.4 718.2)"/><rect x="1468.7" y="731.2" width="4.3" height="2.4" fill="#dedede" stroke="#b0b0b0" stroke-width="0.6" transform="rotate(11.8 1470.9 732.4)"/><rect x="1447.4" y="778.3" width="3" height="3.1" fill="#dedede" stroke="#b0b0b0" stroke-width="0.6" transform="rotate(-11.7 1448.9 779.8)"/><rect x="1378.3" y="785.2" width="3.7" height="2.3" fill="#dedede" stroke="#b0b0b0" stroke-width="0.6" transform="rotate(-13.9 1380.1 786.4)"/><rect x="1431.4" y="721.6" width="3" height="2.2" fill="#dedede" stroke="#b0b0b0" stroke-width="0.6" transform="rotate(-5.6 1432.9 722.7)"/><rect x="1417.9" y="706.4" width="4.4" height="2.9" fill="#dedede" stroke="#b0b0b0" stroke-width="0.6" transform="rotate(-9.5 1420.1 707.8)"/><rect x="1364.3" y="721.5" width="2.3" height="3.2" fill="#dedede" stroke="#b0b0b0" stroke-width="0.6" transform="rotate(-14.3 1365.4 723.2)"/><rect x="1385.6" y="735.9" width="3.9" height="3.3" fill="#dedede" stroke="#b0b0b0" stroke-width="0.6" transform="rotate(-9 1387.5 737.6)"/><rect x="1360.8" y="719.1" width="3.4" height="3.1" fill="#dedede" stroke="#b0b0b0" stroke-width="0.6" transform="rotate(5.1 1362.5 720.7)"/><rect x="1367.6" y="713.3" width="2.7" height="3.3" fill="#dedede" stroke="#b0b0b0" stroke-width="0.6" transform="rotate(-17.2 1369 714.9)"/><rect x="1343" y="740.4" width="4.1" height="3.1" fill="#dedede" stroke="#b0b0b0" stroke-width="0.6" transform="rotate(5.3 1345.1 741.9)"/><rect x="1340.8" y="757.9" width="2.5" height="3.7" fill="#dedede" stroke="#b0b0b0" stroke-width="0.6" transform="rotate(3 1342.1 759.7)"/><rect x="1426" y="716.6" width="2.5" height="4" fill="#dedede" stroke="#b0b0b0" stroke-width="0.6" transform="rotate(10.2 1427.3 718.6)"/><rect x="1471.8" y="769.8" width="2.1" height="3.4" fill="#dedede" stroke="#b0b0b0" stroke-width="0.6" transform="rotate(-19.1 1472.9 771.5)"/><rect x="1473.7" y="731.1" width="2.2" height="3.7" fill="#dedede" stroke="#b0b0b0" stroke-width="0.6" transform="rotate(17.1 1474.7 733)"/><rect x="1478.1" y="704.5" width="4" height="2.2" fill="#dedede" stroke="#b0b0b0" stroke-width="0.6" transform="rotate(-7 1480.1 705.6)"/><rect x="1418.7" y="707.8" width="2.5" height="2.4" fill="#dedede" stroke="#b0b0b0" stroke-width="0.6" transform="rotate(18.6 1420 709.1)"/><rect x="1395.4" y="799" width="2.5" height="3.4" fill="#dedede" stroke="#b0b0b0" stroke-width="0.6" transform="rotate(2.4 1396.7 800.7)"/><rect x="1428.1" y="750.1" width="3.2" height="3.5" fill="#dedede" stroke="#b0b0b0" stroke-width="0.6" transform="rotate(-13.1 1429.7 751.9)"/><rect x="1412.3" y="806.5" width="4" height="3.3" fill="#dedede" stroke="#b0b0b0" stroke-width="0.6" transform="rotate(-1.4 1414.3 808.2)"/><rect x="1396.1" y="769.7" width="3.9" height="2.3" fill="#dedede" stroke="#b0b0b0" stroke-width="0.6" transform="rotate(-9.7 1398.1 770.8)"/><rect x="1475.4" y="751" width="2.7" height="3.5" fill="#dedede" stroke="#b0b0b0" stroke-width="0.6" transform="rotate(2.6 1476.7 752.7)"/><rect x="1347.2" y="722.2" width="3.6" height="2.5" fill="#dedede" stroke="#b0b0b0" stroke-width="0.6" transform="rotate(1 1349 723.5)"/><rect x="1381.9" y="720.5" width="3.6" height="3.7" fill="#dedede" stroke="#b0b0b0" stroke-width="0.6" transform="rotate(-3.2 1383.7 722.4)"/><rect x="1414.3" y="758.1" width="2.3" height="2.3" fill="#dedede" stroke="#b0b0b0" stroke-width="0.6" transform="rotate(-13 1415.4 759.2)"/><rect x="1490.6" y="803" width="3.7" height="3.1" fill="#dedede" stroke="#b0b0b0" stroke-width="0.6" transform="rotate(5.1 1492.4 804.6)"/><rect x="1382.8" y="732.3" width="2.2" height="3" fill="#dedede" stroke="#b0b0b0" stroke-width="0.6" transform="rotate(-17 1383.9 733.8)"/><rect x="1382.9" y="727.2" width="3.7" height="3.3" fill="#dedede" stroke="#b0b0b0" stroke-width="0.6" transform="rotate(19.7 1384.8 728.8)"/><rect x="1378.5" y="801.6" width="3.4" height="3.4" fill="#dedede" stroke="#b0b0b0" stroke-width="0.6" transform="rotate(8.7 1380.2 803.3)"/><rect x="1408.4" y="705.6" width="3.3" height="2.2" fill="#dedede" stroke="#b0b0b0" stroke-width="0.6" transform="rotate(-11.6 1410 706.7)"/><rect x="1372.1" y="739.1" width="4" height="2.2" fill="#dedede" stroke="#b0b0b0" stroke-width="0.6" transform="rotate(18.7 1374 740.2)"/><rect x="1423.9" y="707.8" width="2.4" height="2.8" fill="#dedede" stroke="#b0b0b0" stroke-width="0.6" transform="rotate(2.5 1425.1 709.2)"/><rect x="1390.9" y="808.1" width="2.2" height="2.6" fill="#dedede" stroke="#b0b0b0" stroke-width="0.6" transform="rotate(-2.5 1392 809.4)"/><rect x="1387.2" y="720.1" width="2.7" height="2.7" fill="#dedede" stroke="#b0b0b0" stroke-width="0.6" transform="rotate(-7.4 1388.6 721.4)"/><polyline points="1490,712.6 1746,811" fill="none" stroke="#8f8f8f" stroke-width="1.1"/><polyline points="1490,718 1737,811" fill="none" stroke="#9c9c9c" stroke-width="0.9" stroke-dasharray="4 2"/><polyline points="1530.9,700.3 1511.8,753.5 1490,794.4" fill="none" stroke="#8f8f8f" stroke-width="0.8"/><polyline points="1511.8,750.8 1585.4,780.7 1604.4,811" fill="none" stroke="#8f8f8f" stroke-width="0.8"/><polyline points="1642.6,772.6 1634.4,811" fill="none" stroke="#8f8f8f" stroke-width="0.8"/><polyline points="1560,760 1600,730" fill="none" stroke="#8f8f8f" stroke-width="0.7"/><polyline points="1699.8,700.3 1680.7,780.7 1675.3,811" fill="none" stroke="#9c9c9c" stroke-width="0.9" stroke-dasharray="4 2"/><polyline points="1699.8,700.3 1735,701.5" fill="none" stroke="#9c9c9c" stroke-width="0.9" stroke-dasharray="4 2"/><polyline points="1580,704 1580,760 1588,811" fill="none" stroke="#9c9c9c" stroke-width="0.9" stroke-dasharray="4 2"/><polyline points="1098,700 1130,690 1160,694" fill="none" stroke="#9c9c9c" stroke-width="0.9" stroke-dasharray="4 2"/><polyline points="1259,693.5 1280.7,690.8 1297,683" fill="none" stroke="#9c9c9c" stroke-width="0.9" stroke-dasharray="4 2"/><polyline points="1510,690 1540,700" fill="none" stroke="#9c9c9c" stroke-width="0.9" stroke-dasharray="4 2"/><rect x="1544.9" y="703.6" width="3.4" height="2.7" fill="#dedede" stroke="#b0b0b0" stroke-width="0.6" transform="rotate(-44.2 1546.6 705)"/><rect x="1567" y="719" width="2.6" height="2.5" fill="#dedede" stroke="#b0b0b0" stroke-width="0.6" transform="rotate(-49 1568.3 720.2)"/><rect x="1564.4" y="703.3" width="2.1" height="3.7" fill="#dedede" stroke="#b0b0b0" stroke-width="0.6" transform="rotate(-54.2 1565.4 705.1)"/><rect x="1543.1" y="718.8" width="3.7" height="3" fill="#dedede" stroke="#b0b0b0" stroke-width="0.6" transform="rotate(-55.8 1544.9 720.3)"/><rect x="1572.2" y="714" width="2.4" height="3.4" fill="#dedede" stroke="#b0b0b0" stroke-width="0.6" transform="rotate(-59.6 1573.4 715.7)"/><rect x="1560.9" y="718.9" width="2" height="2.4" fill="#dedede" stroke="#b0b0b0" stroke-width="0.6" transform="rotate(-57.7 1561.9 720.1)"/><rect x="1538" y="717.1" width="3.3" height="3.4" fill="#dedede" stroke="#b0b0b0" stroke-width="0.6" transform="rotate(-53.7 1539.7 718.8)"/><rect x="1556.2" y="712.7" width="2.7" height="3.6" fill="#dedede" stroke="#b0b0b0" stroke-width="0.6" transform="rotate(-58.8 1557.5 714.4)"/><rect x="1565.6" y="715.9" width="3.2" height="2.3" fill="#dedede" stroke="#b0b0b0" stroke-width="0.6" transform="rotate(-47 1567.3 717.1)"/><rect x="1565.8" y="713.8" width="3.3" height="4" fill="#dedede" stroke="#b0b0b0" stroke-width="0.6" transform="rotate(-52.8 1567.4 715.8)"/><rect x="1539.3" y="703.6" width="2" height="4" fill="#dedede" stroke="#b0b0b0" stroke-width="0.6" transform="rotate(-48.1 1540.3 705.6)"/><rect x="1544.1" y="703.3" width="4" height="2.9" fill="#dedede" stroke="#b0b0b0" stroke-width="0.6" transform="rotate(-56.8 1546.1 704.8)"/><rect x="1546.5" y="717.3" width="2.7" height="2.7" fill="#dedede" stroke="#b0b0b0" stroke-width="0.6" transform="rotate(-40 1547.9 718.7)"/><rect x="1560.7" y="705.7" width="4" height="2.4" fill="#dedede" stroke="#b0b0b0" stroke-width="0.6" transform="rotate(-50.8 1562.7 706.9)"/><rect x="1564.4" y="706.6" width="3" height="2.6" fill="#dedede" stroke="#b0b0b0" stroke-width="0.6" transform="rotate(-43.9 1565.9 707.9)"/><rect x="1539.6" y="704.9" width="3.5" height="3.3" fill="#dedede" stroke="#b0b0b0" stroke-width="0.6" transform="rotate(-43.9 1541.4 706.5)"/><rect x="1556.7" y="763.4" width="4.9" height="2.5" fill="#dedede" stroke="#b0b0b0" stroke-width="0.6" transform="rotate(-33.9 1559.2 764.7)"/><rect x="1523.6" y="761.1" width="2.4" height="2.4" fill="#dedede" stroke="#b0b0b0" stroke-width="0.6" transform="rotate(-49.3 1524.8 762.3)"/><rect x="1555.7" y="745.3" width="4.1" height="2.3" fill="#dedede" stroke="#b0b0b0" stroke-width="0.6" transform="rotate(-46.8 1557.7 746.4)"/><rect x="1530.8" y="763.3" width="3.8" height="3.9" fill="#dedede" stroke="#b0b0b0" stroke-width="0.6" transform="rotate(-58.5 1532.7 765.2)"/><rect x="1524.8" y="765.8" width="2.5" height="3.4" fill="#dedede" stroke="#b0b0b0" stroke-width="0.6" transform="rotate(-33.3 1526 767.5)"/><rect x="1557.2" y="770.8" width="2.7" height="3.4" fill="#dedede" stroke="#b0b0b0" stroke-width="0.6" transform="rotate(-45.1 1558.5 772.5)"/><rect x="1535.2" y="768.1" width="3.1" height="3.8" fill="#dedede" stroke="#b0b0b0" stroke-width="0.6" transform="rotate(-49.1 1536.7 770)"/><rect x="1563" y="741.7" width="3.2" height="3.7" fill="#dedede" stroke="#b0b0b0" stroke-width="0.6" transform="rotate(-40.2 1564.6 743.5)"/><rect x="1550.7" y="759.4" width="5" height="2.8" fill="#dedede" stroke="#b0b0b0" stroke-width="0.6" transform="rotate(-38.4 1553.2 760.8)"/><rect x="1530.1" y="758.3" width="3.2" height="2.8" fill="#dedede" stroke="#b0b0b0" stroke-width="0.6" transform="rotate(-50.1 1531.6 759.7)"/><rect x="1562.3" y="741.1" width="4.4" height="2.1" fill="#dedede" stroke="#b0b0b0" stroke-width="0.6" transform="rotate(-33.9 1564.4 742.1)"/><rect x="1525.5" y="742.8" width="4.5" height="2.7" fill="#dedede" stroke="#b0b0b0" stroke-width="0.6" transform="rotate(-53.8 1527.7 744.2)"/><rect x="1521.3" y="735.3" width="4.9" height="3.6" fill="#dedede" stroke="#b0b0b0" stroke-width="0.6" transform="rotate(-43.2 1523.8 737.1)"/><rect x="1567.6" y="765.9" width="3.4" height="3.1" fill="#dedede" stroke="#b0b0b0" stroke-width="0.6" transform="rotate(-56 1569.3 767.5)"/><rect x="1545.9" y="740.6" width="4.9" height="2.9" fill="#dedede" stroke="#b0b0b0" stroke-width="0.6" transform="rotate(-52.8 1548.4 742.1)"/><rect x="1551.3" y="744.7" width="2.6" height="2.6" fill="#dedede" stroke="#b0b0b0" stroke-width="0.6" transform="rotate(-51.9 1552.5 745.9)"/><rect x="1572.5" y="751.6" width="2.3" height="2.1" fill="#dedede" stroke="#b0b0b0" stroke-width="0.6" transform="rotate(-46.4 1573.7 752.7)"/><rect x="1520.7" y="763.3" width="2.4" height="4" fill="#dedede" stroke="#b0b0b0" stroke-width="0.6" transform="rotate(-58.7 1521.9 765.2)"/><rect x="1546" y="761.1" width="2.9" height="3" fill="#dedede" stroke="#b0b0b0" stroke-width="0.6" transform="rotate(-42.9 1547.4 762.6)"/><rect x="1536.4" y="745.4" width="4.1" height="2.1" fill="#dedede" stroke="#b0b0b0" stroke-width="0.6" transform="rotate(-45.6 1538.4 746.5)"/><rect x="1527.3" y="737.3" width="3.3" height="2.2" fill="#dedede" stroke="#b0b0b0" stroke-width="0.6" transform="rotate(-58.4 1528.9 738.4)"/><rect x="1553.3" y="742.1" width="3.9" height="3.9" fill="#dedede" stroke="#b0b0b0" stroke-width="0.6" transform="rotate(-41.7 1555.2 744.1)"/><rect x="1565.4" y="744.8" width="3.5" height="2.6" fill="#dedede" stroke="#b0b0b0" stroke-width="0.6" transform="rotate(-50.8 1567.2 746.1)"/><rect x="1573.4" y="753" width="2.1" height="2.5" fill="#dedede" stroke="#b0b0b0" stroke-width="0.6" transform="rotate(-38.1 1574.5 754.2)"/><rect x="1540" y="754.1" width="3.5" height="2.5" fill="#dedede" stroke="#b0b0b0" stroke-width="0.6" transform="rotate(-50.7 1541.8 755.3)"/><rect x="1541.9" y="739.4" width="3.5" height="2.1" fill="#dedede" stroke="#b0b0b0" stroke-width="0.6" transform="rotate(-45.6 1543.6 740.4)"/><rect x="1569.2" y="767.3" width="3.6" height="3.8" fill="#dedede" stroke="#b0b0b0" stroke-width="0.6" transform="rotate(-46.7 1571 769.2)"/><rect x="1526.8" y="748.8" width="2.9" height="3.7" fill="#dedede" stroke="#b0b0b0" stroke-width="0.6" transform="rotate(-58.1 1528.2 750.6)"/><rect x="1571.5" y="741.8" width="4.4" height="3.5" fill="#dedede" stroke="#b0b0b0" stroke-width="0.6" transform="rotate(-34.9 1573.7 743.5)"/><rect x="1544.8" y="764.7" width="4.1" height="3.1" fill="#dedede" stroke="#b0b0b0" stroke-width="0.6" transform="rotate(-45.8 1546.8 766.3)"/><rect x="1540.3" y="754.5" width="4.8" height="3.9" fill="#dedede" stroke="#b0b0b0" stroke-width="0.6" transform="rotate(-47.1 1542.7 756.4)"/><rect x="1542.2" y="748.3" width="4.7" height="3.7" fill="#dedede" stroke="#b0b0b0" stroke-width="0.6" transform="rotate(-50.5 1544.5 750.2)"/><rect x="1620.5" y="789.6" width="4" height="3.3" fill="#dedede" stroke="#b0b0b0" stroke-width="0.6" transform="rotate(-39.9 1622.5 791.3)"/><rect x="1624.8" y="797.8" width="2" height="3" fill="#dedede" stroke="#b0b0b0" stroke-width="0.6" transform="rotate(-35.6 1625.8 799.2)"/><rect x="1636" y="793" width="2.7" height="3.9" fill="#dedede" stroke="#b0b0b0" stroke-width="0.6" transform="rotate(-35.4 1637.4 795)"/><rect x="1604.2" y="790.6" width="2.6" height="2.4" fill="#dedede" stroke="#b0b0b0" stroke-width="0.6" transform="rotate(-33.2 1605.5 791.8)"/><rect x="1629.8" y="771.6" width="3.1" height="3.9" fill="#dedede" stroke="#b0b0b0" stroke-width="0.6" transform="rotate(-59.1 1631.4 773.6)"/><rect x="1626.2" y="802.7" width="5" height="3" fill="#dedede" stroke="#b0b0b0" stroke-width="0.6" transform="rotate(-50.9 1628.7 804.2)"/><rect x="1635" y="784.9" width="2" height="3.7" fill="#dedede" stroke="#b0b0b0" stroke-width="0.6" transform="rotate(-40.2 1636 786.7)"/><rect x="1621.3" y="806.3" width="2" height="3.9" fill="#dedede" stroke="#b0b0b0" stroke-width="0.6" transform="rotate(-39.3 1622.3 808.2)"/><rect x="1616.6" y="803.4" width="3.1" height="2.4" fill="#dedede" stroke="#b0b0b0" stroke-width="0.6" transform="rotate(-44 1618.1 804.6)"/><rect x="1601.1" y="779.2" width="3.6" height="2.4" fill="#dedede" stroke="#b0b0b0" stroke-width="0.6" transform="rotate(-50.9 1602.9 780.4)"/><rect x="1606.3" y="778.5" width="3.4" height="3.9" fill="#dedede" stroke="#b0b0b0" stroke-width="0.6" transform="rotate(-37.8 1608 780.4)"/><rect x="1607" y="786" width="4.8" height="2.5" fill="#dedede" stroke="#b0b0b0" stroke-width="0.6" transform="rotate(-58.2 1609.4 787.2)"/><rect x="1605.5" y="778.8" width="2.3" height="3.1" fill="#dedede" stroke="#b0b0b0" stroke-width="0.6" transform="rotate(-35.8 1606.6 780.4)"/><rect x="1622.3" y="798.1" width="3.4" height="3.1" fill="#dedede" stroke="#b0b0b0" stroke-width="0.6" transform="rotate(-32.4 1624 799.7)"/><rect x="1624.7" y="771" width="4.9" height="2.2" fill="#dedede" stroke="#b0b0b0" stroke-width="0.6" transform="rotate(-56.4 1627.1 772.1)"/><rect x="1601.4" y="779" width="2.8" height="2.3" fill="#dedede" stroke="#b0b0b0" stroke-width="0.6" transform="rotate(-35.6 1602.8 780.2)"/><rect x="1617.3" y="798.4" width="4.4" height="3" fill="#dedede" stroke="#b0b0b0" stroke-width="0.6" transform="rotate(-42.3 1619.5 799.9)"/><rect x="1603.7" y="787.9" width="2.2" height="2.9" fill="#dedede" stroke="#b0b0b0" stroke-width="0.6" transform="rotate(-30.7 1604.8 789.4)"/><rect x="1619.7" y="795.3" width="2.6" height="2.6" fill="#dedede" stroke="#b0b0b0" stroke-width="0.6" transform="rotate(-50.8 1621 796.6)"/><rect x="1633.9" y="771.9" width="3.2" height="3" fill="#dedede" stroke="#b0b0b0" stroke-width="0.6" transform="rotate(-33.3 1635.5 773.4)"/><rect x="1611.1" y="794.2" width="3.7" height="3.8" fill="#dedede" stroke="#b0b0b0" stroke-width="0.6" transform="rotate(-59.3 1613 796.1)"/><rect x="1608.9" y="789.5" width="2.7" height="3.3" fill="#dedede" stroke="#b0b0b0" stroke-width="0.6" transform="rotate(-30.5 1610.3 791.2)"/><rect x="1657" y="790.7" width="3.7" height="3.3" fill="#dedede" stroke="#b0b0b0" stroke-width="0.6" transform="rotate(-30.4 1658.9 792.4)"/><rect x="1654.3" y="794.9" width="3.1" height="2" fill="#dedede" stroke="#b0b0b0" stroke-width="0.6" transform="rotate(-53.8 1655.9 796)"/><rect x="1665.4" y="797.4" width="3.3" height="2.1" fill="#dedede" stroke="#b0b0b0" stroke-width="0.6" transform="rotate(-51.4 1667.1 798.5)"/><rect x="1653.3" y="803.5" width="3.6" height="3.2" fill="#dedede" stroke="#b0b0b0" stroke-width="0.6" transform="rotate(-46.3 1655.1 805.1)"/><rect x="1659" y="788.7" width="4.8" height="3.5" fill="#dedede" stroke="#b0b0b0" stroke-width="0.6" transform="rotate(-38.9 1661.4 790.4)"/><rect x="1645.9" y="791.3" width="4.9" height="3.6" fill="#dedede" stroke="#b0b0b0" stroke-width="0.6" transform="rotate(-59.9 1648.3 793.2)"/><rect x="1659.4" y="799.8" width="4" height="3.8" fill="#dedede" stroke="#b0b0b0" stroke-width="0.6" transform="rotate(-43.7 1661.4 801.6)"/><rect x="1661.6" y="788.6" width="4.2" height="3.1" fill="#dedede" stroke="#b0b0b0" stroke-width="0.6" transform="rotate(-45.9 1663.7 790.1)"/><rect x="1656.9" y="806.8" width="3.9" height="2.1" fill="#dedede" stroke="#b0b0b0" stroke-width="0.6" transform="rotate(-57.4 1658.8 807.9)"/><rect x="1663.5" y="806.8" width="4.2" height="3.4" fill="#dedede" stroke="#b0b0b0" stroke-width="0.6" transform="rotate(-40.9 1665.6 808.5)"/><rect x="1035" y="708" width="24" height="6" fill="#dedede" stroke="#b0b0b0" stroke-width="0.6" transform="rotate(-15 1047 711)"/><rect x="1043" y="703" width="7" height="18" fill="#dedede" stroke="#b0b0b0" stroke-width="0.6" transform="rotate(-15 1046.5 712)"/><polyline points="1269,0 1273,53" fill="none" stroke="#8f8f8f" stroke-width="0.8"/><polyline points="1291,0 1309,53" fill="none" stroke="#8f8f8f" stroke-width="0.9"/><polyline points="1611,0 1580,19 1571.4,31.5 1565,53" fill="none" stroke="#8f8f8f" stroke-width="0.9"/><polyline points="1609,4.2 1624,11.6 1643,2.1 1683,0" fill="none" stroke="#9c9c9c" stroke-width="0.9" stroke-dasharray="4 2"/><polyline points="1605,8.4 1593.5,20 1601,53" fill="none" stroke="#9c9c9c" stroke-width="0.9" stroke-dasharray="4 2"/><polyline points="1813,49 1822,60" fill="none" stroke="#8f8f8f" stroke-width="0.7"/><polyline points="1819,49 1827,62" fill="none" stroke="#8f8f8f" stroke-width="0.7"/><polyline points="1048,0 1046,53" fill="none" stroke="#8f8f8f" stroke-width="0.8"/><polyline points="1075,0 1080,53" fill="none" stroke="#8f8f8f" stroke-width="0.8"/><polyline points="1050,30 1110,35" fill="none" stroke="#8f8f8f" stroke-width="0.8"/><polyline points="1110,0 1100,53" fill="none" stroke="#8f8f8f" stroke-width="0.7"/><rect x="1074.6" y="29.2" width="4" height="4.4" fill="#dedede" stroke="#b0b0b0" stroke-width="0.6"/><rect x="1074.1" y="24.9" width="4.5" height="4.6" fill="#dedede" stroke="#b0b0b0" stroke-width="0.6"/><rect x="1089.3" y="11.6" width="4.6" height="5.4" fill="#dedede" stroke="#b0b0b0" stroke-width="0.6"/><rect x="1079" y="3.8" width="2.8" height="3.3" fill="#dedede" stroke="#b0b0b0" stroke-width="0.6"/><rect x="1098.6" y="17.5" width="4.4" height="4.3" fill="#dedede" stroke="#b0b0b0" stroke-width="0.6"/><rect x="1082.8" y="6.1" width="3.2" height="3.4" fill="#dedede" stroke="#b0b0b0" stroke-width="0.6"/><rect x="1105.6" y="10.4" width="3.2" height="5.2" fill="#dedede" stroke="#b0b0b0" stroke-width="0.6"/><rect x="1093.9" y="48.2" width="4.9" height="4.7" fill="#dedede" stroke="#b0b0b0" stroke-width="0.6"/><rect x="1100.8" y="0.1" width="3.1" height="5.9" fill="#dedede" stroke="#b0b0b0" stroke-width="0.6"/><rect x="1076.5" y="14.9" width="4.1" height="3.7" fill="#dedede" stroke="#b0b0b0" stroke-width="0.6"/><rect x="1100.2" y="16.5" width="3.5" height="3.3" fill="#dedede" stroke="#b0b0b0" stroke-width="0.6"/><rect x="1083.7" y="22.1" width="4.2" height="3.4" fill="#dedede" stroke="#b0b0b0" stroke-width="0.6"/><rect x="1053.1" y="43.1" width="4.9" height="5.1" fill="#dedede" stroke="#b0b0b0" stroke-width="0.6"/><rect x="1059.4" y="15" width="4.6" height="5.3" fill="#dedede" stroke="#b0b0b0" stroke-width="0.6"/><rect x="1081.8" y="31.4" width="4.5" height="5.8" fill="#dedede" stroke="#b0b0b0" stroke-width="0.6"/><rect x="1065.8" y="48" width="3.8" height="4.3" fill="#dedede" stroke="#b0b0b0" stroke-width="0.6"/><rect x="1051.5" y="9.4" width="3" height="5.6" fill="#dedede" stroke="#b0b0b0" stroke-width="0.6"/><rect x="1051.4" y="32.7" width="3.1" height="4.2" fill="#dedede" stroke="#b0b0b0" stroke-width="0.6"/><polyline points="1799,112 1827.5,132" fill="none" stroke="#8f8f8f" stroke-width="0.8"/><polyline points="1799,122 1827.5,146" fill="none" stroke="#8f8f8f" stroke-width="0.8"/><polyline points="1805,100 1825,110 1827.5,150" fill="none" stroke="#8f8f8f" stroke-width="0.7"/><rect x="1806" y="116" width="14" height="3" fill="#dedede" stroke="#b0b0b0" stroke-width="0.6" transform="rotate(35 1813 117.5)"/><rect x="1806" y="130" width="14" height="3" fill="#dedede" stroke="#b0b0b0" stroke-width="0.6" transform="rotate(35 1813 131.5)"/><polyline points="1799,210 1810,195 1827.5,190" fill="none" stroke="#8f8f8f" stroke-width="0.7"/><polyline points="1806,50 1820,80 1825,130" fill="none" stroke="#9c9c9c" stroke-width="0.9" stroke-dasharray="4 2"/><polyline points="1827.5,172.3 1840,174 1861.5,168.7 1883,133 1899,125.8" fill="none" stroke="#9c9c9c" stroke-width="0.9" stroke-dasharray="4 2"/><polyline points="1827.5,252.7 1865,222.3 1899,220.5" fill="none" stroke="#9c9c9c" stroke-width="0.9" stroke-dasharray="4 2"/><polyline points="1827.5,295.6 1899,290.3" fill="none" stroke="#9c9c9c" stroke-width="0.9" stroke-dasharray="4 2"/><polyline points="1861.5,295.6 1861.5,330" fill="none" stroke="#8f8f8f" stroke-width="0.7"/><polyline points="1827.5,322.4 1899,304.6" fill="none" stroke="#8f8f8f" stroke-width="0.9"/><polyline points="1827.5,345 1899,320" fill="none" stroke="#8f8f8f" stroke-width="0.9"/><polyline points="1861,338 1899,345" fill="none" stroke="#9c9c9c" stroke-width="0.9" stroke-dasharray="4 2"/><polyline points="1799,493.4 1827.5,488" fill="none" stroke="#8f8f8f" stroke-width="0.8"/><polyline points="1827.5,493.4 1899,480.9" fill="none" stroke="#8f8f8f" stroke-width="0.9"/><polyline points="1879,488 1897,505.9 1897,527.4 1879,548.8 1861.5,577.4" fill="none" stroke="#9c9c9c" stroke-width="0.9" stroke-dasharray="4 2"/><polyline points="1827.5,575.6 1854.4,602.4 1899,606" fill="none" stroke="#8f8f8f" stroke-width="0.8"/><polyline points="1841.5,590 1855,603.6 1899,600.9" fill="none" stroke="#8f8f8f" stroke-width="0.8"/><polyline points="1828,555 1840,560 1845,575" fill="none" stroke="#8f8f8f" stroke-width="0.7"/><polyline points="1868,637 1870,680 1885,700 1899,760" fill="none" stroke="#9c9c9c" stroke-width="0.9" stroke-dasharray="4 2"/><polyline points="1834,658 1899,658" fill="none" stroke="#9c9c9c" stroke-width="0.9" stroke-dasharray="4 2"/><rect x="1856" y="482.3" width="2.6" height="2.1" fill="#dedede" stroke="#b0b0b0" stroke-width="0.6" transform="rotate(3.3 1857.3 483.4)"/><rect x="1843" y="495.6" width="2.1" height="2.6" fill="#dedede" stroke="#b0b0b0" stroke-width="0.6" transform="rotate(-18.4 1844 496.9)"/><rect x="1832.3" y="487.4" width="2.6" height="2.9" fill="#dedede" stroke="#b0b0b0" stroke-width="0.6" transform="rotate(-0.9 1833.6 488.8)"/><rect x="1848.7" y="478.6" width="2.6" height="2.2" fill="#dedede" stroke="#b0b0b0" stroke-width="0.6" transform="rotate(-29.4 1850 479.7)"/><rect x="1839.7" y="491.9" width="2.6" height="2.4" fill="#dedede" stroke="#b0b0b0" stroke-width="0.6" transform="rotate(-5.1 1840.9 493.1)"/><rect x="1856.1" y="496.1" width="3.2" height="2.6" fill="#dedede" stroke="#b0b0b0" stroke-width="0.6" transform="rotate(3.7 1857.8 497.4)"/><rect x="1832.8" y="494.2" width="3.4" height="2.6" fill="#dedede" stroke="#b0b0b0" stroke-width="0.6" transform="rotate(1.7 1834.5 495.5)"/><rect x="1849" y="496.2" width="2.1" height="2.7" fill="#dedede" stroke="#b0b0b0" stroke-width="0.6" transform="rotate(-5 1850.1 497.6)"/><rect x="1873.5" y="617.4" width="2.9" height="2.9" fill="#dedede" stroke="#b0b0b0" stroke-width="0.6" transform="rotate(-3.3 1875 618.9)"/><rect x="1872.1" y="604.4" width="2.9" height="2.7" fill="#dedede" stroke="#b0b0b0" stroke-width="0.6" transform="rotate(12.1 1873.5 605.7)"/><rect x="1838.5" y="597" width="3.1" height="2.6" fill="#dedede" stroke="#b0b0b0" stroke-width="0.6" transform="rotate(-14.7 1840 598.2)"/><rect x="1838.5" y="593.7" width="4" height="2" fill="#dedede" stroke="#b0b0b0" stroke-width="0.6" transform="rotate(19 1840.5 594.8)"/><rect x="1833.2" y="613.7" width="3.3" height="2.3" fill="#dedede" stroke="#b0b0b0" stroke-width="0.6" transform="rotate(14.8 1834.9 614.9)"/><rect x="1857.1" y="586.3" width="3.3" height="2.7" fill="#dedede" stroke="#b0b0b0" stroke-width="0.6" transform="rotate(17.7 1858.8 587.6)"/><rect x="1846.5" y="627.1" width="3.7" height="2.2" fill="#dedede" stroke="#b0b0b0" stroke-width="0.6" transform="rotate(28.6 1848.4 628.2)"/><rect x="1835.6" y="621.9" width="3.6" height="2.8" fill="#dedede" stroke="#b0b0b0" stroke-width="0.6" transform="rotate(19.4 1837.4 623.3)"/><rect x="1868.3" y="623.6" width="2.4" height="2.9" fill="#dedede" stroke="#b0b0b0" stroke-width="0.6" transform="rotate(23.9 1869.5 625)"/><rect x="1868.1" y="592.4" width="2.2" height="2.2" fill="#dedede" stroke="#b0b0b0" stroke-width="0.6" transform="rotate(-9.1 1869.2 593.5)"/><rect x="1808.8" y="347.1" width="3.6" height="2.8" fill="#dedede" stroke="#b0b0b0" stroke-width="0.6" transform="rotate(11.8 1810.5 348.5)"/><rect x="1807.3" y="344.2" width="4" height="2.6" fill="#dedede" stroke="#b0b0b0" stroke-width="0.6" transform="rotate(-18.8 1809.3 345.5)"/><rect x="1804.5" y="352.9" width="3.2" height="2.7" fill="#dedede" stroke="#b0b0b0" stroke-width="0.6" transform="rotate(6.3 1806.1 354.2)"/><text x="808.5" y="344.3" font-size="14.8" fill="#626262" font-family="Liberation Sans">Rissasenperä</text><text x="981.5" y="330.2" font-size="14.5" fill="#626262" font-family="Liberation Sans">Kiviharju</text><clipPath id="cp1"><rect x="900" y="0" width="198" height="811"/></clipPath><g clip-path="url(#cp1)"><text x="1030.8" y="186" font-size="15.5" fill="#626262" font-family="Liberation Sans">Paulaharju</text></g><text x="861" y="450" font-size="17" fill="#4a7fc6" transform="rotate(50 861 450)" font-family="Liberation Sans">Jeesiöjoki</text><text x="930" y="596.8" font-size="22" letter-spacing="1.5" fill="#5e5e5e" stroke="#fff" stroke-width="2" paint-order="stroke" font-family="Liberation Sans">SODANKYLÄ</text><text x="764.4" y="566.5" font-size="11" fill="#626262" font-family="Liberation Sans">Nurmela</text><text x="680" y="717" font-size="14.9" fill="#606060" font-style="italic" font-family="Liberation Sans">Pietarijänkä</text><text x="819" y="741" font-size="11.2" fill="#626262" font-family="Liberation Sans">Kangas</text><text x="834.5" y="778" font-size="11" fill="#626262" font-family="Liberation Sans">Vesala</text><text x="892" y="790" font-size="14.8" fill="#626262" font-family="Liberation Sans">Emaus</text><text x="1184" y="792.5" font-size="14.9" fill="#626262" font-family="Liberation Sans">Kylälaakso</text><text x="1531" y="788.5" font-size="11.1" fill="#626262" font-family="Liberation Sans">Puistola</text><text x="1834" y="639.5" font-size="11.1" fill="#626262" font-family="Liberation Sans">Viertola</text><text x="1847" y="569.5" font-size="11.1" fill="#626262" font-family="Liberation Sans">Ukkola</text><text x="1883" y="587" font-size="11.1" fill="#626262" font-family="Liberation Sans">Nuj</text><text x="392.6" y="809.5" font-size="11" fill="#626262" font-family="Liberation Sans">Tuulentupa</text><text x="285" y="615" font-size="12" fill="#626262" font-family="Liberation Sans">Levanmaa</text><text x="1793" y="71.3" font-size="18.5" fill="#5a5a5a" font-family="Liberation Sans">as</text><text x="722" y="69.3" font-size="18.5" fill="#5a5a5a" font-family="Liberation Sans">as</text><text x="1886" y="94" font-size="16" fill="#5a5a5a" font-style="italic" font-family="Liberation Sans">K</text><text x="1146" y="21" font-size="12.3" fill="#4a7fc6" font-family="Liberation Sans">Karjalammit</text><text x="-2" y="28" font-size="12" fill="#4a7fc6" transform="rotate(25 -2 28)" font-family="Liberation Sans">eoja</text><text x="576" y="28" font-size="6.5" fill="#555" transform="rotate(-12 576 28)" font-family="Liberation Sans">Kyläjokitie</text><text x="155" y="619" font-size="6.5" fill="#555" transform="rotate(7 155 619)" font-family="Liberation Sans">Kittiläntie</text><text x="410" y="648" font-size="6.5" fill="#555" transform="rotate(6 410 648)" font-family="Liberation Sans">Kittiläntie</text><text x="528" y="655" font-size="6.5" fill="#555" transform="rotate(3 528 655)" font-family="Liberation Sans">Kittiläntie</text><text x="809" y="673" font-size="6.5" fill="#555" transform="rotate(2 809 673)" font-family="Liberation Sans">Kittiläntie</text><text x="1850" y="491" font-size="6.5" fill="#555" font-family="Liberation Sans">Porkka</text><text x="825" y="62" font-size="6.5" fill="#555" transform="rotate(45 825 62)" font-family="Liberation Sans">Kirkkotie</text><text x="770" y="170" font-size="6.5" fill="#555" transform="rotate(35 770 170)" font-family="Liberation Sans">Jäkäläntie</text><text x="880" y="230" font-size="6.5" fill="#555" transform="rotate(65 880 230)" font-family="Liberation Sans">Kirkkotie</text><text x="1010" y="55" font-size="6.5" fill="#555" font-family="Liberation Sans">Sivutie</text><text x="1066" y="104" font-size="6.5" fill="#555" transform="rotate(-70 1066 104)" font-family="Liberation Sans">Pohjantie</text><text x="960" y="255" font-size="6.5" fill="#555" transform="rotate(-35 960 255)" font-family="Liberation Sans">Rauhala</text><text x="1000" y="325" font-size="6.5" fill="#555" transform="rotate(-35 1000 325)" font-family="Liberation Sans">Tähti</text></svg></div>

<!-- LEFT DIALOG -->
<div class="win" style="left:33px;top:51px">
  <div class="title"><span>OGC API Processes</span>
    <svg class="xbtn" viewBox="0 0 16 16"><path d="M0.5 0.5L15.5 15.5M15.5 0.5L0.5 15.5" stroke="#fff" stroke-width="1.3"/></svg>
  </div>
  <div class="combo" style="left:10px;top:64px;width:550px;height:31px"><span class="lbl" style="left:3px;top:5px">MML</span>
    <svg class="abs" style="left:527px;top:10px" width="12" height="9" viewBox="0 0 12 9"><path d="M0.8 2.5L6.1 7.8L11.4 2.5" fill="none" stroke="#333" stroke-width="1.1"/></svg></div>
  <div class="list" style="left:10px;top:110px;width:550px;height:371px;padding-top:2px">
    <div>Kiinteistöjaotus, vektori, bbox</div>
    <div>Kiinteistöjaotus, vektori, koko Suomi, EPSG:3067</div>
    <div>Kiinteistöjaotus, vektori, kunta</div>
    <div>Kiinteistöjaotus, vektori, polygon</div>
    <div>Kiinteistörekisterin sisältö karttalehtirajauksella (rasteri), EPSG:3067</div>
    <div>Kiinteistörekisterin sisältö karttalehtirajauksella (vektori), EPSG:3067</div>
  </div>
  <div class="btn" style="left:571px;top:65px">Suorita <span class="ast">*</span></div>
  <div class="btn" style="left:571px;top:111px">Sulje</div>
  <div class="btn" style="left:571px;top:157px">Ohje</div>
  <div class="btn" style="left:571px;top:249px">Lisää <span class="ast">*</span></div>
  <div class="btn" style="left:571px;top:295px">Editoi</div>
  <div class="btn" style="left:571px;top:341px">Poista</div>
  <div class="btn" style="left:571px;top:444px">Asetukset</div>
  <div class="btn" style="left:571px;top:504px">Suosikki <span class="ast">*</span></div>
  <span class="lbl" style="left:11px;top:516px">Haku</span>
  <div class="abs" style="left:120px;top:503px;width:440px;height:31px;background:#fff;border:1px solid #0078d7"><span class="lbl" style="left:7px;top:4px">Kiinteis</span>
    <svg class="abs" style="left:417px;top:10px" width="12" height="9" viewBox="0 0 12 9"><path d="M0.6 2.5L6.1 7.8L11.6 2.5" fill="none" stroke="#333" stroke-width="1.1"/></svg></div>
</div>
<div class="hl" style="left:39px;top:520px;width:563px;height:90px"></div>

<!-- RIGHT DIALOG -->
<div class="win" style="left:1104px;top:53px">
  <div class="title"><span>OGC API Processes</span>
    <svg class="xbtn" viewBox="0 0 16 16"><path d="M0.5 0.5L15.5 15.5M15.5 0.5L0.5 15.5" stroke="#fff" stroke-width="1.3"/></svg>
  </div>
  <div class="combo" style="left:10px;top:64px;width:550px;height:31px"><span class="lbl" style="left:3px;top:5px">MML</span>
    <svg class="abs" style="left:527px;top:10px" width="12" height="9" viewBox="0 0 12 9"><path d="M0.8 2.5L6.1 7.8L11.4 2.5" fill="none" stroke="#333" stroke-width="1.1"/></svg></div>
  <div class="list sb" style="left:10px;top:110px;width:550px;height:371px;padding-top:2px">
    <div>Hallinnolliset aluejaot, rasteri, koko Suomi, EPSG:3067</div>
    <div>Hallinnolliset aluejaot, vektori, koko Suomi, EPSG:3067</div>
    <div>Karttalehtijako, koko Suomi, EPSG:3067</div>
    <div>Karttalehtikohtaisten 3d-rakennustiedostojen haku, EPSG:3067</div>
    <div>Karttalehtikohtaisten korkeusmalli 10 m -tiedostojen haku, EPSG:3067</div>
    <div>Karttalehtikohtaisten korkeusmalli 2 m -tiedostojen haku, EPSG:3067</div>
    <div>Karttalehtikohtaisten korkeusvyöhykekuvien haku, EPSG:3067</div>
    <div>Karttalehtikohtaisten laserkeilausaineistotiedostojen haku, EPSG:3067</div>
    <div>Karttalehtikohtaisten maastokarttarastereiden haku, EPSG:3067</div>
    <div>Karttalehtikohtaisten maastokarttavektoreiden haku, EPSG:3067</div>
    <div>Karttalehtikohtaisten ortoilmakuvien haku, EPSG:3067</div>
    <div>Karttalehtikohtaisten rinnevarjostekuvien haku, EPSG:3067</div>
    <div>Karttalehtikohtaisten taustakarttarastereiden haku, EPSG:3067</div>
    <div>Kiinteistöjaotus, vektori, bbox</div>
    <div>Kiinteistöjaotus, vektori, koko Suomi, EPSG:3067</div>
    <div>Kiinteistöjaotus, vektori, kunta</div>
    <div class="abs" style="left:518px;top:1px;width:29px;height:367px;background:#f0f0f0;padding:0"></div>
    <div class="abs" style="left:518px;top:31px;width:28px;height:136px;background:#cdcdcd;padding:0"></div>
    <svg class="abs" style="left:526.8px;top:12.8px" width="12" height="10" viewBox="0 0 11.4 9.4"><polygon points="0,6.2 5.7,0.3 11.4,6.2 11.4,9.2 5.7,3.4 0,9.2" fill="#606060"/></svg>
    <svg class="abs" style="left:526.8px;top:349.7px" width="12" height="10" viewBox="0 0 11.4 9.4"><polygon points="0,0.2 5.7,6 11.4,0.2 11.4,3.2 5.7,9.1 0,3.2" fill="#606060"/></svg>
  </div>
  <div class="btn" style="left:571px;top:65px">Suorita <span class="ast">*</span></div>
  <div class="btn" style="left:571px;top:111px">Sulje</div>
  <div class="btn" style="left:571px;top:157px">Ohje</div>
  <div class="btn" style="left:571px;top:249px">Lisää <span class="ast">*</span></div>
  <div class="btn" style="left:571px;top:295px">Editoi</div>
  <div class="btn" style="left:571px;top:341px">Poista</div>
  <div class="btn" style="left:571px;top:444px">Asetukset</div>
  <div class="btn" style="left:571px;top:504px">Suosikki <span class="ast">*</span></div>
  <span class="lbl" style="left:11px;top:516px">Haku</span>
</div>
<div class="abs" style="left:1225px;top:556px;width:440px;height:32px;background:#fff;border:1px solid #0078d7;border-bottom-width:2px">
  <div class="abs" style="left:409px;top:-1px;width:30px;height:32px;background:#cce4f7;border:1px solid #0a569e;border-right:none"></div>
  <svg class="abs" style="left:417px;top:10px" width="12" height="9" viewBox="0 0 12 9"><path d="M0.6 2.5L6.1 7.8L11.6 2.5" fill="none" stroke="#333" stroke-width="1.1"/></svg>
</div>
<div class="drop" style="left:1225px;top:588px;width:440px;height:93px;overflow:hidden;border-top:none;box-shadow:3px 3px 4px rgba(0,0,0,0.25)">
  <div style="height:23px"></div>
  <div style="height:23px;line-height:23px;background:#0078d7;color:#fff;white-space:nowrap;padding-left:2px">Kiintopisterekisterin tietojen hakeminen polygon-rajauksella</div>
  <div style="height:23px;line-height:23px;white-space:nowrap;padding-left:2px">Karttalehtikohtaisten korkeusmalli 10 m -tiedostojen haku</div>
  <div style="height:23px;line-height:23px;white-space:nowrap;padding-left:2px">Korkeusmalli 2 m -tietojen hakeminen bbox-rajauksella</div>
</div>
<div class="hl" style="left:1662px;top:544px;width:137px;height:57px"></div>

</body></html>
